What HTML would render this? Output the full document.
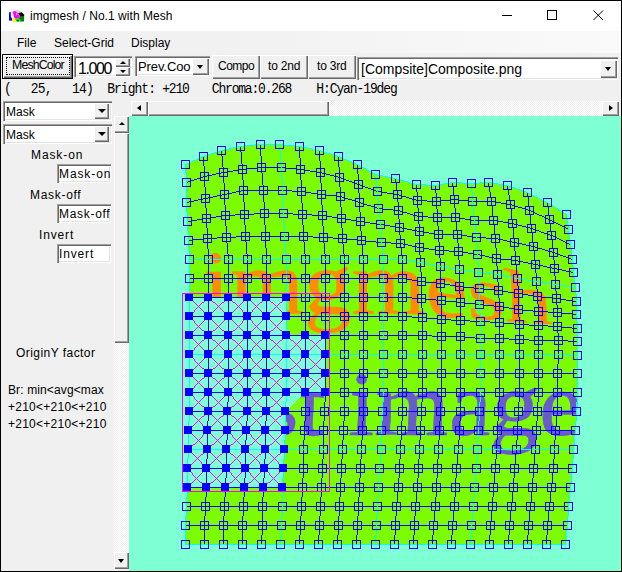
<!DOCTYPE html>
<html lang="en">
<head>
<meta charset="utf-8">
<title>imgmesh / No.1 with Mesh</title>
<style>
html,body{margin:0;padding:0;}
body{width:622px;height:572px;overflow:hidden;position:relative;background:#F0F0F0;
 font-family:"Liberation Sans",sans-serif;font-size:12px;color:#000;}
.a{position:absolute;white-space:pre;line-height:1;}
#win{left:0;top:0;width:620px;height:570px;border:1px solid #000;}
#title{left:1px;top:1px;width:620px;height:30px;background:#fff;}
#menu{left:1px;top:31px;width:620px;height:22px;background:linear-gradient(to right,#F0F0F0 0%,#F1F1F1 35%,#FAFAFA 100%);}
.btn{position:absolute;background:#F0F0F0;box-shadow:inset 1px 1px 0 #fff,inset -1px -1px 0 #696969,inset -2px -2px 0 #A0A0A0;}
.sunk{position:absolute;background:#fff;box-shadow:inset 1px 1px 0 #A0A0A0,inset 2px 2px 0 #696969,inset -1px -1px 0 #fff,inset -2px -2px 0 #E3E3E3;}
.t{position:absolute;white-space:pre;line-height:1;transform-origin:0 0;}
.st{top:82px;font-family:'Liberation Mono',monospace;font-size:13px;transform:scale(1,1.13);}
.arrow{position:absolute;width:0;height:0;border-style:solid;}
.track{position:absolute;background:repeating-conic-gradient(#FFFFFF 0% 25%,#F0F0F0 0% 50%) 0 0/2px 2px;}
.cv{position:absolute;left:129px;top:116px;}
#canvas{left:129px;top:116px;width:492px;height:455px;background:#7FFFD4;}
</style>
</head>
<body>
<div class="a" id="title"></div>
<div class="a" id="menu"></div>

<!-- app icon -->
<svg class="a" style="left:8px;top:9px" width="18" height="15" viewBox="8 9 18 15">
<polygon points="9,12.4 10.8,12 10.8,17 12.6,18.5 12.4,20.8 9,20.6" fill="#0000FF"/>
<polygon points="11,12.2 13.4,11.6 14.5,17 11.2,17.2" fill="#FFFFFF"/>
<polygon points="15,10.6 18.5,10 21.8,12.6 19,13.8 16,12.6" fill="#D0D0D0"/>
<polygon points="18.2,13.2 21.6,12.2 24.3,14.8 24,16.8 20,16.8" fill="#000000"/>
<polygon points="12.4,11.8 15.2,11 17.5,13 19.8,16.6 18.8,18.8 14.6,18.8 13.6,15" fill="#FF00FF"/>
<polygon points="15.8,13.2 17,13 17.4,15 16.2,15.4" fill="#FF80FF"/>
<polygon points="19.5,17 24.1,16.4 24.1,21.4 19.8,21.6 18.6,19" fill="#008000"/>
<polygon points="14.4,19 18.8,18.6 20.4,19.6 20.6,21.2 15.4,21.4" fill="#00FF00"/>
<polygon points="11.8,18 14,17.8 16.6,21.2 15.6,22.2 12.6,21.4" fill="#FFFF00"/>
<polygon points="16.6,20 18.6,19.8 18.8,21.4 17,21.6" fill="#003000"/>
</svg>
<div class="t" style="left:30px;top:10px;font-size:12px;letter-spacing:0.05px;" id="ttl">imgmesh / No.1 with Mesh</div>

<!-- window controls -->
<svg class="a" style="left:495px;top:1px" width="126" height="30" viewBox="495 1 126 30" shape-rendering="crispEdges" fill="none" stroke="#000" stroke-width="1">
<path d="M502 15.5h10"/>
<rect x="547.5" y="10.5" width="9" height="9"/>
<path d="M593.5 10.5l9.5 9.5M603 10.5l-9.5 9.5" shape-rendering="auto"/>
</svg>

<!-- menu -->
<div class="t" style="left:17px;top:37px;" id="m1">File</div>
<div class="t" style="left:54px;top:37px;" id="m2">Select-Grid</div>
<div class="t" style="left:131px;top:37px;" id="m3">Display</div>

<!-- toolbar -->
<div class="a" style="left:2px;top:54px;width:71px;height:25px;background:#000;"></div>
<div class="btn" style="left:3px;top:55px;width:69px;height:23px;"></div>
<div class="a" style="left:6px;top:57px;width:62px;height:16px;border:1px dotted #000;"></div>
<div class="t" style="left:12px;top:59px;font-size:12.3px;letter-spacing:-0.85px;" id="b0">MeshColor</div>

<div class="sunk" style="left:74px;top:56px;width:58px;height:21px;"></div>
<div class="t" style="left:78px;top:61px;font-size:16px;letter-spacing:-1.4px;" id="spin">1.000</div>
<div class="btn" style="left:115px;top:58px;width:15px;height:9px;"></div>
<div class="btn" style="left:115px;top:67px;width:15px;height:9px;"></div>
<div class="arrow" style="left:120px;top:61px;border-width:0 3px 3px 3px;border-color:transparent transparent #000 transparent;"></div>
<div class="arrow" style="left:120px;top:70px;border-width:3px 3px 0 3px;border-color:#000 transparent transparent transparent;"></div>

<div class="sunk" style="left:135px;top:56px;width:75px;height:20px;"></div>
<div class="t" style="left:138px;top:60px;font-size:13px;letter-spacing:-0.1px;" id="cb1">Prev.Coo</div>
<div class="btn" style="left:192px;top:58px;width:17px;height:17px;"></div>
<div class="arrow" style="left:197px;top:65px;border-width:4px 3.5px 0 3.5px;border-color:#000 transparent transparent transparent;"></div>

<div class="btn" style="left:212px;top:55px;width:48px;height:24px;"></div>
<div class="t" style="left:218px;top:60px;letter-spacing:-0.5px;" id="b1">Compo</div>
<div class="btn" style="left:260px;top:55px;width:48px;height:24px;"></div>
<div class="t" style="left:268px;top:60px;letter-spacing:-0.2px;" id="b2">to 2nd</div>
<div class="btn" style="left:308px;top:55px;width:48px;height:24px;"></div>
<div class="t" style="left:317px;top:60px;letter-spacing:-0.2px;" id="b3">to 3rd</div>

<div class="sunk" style="left:357px;top:57px;width:261px;height:23px;"></div>
<div class="t" style="left:361px;top:62px;font-size:14px;" id="cb2">[Compsite]Composite.png</div>
<div class="btn" style="left:600px;top:60px;width:17px;height:18px;"></div>
<div class="arrow" style="left:605px;top:67px;border-width:4px 3.5px 0 3.5px;border-color:#000 transparent transparent transparent;"></div>

<!-- status line -->
<div class="t st" style="left:4.0px;letter-spacing:0px;" id="st0">(</div><div class="t st" style="left:30.8px;letter-spacing:-0.8px;" id="st1">25,</div><div class="t st" style="left:72.0px;letter-spacing:-0.8px;" id="st2">14)</div><div class="t st" style="left:107.2px;letter-spacing:-0.97px;" id="st3">Bright:</div><div class="t st" style="left:162.2px;letter-spacing:-1.2px;" id="st4">+210</div><div class="t st" style="left:211.8px;letter-spacing:-1.19px;" id="st5">Chroma:0.268</div><div class="t st" style="left:316.3px;letter-spacing:-1.1px;" id="st6">H:Cyan-19deg</div>

<!-- left panel -->
<div class="sunk" style="left:3px;top:101px;width:109px;height:20px;"></div>
<div class="t" style="left:6px;top:106px;" id="k1">Mask</div>
<div class="btn" style="left:94px;top:103px;width:15px;height:16px;"></div>
<div class="arrow" style="left:98px;top:109px;border-width:4px 4px 0 4px;border-color:#000 transparent transparent transparent;"></div>
<div class="sunk" style="left:3px;top:124px;width:109px;height:20px;"></div>
<div class="t" style="left:6px;top:129px;" id="k2">Mask</div>
<div class="btn" style="left:94px;top:126px;width:15px;height:16px;"></div>
<div class="arrow" style="left:98px;top:132px;border-width:4px 4px 0 4px;border-color:#000 transparent transparent transparent;"></div>

<div class="t" style="left:31px;top:149px;letter-spacing:0.9px;" id="l1">Mask-on</div>
<div class="sunk" style="left:57px;top:164px;width:54px;height:19px;"></div>
<div class="t" style="left:59px;top:168px;letter-spacing:0.9px;" id="e1">Mask-on</div>
<div class="t" style="left:30px;top:189px;letter-spacing:0.7px;" id="l2">Mask-off</div>
<div class="sunk" style="left:57px;top:204px;width:54px;height:19px;"></div>
<div class="t" style="left:59px;top:208px;letter-spacing:0.7px;" id="e2">Mask-off</div>
<div class="t" style="left:39px;top:229px;letter-spacing:0.85px;" id="l3">Invert</div>
<div class="sunk" style="left:57px;top:244px;width:54px;height:19px;"></div>
<div class="t" style="left:59px;top:248px;letter-spacing:0.85px;" id="e3">Invert</div>

<div class="t" style="left:16px;top:347px;letter-spacing:0.45px;" id="l4">OriginY factor</div>
<div class="t" style="left:8px;top:384px;letter-spacing:0.12px;" id="l5">Br: min&lt;avg&lt;max</div>
<div class="t" style="left:8px;top:401px;letter-spacing:0.25px;" id="l6">+210&lt;+210&lt;+210</div>
<div class="t" style="left:8px;top:418px;letter-spacing:0.25px;" id="l7">+210&lt;+210&lt;+210</div>

<!-- vertical scrollbar -->
<div class="track" style="left:114px;top:116px;width:15px;height:453px;"></div>
<div class="btn" style="left:114px;top:116px;width:15px;height:17px;"></div>
<div class="arrow" style="left:118.5px;top:122px;border-width:0 3px 3px 3px;border-color:transparent transparent #000 transparent;"></div>
<div class="btn" style="left:114px;top:133px;width:15px;height:210px;"></div>
<div class="btn" style="left:114px;top:552px;width:15px;height:17px;"></div>
<div class="arrow" style="left:118px;top:559px;border-width:4px 3px 0 3px;border-color:#000 transparent transparent transparent;"></div>

<!-- horizontal scrollbar -->
<div class="track" style="left:131px;top:101px;width:488px;height:15px;"></div>
<div class="btn" style="left:131px;top:101px;width:17px;height:15px;"></div>
<div class="arrow" style="left:137px;top:105px;border-width:3.5px 4px 3.5px 0;border-color:transparent #000 transparent transparent;"></div>
<div class="btn" style="left:148px;top:101px;width:181px;height:15px;"></div>
<div class="btn" style="left:602px;top:101px;width:17px;height:15px;"></div>
<div class="arrow" style="left:609px;top:105px;border-width:3.5px 0 3.5px 4px;border-color:transparent transparent transparent #000;"></div>

<!-- canvas -->
<div class="a" id="canvas"></div>
<svg class="cv" width="492" height="455" viewBox="129 116 492 455">
<defs>
<g id="tx" font-family="'Liberation Serif', serif" stroke-linejoin="round"><text transform="translate(203.4 313.5) scale(1.06 1)" font-size="90" fill="#FF8C00" stroke="#FF8C00" stroke-width="0.5" xml:space="preserve">imgmesh</text><text transform="translate(193.1 434.5) scale(1.06 1)" font-size="90" fill="#6A5ACD" stroke="#6A5ACD" stroke-width="0.5" xml:space="preserve">test image</text></g>
<clipPath id="c0"><path d="M187.97 240.05 208.09 238.13 189.23 260.14"/></clipPath>
<clipPath id="c1"><path d="M207.76 237.85 208.98 260.01 188.89 259.85"/></clipPath>
<clipPath id="c2"><path d="M207.01 238.01 227.09 237.13 208.24 260.15"/></clipPath>
<clipPath id="c3"><path d="M226.74 236.84 228.99 259.99 207.89 259.85"/></clipPath>
<clipPath id="c4"><path d="M226.01 237.01 246.08 236.11 228.28 260.16"/></clipPath>
<clipPath id="c5"><path d="M245.72 235.83 247.97 260.02 227.91 259.88"/></clipPath>
<clipPath id="c6"><path d="M245.02 235.99 266.1 236.14 247.27 260.16"/></clipPath>
<clipPath id="c7"><path d="M265.74 235.84 266.96 260.03 246.91 259.87"/></clipPath>
<clipPath id="c8"><path d="M265.04 235.97 285.09 236.13 266.26 260.16"/></clipPath>
<clipPath id="c9"><path d="M284.73 235.84 286.98 260.01 265.9 259.86"/></clipPath>
<clipPath id="c10"><path d="M284.03 235.98 304.09 236.12 286.28 260.17"/></clipPath>
<clipPath id="c11"><path d="M303.72 235.83 305.97 260.02 285.91 259.88"/></clipPath>
<clipPath id="c12"><path d="M303.03 235.98 324.11 237.16 305.27 260.16"/></clipPath>
<clipPath id="c13"><path d="M323.74 236.84 325.99 259.99 304.89 259.85"/></clipPath>
<clipPath id="c14"><path d="M323.03 236.98 343.11 238.16 325.27 260.16"/></clipPath>
<clipPath id="c15"><path d="M342.74 237.84 344.99 259.99 324.9 259.85"/></clipPath>
<clipPath id="c16"><path d="M342.03 237.98 362.13 240.2 344.25 260.16"/></clipPath>
<clipPath id="c17"><path d="M361.76 239.85 364.02 259.97 343.88 259.83"/></clipPath>
<clipPath id="c18"><path d="M360.99 240.02 382.15 242.24 363.22 260.14"/></clipPath>
<clipPath id="c19"><path d="M381.8 241.87 384.05 259.93 362.86 259.79"/></clipPath>
<clipPath id="c20"><path d="M380.97 242.04 401.15 243.23 383.21 260.14"/></clipPath>
<clipPath id="c21"><path d="M400.8 242.87 403.06 259.92 382.86 259.78"/></clipPath>
<clipPath id="c22"><path d="M399.99 243.02 420.18 247.35 402.17 260.12"/></clipPath>
<clipPath id="c23"><path d="M419.86 246.9 421.01 262.98 401.82 259.67"/></clipPath>
<clipPath id="c24"><path d="M418.97 247.04 440.18 250.34 420.11 263.08"/></clipPath>
<clipPath id="c25"><path d="M439.88 249.91 441.01 266.98 419.81 262.64"/></clipPath>
<clipPath id="c26"><path d="M438.97 250.05 459.15 251.25 440.16 267.11"/></clipPath>
<clipPath id="c27"><path d="M458.82 250.88 459.98 270.01 439.83 266.72"/></clipPath>
<clipPath id="c28"><path d="M458.02 250.99 478.17 254.28 459.18 270.12"/></clipPath>
<clipPath id="c29"><path d="M477.82 253.88 478.98 273.01 458.83 269.72"/></clipPath>
<clipPath id="c30"><path d="M477.03 253.98 497.18 258.32 478.17 273.12"/></clipPath>
<clipPath id="c31"><path d="M496.85 257.89 498.02 274.97 477.83 272.72"/></clipPath>
<clipPath id="c32"><path d="M495.98 258.03 516.17 260.28 497.15 275.11"/></clipPath>
<clipPath id="c33"><path d="M515.81 259.87 517.99 278.99 496.82 274.68"/></clipPath>
<clipPath id="c34"><path d="M515.01 260.01 536.18 264.32 517.19 279.13"/></clipPath>
<clipPath id="c35"><path d="M535.84 263.89 536.99 281.99 516.83 278.7"/></clipPath>
<clipPath id="c36"><path d="M535.02 263.99 555.18 268.33 536.15 282.11"/></clipPath>
<clipPath id="c37"><path d="M554.85 267.9 556.01 284.98 535.82 281.68"/></clipPath>
<clipPath id="c38"><path d="M554.01 268.01 574.18 272.35 555.14 285.1"/></clipPath>
<clipPath id="c39"><path d="M573.86 271.9 576.04 287.94 554.82 284.66"/></clipPath>
<clipPath id="c40"><path d="M189.01 259.01 209.13 259.19 189.19 279.13"/></clipPath>
<clipPath id="c41"><path d="M208.81 258.87 208.99 278.99 188.87 278.81"/></clipPath>
<clipPath id="c42"><path d="M207.99 259.02 229.13 259.2 208.17 279.12"/></clipPath>
<clipPath id="c43"><path d="M228.83 258.88 229.01 278.98 207.87 278.8"/></clipPath>
<clipPath id="c44"><path d="M228.01 259.01 248.13 259.19 228.19 279.13"/></clipPath>
<clipPath id="c45"><path d="M247.81 258.87 247.99 278.99 227.87 278.81"/></clipPath>
<clipPath id="c46"><path d="M247.01 259.01 267.13 259.19 247.19 279.13"/></clipPath>
<clipPath id="c47"><path d="M266.81 258.87 266.99 278.99 246.87 278.81"/></clipPath>
<clipPath id="c48"><path d="M265.99 259.02 287.13 259.2 266.17 279.12"/></clipPath>
<clipPath id="c49"><path d="M286.83 258.88 287.01 278.98 265.87 278.8"/></clipPath>
<clipPath id="c50"><path d="M286.01 259.01 306.13 259.19 286.19 279.13"/></clipPath>
<clipPath id="c51"><path d="M305.81 258.87 305.99 278.99 285.87 278.81"/></clipPath>
<clipPath id="c52"><path d="M304.99 259.02 326.13 259.2 305.17 279.12"/></clipPath>
<clipPath id="c53"><path d="M325.83 258.88 326.01 278.98 304.87 278.8"/></clipPath>
<clipPath id="c54"><path d="M325.01 259.01 345.13 259.19 325.19 279.13"/></clipPath>
<clipPath id="c55"><path d="M344.81 258.87 344.99 278.99 324.87 278.81"/></clipPath>
<clipPath id="c56"><path d="M344.01 259.01 364.13 259.19 344.19 279.13"/></clipPath>
<clipPath id="c57"><path d="M363.81 258.87 363.99 278.99 343.87 278.81"/></clipPath>
<clipPath id="c58"><path d="M362.99 259.02 384.13 259.2 363.17 279.12"/></clipPath>
<clipPath id="c59"><path d="M383.83 258.88 384.01 278.98 362.87 278.8"/></clipPath>
<clipPath id="c60"><path d="M383.01 259.01 403.13 259.19 383.19 279.13"/></clipPath>
<clipPath id="c61"><path d="M402.81 258.87 402.99 278.99 382.87 278.81"/></clipPath>
<clipPath id="c62"><path d="M402.06 258.96 421.16 262.26 402.18 279.12"/></clipPath>
<clipPath id="c63"><path d="M420.81 261.87 421.97 282.02 401.84 278.73"/></clipPath>
<clipPath id="c64"><path d="M420.03 261.98 441.17 266.31 421.17 282.12"/></clipPath>
<clipPath id="c65"><path d="M440.86 265.9 440.99 283.99 420.84 281.73"/></clipPath>
<clipPath id="c66"><path d="M440.02 265.99 460.17 269.31 440.13 284.1"/></clipPath>
<clipPath id="c67"><path d="M459.87 268.9 459.98 287.01 439.83 283.69"/></clipPath>
<clipPath id="c68"><path d="M459.02 268.99 479.17 272.31 459.13 287.1"/></clipPath>
<clipPath id="c69"><path d="M478.86 271.9 480.03 288.96 458.83 286.71"/></clipPath>
<clipPath id="c70"><path d="M477.98 272.03 498.17 274.28 479.15 289.11"/></clipPath>
<clipPath id="c71"><path d="M497.85 273.89 499.02 290.97 478.83 288.72"/></clipPath>
<clipPath id="c72"><path d="M496.99 274.02 518.19 278.36 498.12 291.09"/></clipPath>
<clipPath id="c73"><path d="M517.89 277.92 519.03 293.96 497.82 290.66"/></clipPath>
<clipPath id="c74"><path d="M516.98 278.03 537.18 281.33 518.13 294.09"/></clipPath>
<clipPath id="c75"><path d="M536.87 280.91 538.02 296.97 517.82 293.67"/></clipPath>
<clipPath id="c76"><path d="M535.98 281.03 556.18 284.33 537.13 297.09"/></clipPath>
<clipPath id="c77"><path d="M555.88 283.91 557.05 298.94 536.82 296.68"/></clipPath>
<clipPath id="c78"><path d="M554.96 284.06 576.19 287.36 556.09 299.07"/></clipPath>
<clipPath id="c79"><path d="M575.91 286.93 577.04 301.94 555.81 298.64"/></clipPath>
<clipPath id="c80"><path d="M189.01 278.01 209.13 278.19 189.19 298.13"/></clipPath>
<clipPath id="c81"><path d="M208.81 277.87 208.99 297.99 188.87 297.81"/></clipPath>
<clipPath id="c82"><path d="M207.99 278.02 229.13 278.2 208.17 298.12"/></clipPath>
<clipPath id="c83"><path d="M228.83 277.88 229.01 297.98 207.87 297.8"/></clipPath>
<clipPath id="c84"><path d="M228.01 278.01 248.13 278.19 228.19 298.13"/></clipPath>
<clipPath id="c85"><path d="M247.81 277.87 247.99 297.99 227.87 297.81"/></clipPath>
<clipPath id="c86"><path d="M247.01 278.01 267.13 278.19 247.19 298.13"/></clipPath>
<clipPath id="c87"><path d="M266.81 277.87 266.99 297.99 246.87 297.81"/></clipPath>
<clipPath id="c88"><path d="M265.99 278.02 287.13 278.2 266.17 298.12"/></clipPath>
<clipPath id="c89"><path d="M286.83 277.88 287.01 297.98 265.87 297.8"/></clipPath>
<clipPath id="c90"><path d="M286.01 278.01 306.13 278.19 286.19 298.13"/></clipPath>
<clipPath id="c91"><path d="M305.81 277.87 305.99 297.99 285.87 297.81"/></clipPath>
<clipPath id="c92"><path d="M304.99 278.02 326.13 278.2 305.17 298.12"/></clipPath>
<clipPath id="c93"><path d="M325.83 277.88 326.01 297.98 304.87 297.8"/></clipPath>
<clipPath id="c94"><path d="M325.01 278.01 345.13 278.19 325.19 298.13"/></clipPath>
<clipPath id="c95"><path d="M344.81 277.87 344.99 297.99 324.87 297.81"/></clipPath>
<clipPath id="c96"><path d="M344.01 278.01 364.13 278.19 344.19 298.13"/></clipPath>
<clipPath id="c97"><path d="M363.81 277.87 363.99 297.99 343.87 297.81"/></clipPath>
<clipPath id="c98"><path d="M362.99 278.02 384.13 278.2 363.17 298.12"/></clipPath>
<clipPath id="c99"><path d="M383.83 277.88 384.01 297.98 362.87 297.8"/></clipPath>
<clipPath id="c100"><path d="M383.01 278.01 403.13 278.19 383.19 298.13"/></clipPath>
<clipPath id="c101"><path d="M402.81 277.87 402.99 297.99 382.87 297.81"/></clipPath>
<clipPath id="c102"><path d="M402.04 277.97 422.16 281.27 402.17 298.12"/></clipPath>
<clipPath id="c103"><path d="M421.85 280.89 422.01 298.98 401.85 297.76"/></clipPath>
<clipPath id="c104"><path d="M421.01 281.01 441.16 283.27 421.14 299.1"/></clipPath>
<clipPath id="c105"><path d="M440.84 282.89 442.02 300.97 420.84 298.72"/></clipPath>
<clipPath id="c106"><path d="M440.01 283.01 460.17 286.3 441.16 301.11"/></clipPath>
<clipPath id="c107"><path d="M459.85 285.89 461.02 302.97 440.83 300.72"/></clipPath>
<clipPath id="c108"><path d="M458.97 286.04 480.17 288.29 460.14 303.1"/></clipPath>
<clipPath id="c109"><path d="M479.87 287.91 480.01 304.98 459.83 302.71"/></clipPath>
<clipPath id="c110"><path d="M478.99 288.02 499.17 290.29 479.13 305.09"/></clipPath>
<clipPath id="c111"><path d="M498.86 289.9 500.03 306.96 478.83 304.71"/></clipPath>
<clipPath id="c112"><path d="M497.98 290.03 519.18 293.33 499.13 307.09"/></clipPath>
<clipPath id="c113"><path d="M518.88 292.91 518.99 309.99 498.82 306.68"/></clipPath>
<clipPath id="c114"><path d="M518.01 293.01 538.18 296.32 518.12 310.09"/></clipPath>
<clipPath id="c115"><path d="M537.88 295.91 539.04 311.94 517.83 309.69"/></clipPath>
<clipPath id="c116"><path d="M536.97 296.05 557.17 298.3 538.14 312.1"/></clipPath>
<clipPath id="c117"><path d="M556.87 297.91 558.06 312.92 537.83 311.72"/></clipPath>
<clipPath id="c118"><path d="M555.96 298.06 577.19 301.36 557.09 313.07"/></clipPath>
<clipPath id="c119"><path d="M576.93 300.95 577.05 314.93 556.82 312.66"/></clipPath>
<clipPath id="c120"><path d="M286.01 297.01 306.13 297.19 286.19 317.13"/></clipPath>
<clipPath id="c121"><path d="M305.81 296.87 305.99 316.99 285.87 316.81"/></clipPath>
<clipPath id="c122"><path d="M304.99 297.02 326.13 297.2 305.17 317.12"/></clipPath>
<clipPath id="c123"><path d="M325.83 296.88 326.01 316.98 304.87 316.8"/></clipPath>
<clipPath id="c124"><path d="M325.01 297.01 345.13 297.19 325.19 317.13"/></clipPath>
<clipPath id="c125"><path d="M344.81 296.87 344.99 316.99 324.87 316.81"/></clipPath>
<clipPath id="c126"><path d="M344.01 297.01 364.13 297.19 344.19 317.13"/></clipPath>
<clipPath id="c127"><path d="M363.81 296.87 363.99 316.99 343.87 316.81"/></clipPath>
<clipPath id="c128"><path d="M362.99 297.02 384.13 297.2 363.17 317.12"/></clipPath>
<clipPath id="c129"><path d="M383.83 296.88 384.01 316.98 362.87 316.8"/></clipPath>
<clipPath id="c130"><path d="M383.01 297.01 403.13 297.19 383.19 317.13"/></clipPath>
<clipPath id="c131"><path d="M402.81 296.87 402.99 316.99 382.87 316.81"/></clipPath>
<clipPath id="c132"><path d="M402.02 296.99 422.14 298.21 402.18 317.12"/></clipPath>
<clipPath id="c133"><path d="M421.81 297.87 423.01 317.98 401.86 316.78"/></clipPath>
<clipPath id="c134"><path d="M421.01 298.01 442.15 300.25 422.19 318.13"/></clipPath>
<clipPath id="c135"><path d="M441.83 299.88 441.97 320.02 421.85 317.76"/></clipPath>
<clipPath id="c136"><path d="M441.03 299.98 461.15 302.24 441.17 320.12"/></clipPath>
<clipPath id="c137"><path d="M460.83 301.88 460.99 320.99 440.85 319.77"/></clipPath>
<clipPath id="c138"><path d="M460.02 301.99 480.16 304.26 460.16 321.11"/></clipPath>
<clipPath id="c139"><path d="M479.84 303.89 481.03 321.96 459.85 320.75"/></clipPath>
<clipPath id="c140"><path d="M478.98 304.03 500.16 306.28 480.16 322.11"/></clipPath>
<clipPath id="c141"><path d="M499.87 305.9 500.02 322.97 479.84 321.74"/></clipPath>
<clipPath id="c142"><path d="M499.01 306.01 519.18 309.32 499.12 323.09"/></clipPath>
<clipPath id="c143"><path d="M518.88 308.91 520.04 324.94 498.83 322.69"/></clipPath>
<clipPath id="c144"><path d="M517.96 309.06 539.17 311.31 519.12 325.09"/></clipPath>
<clipPath id="c145"><path d="M538.9 310.93 539.05 325.93 518.83 324.71"/></clipPath>
<clipPath id="c146"><path d="M537.95 311.07 558.17 312.29 538.1 326.07"/></clipPath>
<clipPath id="c147"><path d="M557.9 311.93 558.05 326.93 537.83 325.71"/></clipPath>
<clipPath id="c148"><path d="M556.96 312.05 577.18 314.32 557.09 327.07"/></clipPath>
<clipPath id="c149"><path d="M576.9 313.92 578.06 328.92 556.82 326.67"/></clipPath>
<clipPath id="c150"><path d="M286.01 316.01 306.13 316.19 286.19 336.13"/></clipPath>
<clipPath id="c151"><path d="M305.81 315.87 305.99 335.99 285.87 335.81"/></clipPath>
<clipPath id="c152"><path d="M304.99 316.02 326.13 316.2 305.17 336.12"/></clipPath>
<clipPath id="c153"><path d="M325.83 315.88 326.01 335.98 304.87 335.8"/></clipPath>
<clipPath id="c154"><path d="M325.01 316.01 345.13 316.19 325.19 336.13"/></clipPath>
<clipPath id="c155"><path d="M344.81 315.87 344.99 335.99 324.87 335.81"/></clipPath>
<clipPath id="c156"><path d="M344.01 316.01 364.13 316.19 344.19 336.13"/></clipPath>
<clipPath id="c157"><path d="M363.81 315.87 363.99 335.99 343.87 335.81"/></clipPath>
<clipPath id="c158"><path d="M362.99 316.02 384.13 316.2 363.17 336.12"/></clipPath>
<clipPath id="c159"><path d="M383.83 315.88 384.01 335.98 362.87 335.8"/></clipPath>
<clipPath id="c160"><path d="M383.01 316.01 403.13 316.19 383.19 336.13"/></clipPath>
<clipPath id="c161"><path d="M402.81 315.87 402.99 335.99 382.87 335.81"/></clipPath>
<clipPath id="c162"><path d="M402.01 316.01 423.14 317.23 402.17 336.12"/></clipPath>
<clipPath id="c163"><path d="M422.84 316.89 423.02 335.97 401.86 335.79"/></clipPath>
<clipPath id="c164"><path d="M422.02 316.99 442.16 319.26 422.16 336.11"/></clipPath>
<clipPath id="c165"><path d="M441.85 318.89 442.01 336.98 421.85 335.76"/></clipPath>
<clipPath id="c166"><path d="M440.99 319.02 461.15 320.24 441.15 337.11"/></clipPath>
<clipPath id="c167"><path d="M460.86 319.9 461.04 336.95 440.85 336.77"/></clipPath>
<clipPath id="c168"><path d="M459.97 320.05 481.16 321.27 460.12 337.09"/></clipPath>
<clipPath id="c169"><path d="M480.87 320.91 481.01 338.98 459.83 336.72"/></clipPath>
<clipPath id="c170"><path d="M479.99 321.02 500.15 322.24 480.15 339.11"/></clipPath>
<clipPath id="c171"><path d="M499.86 321.9 500.04 338.95 479.85 338.77"/></clipPath>
<clipPath id="c172"><path d="M498.98 322.03 520.17 324.3 499.11 339.08"/></clipPath>
<clipPath id="c173"><path d="M519.9 323.92 520.05 339.94 498.83 338.72"/></clipPath>
<clipPath id="c174"><path d="M518.96 324.05 539.16 325.27 519.12 340.09"/></clipPath>
<clipPath id="c175"><path d="M538.88 324.91 539.04 340.95 518.84 339.73"/></clipPath>
<clipPath id="c176"><path d="M537.96 325.05 558.16 326.27 538.12 341.09"/></clipPath>
<clipPath id="c177"><path d="M557.88 325.91 559.08 340.89 537.84 340.74"/></clipPath>
<clipPath id="c178"><path d="M556.94 326.08 578.18 328.33 558.1 341.08"/></clipPath>
<clipPath id="c179"><path d="M577.92 327.94 578.06 341.92 557.83 340.69"/></clipPath>
<clipPath id="c180"><path d="M325.01 335.01 345.13 335.19 325.19 355.13"/></clipPath>
<clipPath id="c181"><path d="M344.81 334.87 344.99 354.99 324.87 354.81"/></clipPath>
<clipPath id="c182"><path d="M344.01 335.01 364.13 335.19 344.19 355.13"/></clipPath>
<clipPath id="c183"><path d="M363.81 334.87 363.99 354.99 343.87 354.81"/></clipPath>
<clipPath id="c184"><path d="M362.99 335.02 384.13 335.2 363.17 355.12"/></clipPath>
<clipPath id="c185"><path d="M383.83 334.88 384.01 354.98 362.87 354.8"/></clipPath>
<clipPath id="c186"><path d="M383.01 335.01 403.13 335.19 383.19 355.13"/></clipPath>
<clipPath id="c187"><path d="M402.81 334.87 402.99 354.99 382.87 354.81"/></clipPath>
<clipPath id="c188"><path d="M401.99 335.02 423.13 335.2 402.17 355.12"/></clipPath>
<clipPath id="c189"><path d="M422.83 334.88 423.01 354.98 401.87 354.8"/></clipPath>
<clipPath id="c190"><path d="M422.02 334.99 442.14 336.21 422.18 355.12"/></clipPath>
<clipPath id="c191"><path d="M441.83 335.88 442.01 354.98 421.87 354.8"/></clipPath>
<clipPath id="c192"><path d="M440.99 336.02 461.13 336.2 441.17 355.12"/></clipPath>
<clipPath id="c193"><path d="M460.83 335.88 461.01 354.98 440.87 354.8"/></clipPath>
<clipPath id="c194"><path d="M460.01 336.01 481.16 338.27 460.15 355.1"/></clipPath>
<clipPath id="c195"><path d="M480.87 337.91 481.05 354.94 459.85 354.76"/></clipPath>
<clipPath id="c196"><path d="M479.96 338.05 500.15 338.23 480.14 355.1"/></clipPath>
<clipPath id="c197"><path d="M499.86 337.9 500.04 354.95 479.85 354.77"/></clipPath>
<clipPath id="c198"><path d="M498.97 338.05 520.16 339.27 499.12 355.09"/></clipPath>
<clipPath id="c199"><path d="M519.89 338.92 520.06 354.92 498.84 354.75"/></clipPath>
<clipPath id="c200"><path d="M518.96 339.05 539.16 340.27 519.12 355.09"/></clipPath>
<clipPath id="c201"><path d="M538.89 339.92 539.06 354.92 518.84 354.74"/></clipPath>
<clipPath id="c202"><path d="M537.93 340.1 559.16 340.27 538.09 355.07"/></clipPath>
<clipPath id="c203"><path d="M558.91 339.93 559.07 354.9 537.84 354.73"/></clipPath>
<clipPath id="c204"><path d="M557.95 340.07 578.17 341.29 558.1 355.07"/></clipPath>
<clipPath id="c205"><path d="M577.9 340.93 578.05 355.93 557.83 354.71"/></clipPath>
<clipPath id="c206"><path d="M325.01 354.01 345.13 354.19 325.19 374.13"/></clipPath>
<clipPath id="c207"><path d="M344.81 353.87 344.99 373.99 324.87 373.81"/></clipPath>
<clipPath id="c208"><path d="M344.01 354.01 364.13 354.19 344.19 374.13"/></clipPath>
<clipPath id="c209"><path d="M363.81 353.87 363.99 373.99 343.87 373.81"/></clipPath>
<clipPath id="c210"><path d="M362.99 354.02 384.13 354.2 363.17 374.12"/></clipPath>
<clipPath id="c211"><path d="M383.83 353.88 384.01 373.98 362.87 373.8"/></clipPath>
<clipPath id="c212"><path d="M383.01 354.01 403.13 354.19 383.19 374.13"/></clipPath>
<clipPath id="c213"><path d="M402.81 353.87 402.99 373.99 382.87 373.81"/></clipPath>
<clipPath id="c214"><path d="M401.99 354.02 423.13 354.2 402.17 374.12"/></clipPath>
<clipPath id="c215"><path d="M422.83 353.88 423.01 373.98 401.87 373.8"/></clipPath>
<clipPath id="c216"><path d="M422.01 354.01 442.13 354.19 422.19 374.13"/></clipPath>
<clipPath id="c217"><path d="M441.81 353.87 441.99 373.99 421.87 373.81"/></clipPath>
<clipPath id="c218"><path d="M441.01 354.01 461.13 354.19 441.19 374.13"/></clipPath>
<clipPath id="c219"><path d="M460.81 353.87 460.99 373.99 440.87 373.81"/></clipPath>
<clipPath id="c220"><path d="M459.99 354.02 481.13 354.2 460.17 374.12"/></clipPath>
<clipPath id="c221"><path d="M480.83 353.88 481.01 373.98 459.87 373.8"/></clipPath>
<clipPath id="c222"><path d="M480.01 354.01 500.13 354.19 480.19 374.13"/></clipPath>
<clipPath id="c223"><path d="M499.81 353.87 499.99 373.99 479.87 373.81"/></clipPath>
<clipPath id="c224"><path d="M498.99 354.02 520.13 354.2 499.17 374.12"/></clipPath>
<clipPath id="c225"><path d="M519.83 353.88 520.01 373.98 498.87 373.8"/></clipPath>
<clipPath id="c226"><path d="M519.01 354.01 539.13 354.19 519.19 374.13"/></clipPath>
<clipPath id="c227"><path d="M538.81 353.87 538.99 373.99 518.87 373.81"/></clipPath>
<clipPath id="c228"><path d="M537.99 354.02 559.13 354.2 538.17 374.12"/></clipPath>
<clipPath id="c229"><path d="M558.84 353.89 557.98 374.01 537.87 373.81"/></clipPath>
<clipPath id="c230"><path d="M558.03 353.98 578.14 355.22 557.15 374.11"/></clipPath>
<clipPath id="c231"><path d="M577.84 354.89 578.02 373.97 556.86 373.79"/></clipPath>
<clipPath id="c232"><path d="M325.01 373.01 345.13 373.19 325.19 393.13"/></clipPath>
<clipPath id="c233"><path d="M344.81 372.87 344.99 392.99 324.87 392.81"/></clipPath>
<clipPath id="c234"><path d="M344.01 373.01 364.13 373.19 344.19 393.13"/></clipPath>
<clipPath id="c235"><path d="M363.81 372.87 363.99 392.99 343.87 392.81"/></clipPath>
<clipPath id="c236"><path d="M362.99 373.02 384.13 373.2 363.17 393.12"/></clipPath>
<clipPath id="c237"><path d="M383.83 372.88 384.01 392.98 362.87 392.8"/></clipPath>
<clipPath id="c238"><path d="M383.01 373.01 403.13 373.19 383.19 393.13"/></clipPath>
<clipPath id="c239"><path d="M402.81 372.87 402.99 392.99 382.87 392.81"/></clipPath>
<clipPath id="c240"><path d="M401.99 373.02 423.13 373.2 402.17 393.12"/></clipPath>
<clipPath id="c241"><path d="M422.83 372.88 423.01 392.98 401.87 392.8"/></clipPath>
<clipPath id="c242"><path d="M422.01 373.01 442.13 373.19 422.19 393.13"/></clipPath>
<clipPath id="c243"><path d="M441.81 372.87 441.99 392.99 421.87 392.81"/></clipPath>
<clipPath id="c244"><path d="M441.01 373.01 461.13 373.19 441.19 393.13"/></clipPath>
<clipPath id="c245"><path d="M460.81 372.87 460.99 392.99 440.87 392.81"/></clipPath>
<clipPath id="c246"><path d="M459.99 373.02 481.13 373.2 460.17 393.12"/></clipPath>
<clipPath id="c247"><path d="M480.83 372.88 481.01 392.98 459.87 392.8"/></clipPath>
<clipPath id="c248"><path d="M480.01 373.01 500.13 373.19 480.19 393.13"/></clipPath>
<clipPath id="c249"><path d="M499.81 372.87 499.99 392.99 479.87 392.81"/></clipPath>
<clipPath id="c250"><path d="M498.99 373.02 520.13 373.2 499.17 393.12"/></clipPath>
<clipPath id="c251"><path d="M519.83 372.88 520.01 392.98 498.87 392.8"/></clipPath>
<clipPath id="c252"><path d="M519.01 373.01 539.13 373.19 519.19 393.13"/></clipPath>
<clipPath id="c253"><path d="M538.81 372.87 538.99 392.99 518.87 392.81"/></clipPath>
<clipPath id="c254"><path d="M538.01 373.01 558.13 373.19 538.19 393.13"/></clipPath>
<clipPath id="c255"><path d="M557.81 372.87 557.99 392.99 537.87 392.81"/></clipPath>
<clipPath id="c256"><path d="M556.99 373.02 578.13 373.2 557.17 393.12"/></clipPath>
<clipPath id="c257"><path d="M577.83 372.88 578.01 392.98 556.87 392.8"/></clipPath>
<clipPath id="c258"><path d="M305.83 391.88 306.01 411.98 284.87 411.8"/></clipPath>
<clipPath id="c259"><path d="M304.99 392.02 326.13 392.2 305.17 412.12"/></clipPath>
<clipPath id="c260"><path d="M325.84 391.89 324.98 412.01 304.87 411.81"/></clipPath>
<clipPath id="c261"><path d="M325.02 391.99 345.13 392.19 324.16 412.11"/></clipPath>
<clipPath id="c262"><path d="M344.83 391.88 345.01 411.98 323.87 411.8"/></clipPath>
<clipPath id="c263"><path d="M344.01 392.01 364.13 392.19 344.19 412.13"/></clipPath>
<clipPath id="c264"><path d="M363.81 391.87 363.99 411.99 343.87 411.81"/></clipPath>
<clipPath id="c265"><path d="M362.99 392.02 384.13 392.2 363.17 412.12"/></clipPath>
<clipPath id="c266"><path d="M383.84 391.89 382.98 412.01 362.87 411.81"/></clipPath>
<clipPath id="c267"><path d="M383.02 391.99 403.13 392.19 382.16 412.11"/></clipPath>
<clipPath id="c268"><path d="M402.83 391.88 403.01 411.98 381.87 411.8"/></clipPath>
<clipPath id="c269"><path d="M401.99 392.02 423.13 392.2 402.17 412.12"/></clipPath>
<clipPath id="c270"><path d="M422.84 391.89 421.98 412.01 401.87 411.81"/></clipPath>
<clipPath id="c271"><path d="M422.02 391.99 442.13 392.19 421.16 412.11"/></clipPath>
<clipPath id="c272"><path d="M441.84 391.89 440.98 412.01 420.87 411.81"/></clipPath>
<clipPath id="c273"><path d="M441.02 391.99 461.13 392.19 440.16 412.11"/></clipPath>
<clipPath id="c274"><path d="M460.83 391.88 461.01 411.98 439.87 411.8"/></clipPath>
<clipPath id="c275"><path d="M459.99 392.02 481.13 392.2 460.17 412.12"/></clipPath>
<clipPath id="c276"><path d="M480.84 391.89 479.98 412.01 459.87 411.81"/></clipPath>
<clipPath id="c277"><path d="M480.02 391.99 500.13 392.19 479.16 412.11"/></clipPath>
<clipPath id="c278"><path d="M499.84 391.89 498.98 412.01 478.87 411.81"/></clipPath>
<clipPath id="c279"><path d="M499.01 392.01 520.14 392.21 498.15 412.11"/></clipPath>
<clipPath id="c280"><path d="M519.85 391.89 518.99 411.99 497.86 411.79"/></clipPath>
<clipPath id="c281"><path d="M519.02 391.99 539.13 392.19 518.16 412.11"/></clipPath>
<clipPath id="c282"><path d="M538.84 391.89 537.98 412.01 517.87 411.81"/></clipPath>
<clipPath id="c283"><path d="M538.02 391.99 558.13 392.19 537.16 412.11"/></clipPath>
<clipPath id="c284"><path d="M557.83 391.88 558.01 411.98 536.87 411.8"/></clipPath>
<clipPath id="c285"><path d="M556.99 392.02 578.13 392.2 557.17 412.12"/></clipPath>
<clipPath id="c286"><path d="M577.84 391.89 576.98 412.01 556.87 411.81"/></clipPath>
<clipPath id="c287"><path d="M284.99 411.02 306.13 411.2 285.17 431.12"/></clipPath>
<clipPath id="c288"><path d="M305.84 410.89 304.98 431.01 284.87 430.81"/></clipPath>
<clipPath id="c289"><path d="M305.02 410.99 325.13 411.19 304.16 431.11"/></clipPath>
<clipPath id="c290"><path d="M324.84 410.89 323.98 431.01 303.87 430.81"/></clipPath>
<clipPath id="c291"><path d="M324.01 411.01 345.14 411.21 323.15 431.11"/></clipPath>
<clipPath id="c292"><path d="M344.85 410.89 343.99 430.99 322.86 430.79"/></clipPath>
<clipPath id="c293"><path d="M344.02 410.99 364.13 411.19 343.16 431.11"/></clipPath>
<clipPath id="c294"><path d="M363.84 410.89 362.98 431.01 342.87 430.81"/></clipPath>
<clipPath id="c295"><path d="M363.02 410.99 383.13 411.19 362.16 431.11"/></clipPath>
<clipPath id="c296"><path d="M382.84 410.89 381.98 431.01 361.87 430.81"/></clipPath>
<clipPath id="c297"><path d="M382.01 411.01 403.14 411.21 381.15 431.11"/></clipPath>
<clipPath id="c298"><path d="M402.85 410.89 401.99 430.99 380.86 430.79"/></clipPath>
<clipPath id="c299"><path d="M402.02 410.99 422.13 411.19 401.16 431.11"/></clipPath>
<clipPath id="c300"><path d="M421.84 410.89 420.98 431.01 400.87 430.81"/></clipPath>
<clipPath id="c301"><path d="M421.02 410.99 441.13 411.19 420.16 431.11"/></clipPath>
<clipPath id="c302"><path d="M440.84 410.89 439.98 431.01 419.87 430.81"/></clipPath>
<clipPath id="c303"><path d="M440.01 411.01 461.14 411.21 439.15 431.11"/></clipPath>
<clipPath id="c304"><path d="M460.85 410.89 459.99 430.99 438.86 430.79"/></clipPath>
<clipPath id="c305"><path d="M460.02 410.99 480.13 411.19 459.16 431.11"/></clipPath>
<clipPath id="c306"><path d="M479.84 410.89 478.98 431.01 458.87 430.81"/></clipPath>
<clipPath id="c307"><path d="M479.02 410.99 499.13 411.19 478.16 431.11"/></clipPath>
<clipPath id="c308"><path d="M498.84 410.89 497.98 431.01 477.87 430.81"/></clipPath>
<clipPath id="c309"><path d="M498.01 411.01 519.14 411.21 497.15 431.11"/></clipPath>
<clipPath id="c310"><path d="M518.85 410.89 517.99 430.99 496.86 430.79"/></clipPath>
<clipPath id="c311"><path d="M518.02 410.99 538.13 411.19 517.16 431.11"/></clipPath>
<clipPath id="c312"><path d="M537.84 410.89 536.98 431.01 516.87 430.81"/></clipPath>
<clipPath id="c313"><path d="M537.01 411.01 558.14 411.21 536.15 431.11"/></clipPath>
<clipPath id="c314"><path d="M557.86 410.9 555.97 431.02 535.87 430.8"/></clipPath>
<clipPath id="c315"><path d="M557.03 410.98 577.13 411.2 555.14 431.1"/></clipPath>
<clipPath id="c316"><path d="M576.85 410.89 575.99 430.99 554.86 430.79"/></clipPath>
<clipPath id="c317"><path d="M285.02 429.99 305.13 430.19 284.16 450.11"/></clipPath>
<clipPath id="c318"><path d="M304.84 429.89 303.98 450.01 283.87 449.81"/></clipPath>
<clipPath id="c319"><path d="M304.02 429.99 324.13 430.19 303.16 450.11"/></clipPath>
<clipPath id="c320"><path d="M323.83 429.88 324.01 449.98 302.87 449.8"/></clipPath>
<clipPath id="c321"><path d="M322.99 430.02 344.13 430.2 323.17 450.12"/></clipPath>
<clipPath id="c322"><path d="M343.84 429.89 342.98 450.01 322.87 449.81"/></clipPath>
<clipPath id="c323"><path d="M343.02 429.99 363.13 430.19 342.16 450.11"/></clipPath>
<clipPath id="c324"><path d="M362.84 429.89 361.98 450.01 341.87 449.81"/></clipPath>
<clipPath id="c325"><path d="M362.02 429.99 382.13 430.19 361.16 450.11"/></clipPath>
<clipPath id="c326"><path d="M381.83 429.88 382.01 449.98 360.87 449.8"/></clipPath>
<clipPath id="c327"><path d="M380.99 430.02 402.13 430.2 381.17 450.12"/></clipPath>
<clipPath id="c328"><path d="M401.84 429.89 400.98 450.01 380.87 449.81"/></clipPath>
<clipPath id="c329"><path d="M401.02 429.99 421.13 430.19 400.16 450.11"/></clipPath>
<clipPath id="c330"><path d="M420.84 429.89 419.98 450.01 399.87 449.81"/></clipPath>
<clipPath id="c331"><path d="M420.02 429.99 440.13 430.19 419.16 450.11"/></clipPath>
<clipPath id="c332"><path d="M439.84 429.89 438.98 450.01 418.87 449.81"/></clipPath>
<clipPath id="c333"><path d="M439.01 430.01 460.14 430.21 438.15 450.11"/></clipPath>
<clipPath id="c334"><path d="M459.85 429.89 458.99 449.99 437.86 449.79"/></clipPath>
<clipPath id="c335"><path d="M459.02 429.99 479.13 430.19 458.16 450.11"/></clipPath>
<clipPath id="c336"><path d="M478.84 429.89 477.98 450.01 457.87 449.81"/></clipPath>
<clipPath id="c337"><path d="M478.02 429.99 498.13 430.19 477.16 450.11"/></clipPath>
<clipPath id="c338"><path d="M497.84 429.89 496.98 450.01 476.87 449.81"/></clipPath>
<clipPath id="c339"><path d="M497.01 430.01 518.14 430.21 496.15 450.11"/></clipPath>
<clipPath id="c340"><path d="M517.85 429.89 516.99 449.99 495.86 449.79"/></clipPath>
<clipPath id="c341"><path d="M517.02 429.99 537.13 430.19 516.16 450.11"/></clipPath>
<clipPath id="c342"><path d="M536.84 429.89 535.98 450.01 515.87 449.81"/></clipPath>
<clipPath id="c343"><path d="M536.02 429.99 556.13 430.19 535.16 450.11"/></clipPath>
<clipPath id="c344"><path d="M555.84 429.89 554.98 450.01 534.87 449.81"/></clipPath>
<clipPath id="c345"><path d="M555.01 430.01 576.14 430.21 554.15 450.11"/></clipPath>
<clipPath id="c346"><path d="M575.86 429.9 573.97 450.02 553.87 449.8"/></clipPath>
<clipPath id="c347"><path d="M284.02 448.99 304.13 449.19 283.16 469.11"/></clipPath>
<clipPath id="c348"><path d="M303.83 448.88 304.01 468.98 282.87 468.8"/></clipPath>
<clipPath id="c349"><path d="M302.99 449.02 324.13 449.2 303.17 469.12"/></clipPath>
<clipPath id="c350"><path d="M323.84 448.89 322.98 469.01 302.87 468.81"/></clipPath>
<clipPath id="c351"><path d="M323.02 448.99 343.13 449.19 322.16 469.11"/></clipPath>
<clipPath id="c352"><path d="M342.84 448.89 341.98 469.01 321.87 468.81"/></clipPath>
<clipPath id="c353"><path d="M342.02 448.99 362.13 449.19 341.16 469.11"/></clipPath>
<clipPath id="c354"><path d="M361.84 448.89 360.98 469.01 340.87 468.81"/></clipPath>
<clipPath id="c355"><path d="M361.01 449.01 382.14 449.21 360.15 469.11"/></clipPath>
<clipPath id="c356"><path d="M381.86 448.9 379.97 469.02 359.87 468.8"/></clipPath>
<clipPath id="c357"><path d="M381.03 448.98 401.13 449.2 379.14 469.1"/></clipPath>
<clipPath id="c358"><path d="M400.85 448.89 399.99 468.99 378.86 468.79"/></clipPath>
<clipPath id="c359"><path d="M400.02 448.99 420.13 449.19 399.16 469.11"/></clipPath>
<clipPath id="c360"><path d="M419.84 448.89 418.98 469.01 398.87 468.81"/></clipPath>
<clipPath id="c361"><path d="M419.02 448.99 439.13 449.19 418.16 469.11"/></clipPath>
<clipPath id="c362"><path d="M438.84 448.89 437.98 469.01 417.87 468.81"/></clipPath>
<clipPath id="c363"><path d="M438.01 449.01 459.14 449.21 437.15 469.11"/></clipPath>
<clipPath id="c364"><path d="M458.86 448.9 456.97 469.02 436.87 468.8"/></clipPath>
<clipPath id="c365"><path d="M458.03 448.98 478.13 449.2 456.14 469.1"/></clipPath>
<clipPath id="c366"><path d="M477.85 448.89 476.99 468.99 455.86 468.79"/></clipPath>
<clipPath id="c367"><path d="M477.02 448.99 497.13 449.19 476.16 469.11"/></clipPath>
<clipPath id="c368"><path d="M496.84 448.89 495.98 469.01 475.87 468.81"/></clipPath>
<clipPath id="c369"><path d="M496.01 449.01 517.14 449.21 495.15 469.11"/></clipPath>
<clipPath id="c370"><path d="M516.86 448.9 514.97 469.02 494.87 468.8"/></clipPath>
<clipPath id="c371"><path d="M516.03 448.98 536.13 449.2 514.14 469.1"/></clipPath>
<clipPath id="c372"><path d="M535.86 448.9 533.97 469.02 513.87 468.8"/></clipPath>
<clipPath id="c373"><path d="M535.03 448.98 555.13 449.2 533.14 469.1"/></clipPath>
<clipPath id="c374"><path d="M554.85 448.89 553.99 468.99 532.86 468.79"/></clipPath>
<clipPath id="c375"><path d="M554.02 448.99 574.13 449.19 553.16 469.11"/></clipPath>
<clipPath id="c376"><path d="M573.84 448.89 572.98 469.01 552.87 468.81"/></clipPath>
</defs>
<path shape-rendering="crispEdges" fill="#7CFC00" d="M185.5 164.5 203.5 156.5 186.5 182.5zM203.5 156.5 204.5 176.5 186.5 182.5zM203.5 156.5 221.5 150.5 204.5 176.5zM221.5 150.5 223.5 172.5 204.5 176.5zM221.5 150.5 240.5 146.5 223.5 172.5zM240.5 146.5 242.5 169.5 223.5 172.5zM240.5 146.5 260.5 144.5 242.5 169.5zM260.5 144.5 261.5 167.5 242.5 169.5zM260.5 144.5 279.5 144.5 261.5 167.5zM279.5 144.5 281.5 167.5 261.5 167.5zM279.5 144.5 299.5 146.5 281.5 167.5zM299.5 146.5 300.5 169.5 281.5 167.5zM299.5 146.5 319.5 150.5 300.5 169.5zM319.5 150.5 320.5 172.5 300.5 169.5zM319.5 150.5 338.5 156.5 320.5 172.5zM338.5 156.5 339.5 177.5 320.5 172.5zM338.5 156.5 357.5 164.5 339.5 177.5zM357.5 164.5 358.5 184.5 339.5 177.5zM357.5 164.5 375.5 174.5 358.5 184.5zM375.5 174.5 377.5 191.5 358.5 184.5zM375.5 174.5 395.5 178.5 377.5 191.5zM395.5 178.5 397.5 194.5 377.5 191.5zM395.5 178.5 416.5 184.5 397.5 194.5zM416.5 184.5 417.5 200.5 397.5 194.5zM416.5 184.5 435.5 185.5 417.5 200.5zM435.5 185.5 436.5 201.5 417.5 200.5zM435.5 185.5 452.5 182.5 436.5 201.5zM452.5 182.5 454.5 199.5 436.5 201.5zM452.5 182.5 471.5 183.5 454.5 199.5zM471.5 183.5 472.5 201.5 454.5 199.5zM471.5 183.5 488.5 182.5 472.5 201.5zM488.5 182.5 491.5 201.5 472.5 201.5zM488.5 182.5 507.5 185.5 491.5 201.5zM507.5 185.5 510.5 204.5 491.5 201.5zM507.5 185.5 527.5 192.5 510.5 204.5zM527.5 192.5 529.5 210.5 510.5 204.5zM527.5 192.5 547.5 202.5 529.5 210.5zM547.5 202.5 549.5 219.5 529.5 210.5zM547.5 202.5 566.5 214.5 549.5 219.5zM566.5 214.5 568.5 229.5 549.5 219.5zM186.5 182.5 204.5 176.5 186.5 202.5zM204.5 176.5 205.5 198.5 186.5 202.5zM204.5 176.5 223.5 172.5 205.5 198.5zM223.5 172.5 224.5 194.5 205.5 198.5zM223.5 172.5 242.5 169.5 224.5 194.5zM242.5 169.5 243.5 190.5 224.5 194.5zM242.5 169.5 261.5 167.5 243.5 190.5zM261.5 167.5 263.5 190.5 243.5 190.5zM261.5 167.5 281.5 167.5 263.5 190.5zM281.5 167.5 282.5 190.5 263.5 190.5zM281.5 167.5 300.5 169.5 282.5 190.5zM300.5 169.5 301.5 191.5 282.5 190.5zM300.5 169.5 320.5 172.5 301.5 191.5zM320.5 172.5 321.5 194.5 301.5 191.5zM320.5 172.5 339.5 177.5 321.5 194.5zM339.5 177.5 340.5 196.5 321.5 194.5zM339.5 177.5 358.5 184.5 340.5 196.5zM358.5 184.5 359.5 202.5 340.5 196.5zM358.5 184.5 377.5 191.5 359.5 202.5zM377.5 191.5 378.5 208.5 359.5 202.5zM377.5 191.5 397.5 194.5 378.5 208.5zM397.5 194.5 398.5 210.5 378.5 208.5zM397.5 194.5 417.5 200.5 398.5 210.5zM417.5 200.5 418.5 216.5 398.5 210.5zM417.5 200.5 436.5 201.5 418.5 216.5zM436.5 201.5 437.5 217.5 418.5 216.5zM436.5 201.5 454.5 199.5 437.5 217.5zM454.5 199.5 455.5 217.5 437.5 217.5zM454.5 199.5 472.5 201.5 455.5 217.5zM472.5 201.5 474.5 220.5 455.5 217.5zM472.5 201.5 491.5 201.5 474.5 220.5zM491.5 201.5 493.5 220.5 474.5 220.5zM491.5 201.5 510.5 204.5 493.5 220.5zM510.5 204.5 512.5 223.5 493.5 220.5zM510.5 204.5 529.5 210.5 512.5 223.5zM529.5 210.5 531.5 228.5 512.5 223.5zM529.5 210.5 549.5 219.5 531.5 228.5zM549.5 219.5 551.5 235.5 531.5 228.5zM549.5 219.5 568.5 229.5 551.5 235.5zM568.5 229.5 570.5 244.5 551.5 235.5zM186.5 202.5 205.5 198.5 187.5 221.5zM205.5 198.5 206.5 218.5 187.5 221.5zM205.5 198.5 224.5 194.5 206.5 218.5zM224.5 194.5 225.5 215.5 206.5 218.5zM224.5 194.5 243.5 190.5 225.5 215.5zM243.5 190.5 244.5 214.5 225.5 215.5zM243.5 190.5 263.5 190.5 244.5 214.5zM263.5 190.5 264.5 213.5 244.5 214.5zM263.5 190.5 282.5 190.5 264.5 213.5zM282.5 190.5 283.5 213.5 264.5 213.5zM282.5 190.5 301.5 191.5 283.5 213.5zM301.5 191.5 302.5 214.5 283.5 213.5zM301.5 191.5 321.5 194.5 302.5 214.5zM321.5 194.5 322.5 215.5 302.5 214.5zM321.5 194.5 340.5 196.5 322.5 215.5zM340.5 196.5 341.5 218.5 322.5 215.5zM340.5 196.5 359.5 202.5 341.5 218.5zM359.5 202.5 360.5 221.5 341.5 218.5zM359.5 202.5 378.5 208.5 360.5 221.5zM378.5 208.5 380.5 224.5 360.5 221.5zM378.5 208.5 398.5 210.5 380.5 224.5zM398.5 210.5 399.5 227.5 380.5 224.5zM398.5 210.5 418.5 216.5 399.5 227.5zM418.5 216.5 419.5 231.5 399.5 227.5zM418.5 216.5 437.5 217.5 419.5 231.5zM437.5 217.5 438.5 234.5 419.5 231.5zM437.5 217.5 455.5 217.5 438.5 234.5zM455.5 217.5 457.5 234.5 438.5 234.5zM455.5 217.5 474.5 220.5 457.5 234.5zM474.5 220.5 476.5 237.5 457.5 234.5zM474.5 220.5 493.5 220.5 476.5 237.5zM493.5 220.5 495.5 238.5 476.5 237.5zM493.5 220.5 512.5 223.5 495.5 238.5zM512.5 223.5 514.5 242.5 495.5 238.5zM512.5 223.5 531.5 228.5 514.5 242.5zM531.5 228.5 533.5 246.5 514.5 242.5zM531.5 228.5 551.5 235.5 533.5 246.5zM551.5 235.5 553.5 252.5 533.5 246.5zM551.5 235.5 570.5 244.5 553.5 252.5zM570.5 244.5 572.5 259.5 553.5 252.5zM187.5 221.5 206.5 218.5 188.5 240.5zM206.5 218.5 207.5 238.5 188.5 240.5zM206.5 218.5 225.5 215.5 207.5 238.5zM225.5 215.5 226.5 237.5 207.5 238.5zM225.5 215.5 244.5 214.5 226.5 237.5zM244.5 214.5 245.5 236.5 226.5 237.5zM244.5 214.5 264.5 213.5 245.5 236.5zM264.5 213.5 265.5 236.5 245.5 236.5zM264.5 213.5 283.5 213.5 265.5 236.5zM283.5 213.5 284.5 236.5 265.5 236.5zM283.5 213.5 302.5 214.5 284.5 236.5zM302.5 214.5 303.5 236.5 284.5 236.5zM302.5 214.5 322.5 215.5 303.5 236.5zM322.5 215.5 323.5 237.5 303.5 236.5zM322.5 215.5 341.5 218.5 323.5 237.5zM341.5 218.5 342.5 238.5 323.5 237.5zM341.5 218.5 360.5 221.5 342.5 238.5zM360.5 221.5 361.5 240.5 342.5 238.5zM360.5 221.5 380.5 224.5 361.5 240.5zM380.5 224.5 381.5 242.5 361.5 240.5zM380.5 224.5 399.5 227.5 381.5 242.5zM399.5 227.5 400.5 243.5 381.5 242.5zM399.5 227.5 419.5 231.5 400.5 243.5zM419.5 231.5 419.5 247.5 400.5 243.5zM419.5 231.5 438.5 234.5 419.5 247.5zM438.5 234.5 439.5 250.5 419.5 247.5zM438.5 234.5 457.5 234.5 439.5 250.5zM457.5 234.5 458.5 251.5 439.5 250.5zM457.5 234.5 476.5 237.5 458.5 251.5zM476.5 237.5 477.5 254.5 458.5 251.5zM476.5 237.5 495.5 238.5 477.5 254.5zM495.5 238.5 496.5 258.5 477.5 254.5zM495.5 238.5 514.5 242.5 496.5 258.5zM514.5 242.5 515.5 260.5 496.5 258.5zM514.5 242.5 533.5 246.5 515.5 260.5zM533.5 246.5 535.5 264.5 515.5 260.5zM533.5 246.5 553.5 252.5 535.5 264.5zM553.5 252.5 554.5 268.5 535.5 264.5zM553.5 252.5 572.5 259.5 554.5 268.5zM572.5 259.5 573.5 272.5 554.5 268.5zM188.5 240.5 207.5 238.5 189.5 259.5zM207.5 238.5 208.5 259.5 189.5 259.5zM207.5 238.5 226.5 237.5 208.5 259.5zM226.5 237.5 228.5 259.5 208.5 259.5zM226.5 237.5 245.5 236.5 228.5 259.5zM245.5 236.5 247.5 259.5 228.5 259.5zM245.5 236.5 265.5 236.5 247.5 259.5zM265.5 236.5 266.5 259.5 247.5 259.5zM265.5 236.5 284.5 236.5 266.5 259.5zM284.5 236.5 286.5 259.5 266.5 259.5zM284.5 236.5 303.5 236.5 286.5 259.5zM303.5 236.5 305.5 259.5 286.5 259.5zM303.5 236.5 323.5 237.5 305.5 259.5zM323.5 237.5 325.5 259.5 305.5 259.5zM323.5 237.5 342.5 238.5 325.5 259.5zM342.5 238.5 344.5 259.5 325.5 259.5zM342.5 238.5 361.5 240.5 344.5 259.5zM361.5 240.5 363.5 259.5 344.5 259.5zM361.5 240.5 381.5 242.5 363.5 259.5zM381.5 242.5 383.5 259.5 363.5 259.5zM381.5 242.5 400.5 243.5 383.5 259.5zM400.5 243.5 402.5 259.5 383.5 259.5zM400.5 243.5 419.5 247.5 402.5 259.5zM419.5 247.5 420.5 262.5 402.5 259.5zM419.5 247.5 439.5 250.5 420.5 262.5zM439.5 250.5 440.5 266.5 420.5 262.5zM439.5 250.5 458.5 251.5 440.5 266.5zM458.5 251.5 459.5 269.5 440.5 266.5zM458.5 251.5 477.5 254.5 459.5 269.5zM477.5 254.5 478.5 272.5 459.5 269.5zM477.5 254.5 496.5 258.5 478.5 272.5zM496.5 258.5 497.5 274.5 478.5 272.5zM496.5 258.5 515.5 260.5 497.5 274.5zM515.5 260.5 517.5 278.5 497.5 274.5zM515.5 260.5 535.5 264.5 517.5 278.5zM535.5 264.5 536.5 281.5 517.5 278.5zM535.5 264.5 554.5 268.5 536.5 281.5zM554.5 268.5 555.5 284.5 536.5 281.5zM554.5 268.5 573.5 272.5 555.5 284.5zM573.5 272.5 575.5 287.5 555.5 284.5zM189.5 259.5 208.5 259.5 189.5 278.5zM208.5 259.5 208.5 278.5 189.5 278.5zM208.5 259.5 228.5 259.5 208.5 278.5zM228.5 259.5 228.5 278.5 208.5 278.5zM228.5 259.5 247.5 259.5 228.5 278.5zM247.5 259.5 247.5 278.5 228.5 278.5zM247.5 259.5 266.5 259.5 247.5 278.5zM266.5 259.5 266.5 278.5 247.5 278.5zM266.5 259.5 286.5 259.5 266.5 278.5zM286.5 259.5 286.5 278.5 266.5 278.5zM286.5 259.5 305.5 259.5 286.5 278.5zM305.5 259.5 305.5 278.5 286.5 278.5zM305.5 259.5 325.5 259.5 305.5 278.5zM325.5 259.5 325.5 278.5 305.5 278.5zM325.5 259.5 344.5 259.5 325.5 278.5zM344.5 259.5 344.5 278.5 325.5 278.5zM344.5 259.5 363.5 259.5 344.5 278.5zM363.5 259.5 363.5 278.5 344.5 278.5zM363.5 259.5 383.5 259.5 363.5 278.5zM383.5 259.5 383.5 278.5 363.5 278.5zM383.5 259.5 402.5 259.5 383.5 278.5zM402.5 259.5 402.5 278.5 383.5 278.5zM402.5 259.5 420.5 262.5 402.5 278.5zM420.5 262.5 421.5 281.5 402.5 278.5zM420.5 262.5 440.5 266.5 421.5 281.5zM440.5 266.5 440.5 283.5 421.5 281.5zM440.5 266.5 459.5 269.5 440.5 283.5zM459.5 269.5 459.5 286.5 440.5 283.5zM459.5 269.5 478.5 272.5 459.5 286.5zM478.5 272.5 479.5 288.5 459.5 286.5zM478.5 272.5 497.5 274.5 479.5 288.5zM497.5 274.5 498.5 290.5 479.5 288.5zM497.5 274.5 517.5 278.5 498.5 290.5zM517.5 278.5 518.5 293.5 498.5 290.5zM517.5 278.5 536.5 281.5 518.5 293.5zM536.5 281.5 537.5 296.5 518.5 293.5zM536.5 281.5 555.5 284.5 537.5 296.5zM555.5 284.5 556.5 298.5 537.5 296.5zM555.5 284.5 575.5 287.5 556.5 298.5zM575.5 287.5 576.5 301.5 556.5 298.5zM189.5 278.5 208.5 278.5 189.5 297.5zM208.5 278.5 208.5 297.5 189.5 297.5zM208.5 278.5 228.5 278.5 208.5 297.5zM228.5 278.5 228.5 297.5 208.5 297.5zM228.5 278.5 247.5 278.5 228.5 297.5zM247.5 278.5 247.5 297.5 228.5 297.5zM247.5 278.5 266.5 278.5 247.5 297.5zM266.5 278.5 266.5 297.5 247.5 297.5zM266.5 278.5 286.5 278.5 266.5 297.5zM286.5 278.5 286.5 297.5 266.5 297.5zM286.5 278.5 305.5 278.5 286.5 297.5zM305.5 278.5 305.5 297.5 286.5 297.5zM305.5 278.5 325.5 278.5 305.5 297.5zM325.5 278.5 325.5 297.5 305.5 297.5zM325.5 278.5 344.5 278.5 325.5 297.5zM344.5 278.5 344.5 297.5 325.5 297.5zM344.5 278.5 363.5 278.5 344.5 297.5zM363.5 278.5 363.5 297.5 344.5 297.5zM363.5 278.5 383.5 278.5 363.5 297.5zM383.5 278.5 383.5 297.5 363.5 297.5zM383.5 278.5 402.5 278.5 383.5 297.5zM402.5 278.5 402.5 297.5 383.5 297.5zM402.5 278.5 421.5 281.5 402.5 297.5zM421.5 281.5 421.5 298.5 402.5 297.5zM421.5 281.5 440.5 283.5 421.5 298.5zM440.5 283.5 441.5 300.5 421.5 298.5zM440.5 283.5 459.5 286.5 441.5 300.5zM459.5 286.5 460.5 302.5 441.5 300.5zM459.5 286.5 479.5 288.5 460.5 302.5zM479.5 288.5 479.5 304.5 460.5 302.5zM479.5 288.5 498.5 290.5 479.5 304.5zM498.5 290.5 499.5 306.5 479.5 304.5zM498.5 290.5 518.5 293.5 499.5 306.5zM518.5 293.5 518.5 309.5 499.5 306.5zM518.5 293.5 537.5 296.5 518.5 309.5zM537.5 296.5 538.5 311.5 518.5 309.5zM537.5 296.5 556.5 298.5 538.5 311.5zM556.5 298.5 557.5 312.5 538.5 311.5zM556.5 298.5 576.5 301.5 557.5 312.5zM576.5 301.5 576.5 314.5 557.5 312.5zM286.5 297.5 305.5 297.5 286.5 316.5zM305.5 297.5 305.5 316.5 286.5 316.5zM305.5 297.5 325.5 297.5 305.5 316.5zM325.5 297.5 325.5 316.5 305.5 316.5zM325.5 297.5 344.5 297.5 325.5 316.5zM344.5 297.5 344.5 316.5 325.5 316.5zM344.5 297.5 363.5 297.5 344.5 316.5zM363.5 297.5 363.5 316.5 344.5 316.5zM363.5 297.5 383.5 297.5 363.5 316.5zM383.5 297.5 383.5 316.5 363.5 316.5zM383.5 297.5 402.5 297.5 383.5 316.5zM402.5 297.5 402.5 316.5 383.5 316.5zM402.5 297.5 421.5 298.5 402.5 316.5zM421.5 298.5 422.5 317.5 402.5 316.5zM421.5 298.5 441.5 300.5 422.5 317.5zM441.5 300.5 441.5 319.5 422.5 317.5zM441.5 300.5 460.5 302.5 441.5 319.5zM460.5 302.5 460.5 320.5 441.5 319.5zM460.5 302.5 479.5 304.5 460.5 320.5zM479.5 304.5 480.5 321.5 460.5 320.5zM479.5 304.5 499.5 306.5 480.5 321.5zM499.5 306.5 499.5 322.5 480.5 321.5zM499.5 306.5 518.5 309.5 499.5 322.5zM518.5 309.5 519.5 324.5 499.5 322.5zM518.5 309.5 538.5 311.5 519.5 324.5zM538.5 311.5 538.5 325.5 519.5 324.5zM538.5 311.5 557.5 312.5 538.5 325.5zM557.5 312.5 557.5 326.5 538.5 325.5zM557.5 312.5 576.5 314.5 557.5 326.5zM576.5 314.5 577.5 328.5 557.5 326.5zM286.5 316.5 305.5 316.5 286.5 335.5zM305.5 316.5 305.5 335.5 286.5 335.5zM305.5 316.5 325.5 316.5 305.5 335.5zM325.5 316.5 325.5 335.5 305.5 335.5zM325.5 316.5 344.5 316.5 325.5 335.5zM344.5 316.5 344.5 335.5 325.5 335.5zM344.5 316.5 363.5 316.5 344.5 335.5zM363.5 316.5 363.5 335.5 344.5 335.5zM363.5 316.5 383.5 316.5 363.5 335.5zM383.5 316.5 383.5 335.5 363.5 335.5zM383.5 316.5 402.5 316.5 383.5 335.5zM402.5 316.5 402.5 335.5 383.5 335.5zM402.5 316.5 422.5 317.5 402.5 335.5zM422.5 317.5 422.5 335.5 402.5 335.5zM422.5 317.5 441.5 319.5 422.5 335.5zM441.5 319.5 441.5 336.5 422.5 335.5zM441.5 319.5 460.5 320.5 441.5 336.5zM460.5 320.5 460.5 336.5 441.5 336.5zM460.5 320.5 480.5 321.5 460.5 336.5zM480.5 321.5 480.5 338.5 460.5 336.5zM480.5 321.5 499.5 322.5 480.5 338.5zM499.5 322.5 499.5 338.5 480.5 338.5zM499.5 322.5 519.5 324.5 499.5 338.5zM519.5 324.5 519.5 339.5 499.5 338.5zM519.5 324.5 538.5 325.5 519.5 339.5zM538.5 325.5 538.5 340.5 519.5 339.5zM538.5 325.5 557.5 326.5 538.5 340.5zM557.5 326.5 558.5 340.5 538.5 340.5zM557.5 326.5 577.5 328.5 558.5 340.5zM577.5 328.5 577.5 341.5 558.5 340.5zM325.5 335.5 344.5 335.5 325.5 354.5zM344.5 335.5 344.5 354.5 325.5 354.5zM344.5 335.5 363.5 335.5 344.5 354.5zM363.5 335.5 363.5 354.5 344.5 354.5zM363.5 335.5 383.5 335.5 363.5 354.5zM383.5 335.5 383.5 354.5 363.5 354.5zM383.5 335.5 402.5 335.5 383.5 354.5zM402.5 335.5 402.5 354.5 383.5 354.5zM402.5 335.5 422.5 335.5 402.5 354.5zM422.5 335.5 422.5 354.5 402.5 354.5zM422.5 335.5 441.5 336.5 422.5 354.5zM441.5 336.5 441.5 354.5 422.5 354.5zM441.5 336.5 460.5 336.5 441.5 354.5zM460.5 336.5 460.5 354.5 441.5 354.5zM460.5 336.5 480.5 338.5 460.5 354.5zM480.5 338.5 480.5 354.5 460.5 354.5zM480.5 338.5 499.5 338.5 480.5 354.5zM499.5 338.5 499.5 354.5 480.5 354.5zM499.5 338.5 519.5 339.5 499.5 354.5zM519.5 339.5 519.5 354.5 499.5 354.5zM519.5 339.5 538.5 340.5 519.5 354.5zM538.5 340.5 538.5 354.5 519.5 354.5zM538.5 340.5 558.5 340.5 538.5 354.5zM558.5 340.5 558.5 354.5 538.5 354.5zM558.5 340.5 577.5 341.5 558.5 354.5zM577.5 341.5 577.5 355.5 558.5 354.5zM325.5 354.5 344.5 354.5 325.5 373.5zM344.5 354.5 344.5 373.5 325.5 373.5zM344.5 354.5 363.5 354.5 344.5 373.5zM363.5 354.5 363.5 373.5 344.5 373.5zM363.5 354.5 383.5 354.5 363.5 373.5zM383.5 354.5 383.5 373.5 363.5 373.5zM383.5 354.5 402.5 354.5 383.5 373.5zM402.5 354.5 402.5 373.5 383.5 373.5zM402.5 354.5 422.5 354.5 402.5 373.5zM422.5 354.5 422.5 373.5 402.5 373.5zM422.5 354.5 441.5 354.5 422.5 373.5zM441.5 354.5 441.5 373.5 422.5 373.5zM441.5 354.5 460.5 354.5 441.5 373.5zM460.5 354.5 460.5 373.5 441.5 373.5zM460.5 354.5 480.5 354.5 460.5 373.5zM480.5 354.5 480.5 373.5 460.5 373.5zM480.5 354.5 499.5 354.5 480.5 373.5zM499.5 354.5 499.5 373.5 480.5 373.5zM499.5 354.5 519.5 354.5 499.5 373.5zM519.5 354.5 519.5 373.5 499.5 373.5zM519.5 354.5 538.5 354.5 519.5 373.5zM538.5 354.5 538.5 373.5 519.5 373.5zM538.5 354.5 558.5 354.5 538.5 373.5zM558.5 354.5 557.5 373.5 538.5 373.5zM558.5 354.5 577.5 355.5 557.5 373.5zM577.5 355.5 577.5 373.5 557.5 373.5zM325.5 373.5 344.5 373.5 325.5 392.5zM344.5 373.5 344.5 392.5 325.5 392.5zM344.5 373.5 363.5 373.5 344.5 392.5zM363.5 373.5 363.5 392.5 344.5 392.5zM363.5 373.5 383.5 373.5 363.5 392.5zM383.5 373.5 383.5 392.5 363.5 392.5zM383.5 373.5 402.5 373.5 383.5 392.5zM402.5 373.5 402.5 392.5 383.5 392.5zM402.5 373.5 422.5 373.5 402.5 392.5zM422.5 373.5 422.5 392.5 402.5 392.5zM422.5 373.5 441.5 373.5 422.5 392.5zM441.5 373.5 441.5 392.5 422.5 392.5zM441.5 373.5 460.5 373.5 441.5 392.5zM460.5 373.5 460.5 392.5 441.5 392.5zM460.5 373.5 480.5 373.5 460.5 392.5zM480.5 373.5 480.5 392.5 460.5 392.5zM480.5 373.5 499.5 373.5 480.5 392.5zM499.5 373.5 499.5 392.5 480.5 392.5zM499.5 373.5 519.5 373.5 499.5 392.5zM519.5 373.5 519.5 392.5 499.5 392.5zM519.5 373.5 538.5 373.5 519.5 392.5zM538.5 373.5 538.5 392.5 519.5 392.5zM538.5 373.5 557.5 373.5 538.5 392.5zM557.5 373.5 557.5 392.5 538.5 392.5zM557.5 373.5 577.5 373.5 557.5 392.5zM577.5 373.5 577.5 392.5 557.5 392.5zM305.5 392.5 305.5 411.5 285.5 411.5zM305.5 392.5 325.5 392.5 305.5 411.5zM325.5 392.5 324.5 411.5 305.5 411.5zM325.5 392.5 344.5 392.5 324.5 411.5zM344.5 392.5 344.5 411.5 324.5 411.5zM344.5 392.5 363.5 392.5 344.5 411.5zM363.5 392.5 363.5 411.5 344.5 411.5zM363.5 392.5 383.5 392.5 363.5 411.5zM383.5 392.5 382.5 411.5 363.5 411.5zM383.5 392.5 402.5 392.5 382.5 411.5zM402.5 392.5 402.5 411.5 382.5 411.5zM402.5 392.5 422.5 392.5 402.5 411.5zM422.5 392.5 421.5 411.5 402.5 411.5zM422.5 392.5 441.5 392.5 421.5 411.5zM441.5 392.5 440.5 411.5 421.5 411.5zM441.5 392.5 460.5 392.5 440.5 411.5zM460.5 392.5 460.5 411.5 440.5 411.5zM460.5 392.5 480.5 392.5 460.5 411.5zM480.5 392.5 479.5 411.5 460.5 411.5zM480.5 392.5 499.5 392.5 479.5 411.5zM499.5 392.5 498.5 411.5 479.5 411.5zM499.5 392.5 519.5 392.5 498.5 411.5zM519.5 392.5 518.5 411.5 498.5 411.5zM519.5 392.5 538.5 392.5 518.5 411.5zM538.5 392.5 537.5 411.5 518.5 411.5zM538.5 392.5 557.5 392.5 537.5 411.5zM557.5 392.5 557.5 411.5 537.5 411.5zM557.5 392.5 577.5 392.5 557.5 411.5zM577.5 392.5 576.5 411.5 557.5 411.5zM285.5 411.5 305.5 411.5 285.5 430.5zM305.5 411.5 304.5 430.5 285.5 430.5zM305.5 411.5 324.5 411.5 304.5 430.5zM324.5 411.5 323.5 430.5 304.5 430.5zM324.5 411.5 344.5 411.5 323.5 430.5zM344.5 411.5 343.5 430.5 323.5 430.5zM344.5 411.5 363.5 411.5 343.5 430.5zM363.5 411.5 362.5 430.5 343.5 430.5zM363.5 411.5 382.5 411.5 362.5 430.5zM382.5 411.5 381.5 430.5 362.5 430.5zM382.5 411.5 402.5 411.5 381.5 430.5zM402.5 411.5 401.5 430.5 381.5 430.5zM402.5 411.5 421.5 411.5 401.5 430.5zM421.5 411.5 420.5 430.5 401.5 430.5zM421.5 411.5 440.5 411.5 420.5 430.5zM440.5 411.5 439.5 430.5 420.5 430.5zM440.5 411.5 460.5 411.5 439.5 430.5zM460.5 411.5 459.5 430.5 439.5 430.5zM460.5 411.5 479.5 411.5 459.5 430.5zM479.5 411.5 478.5 430.5 459.5 430.5zM479.5 411.5 498.5 411.5 478.5 430.5zM498.5 411.5 497.5 430.5 478.5 430.5zM498.5 411.5 518.5 411.5 497.5 430.5zM518.5 411.5 517.5 430.5 497.5 430.5zM518.5 411.5 537.5 411.5 517.5 430.5zM537.5 411.5 536.5 430.5 517.5 430.5zM537.5 411.5 557.5 411.5 536.5 430.5zM557.5 411.5 555.5 430.5 536.5 430.5zM557.5 411.5 576.5 411.5 555.5 430.5zM576.5 411.5 575.5 430.5 555.5 430.5zM285.5 430.5 304.5 430.5 284.5 449.5zM304.5 430.5 303.5 449.5 284.5 449.5zM304.5 430.5 323.5 430.5 303.5 449.5zM323.5 430.5 323.5 449.5 303.5 449.5zM323.5 430.5 343.5 430.5 323.5 449.5zM343.5 430.5 342.5 449.5 323.5 449.5zM343.5 430.5 362.5 430.5 342.5 449.5zM362.5 430.5 361.5 449.5 342.5 449.5zM362.5 430.5 381.5 430.5 361.5 449.5zM381.5 430.5 381.5 449.5 361.5 449.5zM381.5 430.5 401.5 430.5 381.5 449.5zM401.5 430.5 400.5 449.5 381.5 449.5zM401.5 430.5 420.5 430.5 400.5 449.5zM420.5 430.5 419.5 449.5 400.5 449.5zM420.5 430.5 439.5 430.5 419.5 449.5zM439.5 430.5 438.5 449.5 419.5 449.5zM439.5 430.5 459.5 430.5 438.5 449.5zM459.5 430.5 458.5 449.5 438.5 449.5zM459.5 430.5 478.5 430.5 458.5 449.5zM478.5 430.5 477.5 449.5 458.5 449.5zM478.5 430.5 497.5 430.5 477.5 449.5zM497.5 430.5 496.5 449.5 477.5 449.5zM497.5 430.5 517.5 430.5 496.5 449.5zM517.5 430.5 516.5 449.5 496.5 449.5zM517.5 430.5 536.5 430.5 516.5 449.5zM536.5 430.5 535.5 449.5 516.5 449.5zM536.5 430.5 555.5 430.5 535.5 449.5zM555.5 430.5 554.5 449.5 535.5 449.5zM555.5 430.5 575.5 430.5 554.5 449.5zM575.5 430.5 573.5 449.5 554.5 449.5zM284.5 449.5 303.5 449.5 283.5 468.5zM303.5 449.5 303.5 468.5 283.5 468.5zM303.5 449.5 323.5 449.5 303.5 468.5zM323.5 449.5 322.5 468.5 303.5 468.5zM323.5 449.5 342.5 449.5 322.5 468.5zM342.5 449.5 341.5 468.5 322.5 468.5zM342.5 449.5 361.5 449.5 341.5 468.5zM361.5 449.5 360.5 468.5 341.5 468.5zM361.5 449.5 381.5 449.5 360.5 468.5zM381.5 449.5 379.5 468.5 360.5 468.5zM381.5 449.5 400.5 449.5 379.5 468.5zM400.5 449.5 399.5 468.5 379.5 468.5zM400.5 449.5 419.5 449.5 399.5 468.5zM419.5 449.5 418.5 468.5 399.5 468.5zM419.5 449.5 438.5 449.5 418.5 468.5zM438.5 449.5 437.5 468.5 418.5 468.5zM438.5 449.5 458.5 449.5 437.5 468.5zM458.5 449.5 456.5 468.5 437.5 468.5zM458.5 449.5 477.5 449.5 456.5 468.5zM477.5 449.5 476.5 468.5 456.5 468.5zM477.5 449.5 496.5 449.5 476.5 468.5zM496.5 449.5 495.5 468.5 476.5 468.5zM496.5 449.5 516.5 449.5 495.5 468.5zM516.5 449.5 514.5 468.5 495.5 468.5zM516.5 449.5 535.5 449.5 514.5 468.5zM535.5 449.5 533.5 468.5 514.5 468.5zM535.5 449.5 554.5 449.5 533.5 468.5zM554.5 449.5 553.5 468.5 533.5 468.5zM554.5 449.5 573.5 449.5 553.5 468.5zM573.5 449.5 572.5 468.5 553.5 468.5zM283.5 468.5 303.5 468.5 282.5 487.5zM303.5 468.5 302.5 487.5 282.5 487.5zM303.5 468.5 322.5 468.5 302.5 487.5zM322.5 468.5 321.5 487.5 302.5 487.5zM322.5 468.5 341.5 468.5 321.5 487.5zM341.5 468.5 340.5 487.5 321.5 487.5zM341.5 468.5 360.5 468.5 340.5 487.5zM360.5 468.5 359.5 487.5 340.5 487.5zM360.5 468.5 379.5 468.5 359.5 487.5zM379.5 468.5 378.5 487.5 359.5 487.5zM379.5 468.5 399.5 468.5 378.5 487.5zM399.5 468.5 398.5 487.5 378.5 487.5zM399.5 468.5 418.5 468.5 398.5 487.5zM418.5 468.5 417.5 487.5 398.5 487.5zM418.5 468.5 437.5 468.5 417.5 487.5zM437.5 468.5 436.5 487.5 417.5 487.5zM437.5 468.5 456.5 468.5 436.5 487.5zM456.5 468.5 455.5 487.5 436.5 487.5zM456.5 468.5 476.5 468.5 455.5 487.5zM476.5 468.5 474.5 487.5 455.5 487.5zM476.5 468.5 495.5 468.5 474.5 487.5zM495.5 468.5 493.5 487.5 474.5 487.5zM495.5 468.5 514.5 468.5 493.5 487.5zM514.5 468.5 513.5 487.5 493.5 487.5zM514.5 468.5 533.5 468.5 513.5 487.5zM533.5 468.5 532.5 487.5 513.5 487.5zM533.5 468.5 553.5 468.5 532.5 487.5zM553.5 468.5 551.5 487.5 532.5 487.5zM553.5 468.5 572.5 468.5 551.5 487.5zM572.5 468.5 570.5 487.5 551.5 487.5zM187.5 487.5 206.5 487.5 186.5 506.5zM206.5 487.5 205.5 506.5 186.5 506.5zM206.5 487.5 225.5 487.5 205.5 506.5zM225.5 487.5 224.5 506.5 205.5 506.5zM225.5 487.5 244.5 487.5 224.5 506.5zM244.5 487.5 243.5 506.5 224.5 506.5zM244.5 487.5 263.5 487.5 243.5 506.5zM263.5 487.5 262.5 506.5 243.5 506.5zM263.5 487.5 282.5 487.5 262.5 506.5zM282.5 487.5 282.5 506.5 262.5 506.5zM282.5 487.5 302.5 487.5 282.5 506.5zM302.5 487.5 301.5 506.5 282.5 506.5zM302.5 487.5 321.5 487.5 301.5 506.5zM321.5 487.5 320.5 506.5 301.5 506.5zM321.5 487.5 340.5 487.5 320.5 506.5zM340.5 487.5 339.5 506.5 320.5 506.5zM340.5 487.5 359.5 487.5 339.5 506.5zM359.5 487.5 358.5 506.5 339.5 506.5zM359.5 487.5 378.5 487.5 358.5 506.5zM378.5 487.5 377.5 506.5 358.5 506.5zM378.5 487.5 398.5 487.5 377.5 506.5zM398.5 487.5 396.5 506.5 377.5 506.5zM398.5 487.5 417.5 487.5 396.5 506.5zM417.5 487.5 415.5 506.5 396.5 506.5zM417.5 487.5 436.5 487.5 415.5 506.5zM436.5 487.5 435.5 506.5 415.5 506.5zM436.5 487.5 455.5 487.5 435.5 506.5zM455.5 487.5 454.5 506.5 435.5 506.5zM455.5 487.5 474.5 487.5 454.5 506.5zM474.5 487.5 473.5 506.5 454.5 506.5zM474.5 487.5 493.5 487.5 473.5 506.5zM493.5 487.5 492.5 506.5 473.5 506.5zM493.5 487.5 513.5 487.5 492.5 506.5zM513.5 487.5 511.5 506.5 492.5 506.5zM513.5 487.5 532.5 487.5 511.5 506.5zM532.5 487.5 530.5 506.5 511.5 506.5zM532.5 487.5 551.5 487.5 530.5 506.5zM551.5 487.5 549.5 506.5 530.5 506.5zM551.5 487.5 570.5 487.5 549.5 506.5zM570.5 487.5 568.5 506.5 549.5 506.5zM186.5 506.5 205.5 506.5 185.5 525.5zM205.5 506.5 204.5 525.5 185.5 525.5zM205.5 506.5 224.5 506.5 204.5 525.5zM224.5 506.5 223.5 525.5 204.5 525.5zM224.5 506.5 243.5 506.5 223.5 525.5zM243.5 506.5 242.5 525.5 223.5 525.5zM243.5 506.5 262.5 506.5 242.5 525.5zM262.5 506.5 262.5 525.5 242.5 525.5zM262.5 506.5 282.5 506.5 262.5 525.5zM282.5 506.5 281.5 525.5 262.5 525.5zM282.5 506.5 301.5 506.5 281.5 525.5zM301.5 506.5 300.5 525.5 281.5 525.5zM301.5 506.5 320.5 506.5 300.5 525.5zM320.5 506.5 319.5 525.5 300.5 525.5zM320.5 506.5 339.5 506.5 319.5 525.5zM339.5 506.5 338.5 525.5 319.5 525.5zM339.5 506.5 358.5 506.5 338.5 525.5zM358.5 506.5 357.5 525.5 338.5 525.5zM358.5 506.5 377.5 506.5 357.5 525.5zM377.5 506.5 376.5 525.5 357.5 525.5zM377.5 506.5 396.5 506.5 376.5 525.5zM396.5 506.5 395.5 525.5 376.5 525.5zM396.5 506.5 415.5 506.5 395.5 525.5zM415.5 506.5 414.5 525.5 395.5 525.5zM415.5 506.5 435.5 506.5 414.5 525.5zM435.5 506.5 433.5 525.5 414.5 525.5zM435.5 506.5 454.5 506.5 433.5 525.5zM454.5 506.5 452.5 525.5 433.5 525.5zM454.5 506.5 473.5 506.5 452.5 525.5zM473.5 506.5 471.5 525.5 452.5 525.5zM473.5 506.5 492.5 506.5 471.5 525.5zM492.5 506.5 490.5 525.5 471.5 525.5zM492.5 506.5 511.5 506.5 490.5 525.5zM511.5 506.5 509.5 525.5 490.5 525.5zM511.5 506.5 530.5 506.5 509.5 525.5zM530.5 506.5 528.5 525.5 509.5 525.5zM530.5 506.5 549.5 506.5 528.5 525.5zM549.5 506.5 547.5 525.5 528.5 525.5zM549.5 506.5 568.5 506.5 547.5 525.5zM568.5 506.5 567.5 525.5 547.5 525.5zM185.5 525.5 204.5 525.5 185.5 544.5zM204.5 525.5 204.5 544.5 185.5 544.5zM204.5 525.5 223.5 525.5 204.5 544.5zM223.5 525.5 223.5 544.5 204.5 544.5zM223.5 525.5 242.5 525.5 223.5 544.5zM242.5 525.5 242.5 544.5 223.5 544.5zM242.5 525.5 262.5 525.5 242.5 544.5zM262.5 525.5 261.5 544.5 242.5 544.5zM262.5 525.5 281.5 525.5 261.5 544.5zM281.5 525.5 280.5 544.5 261.5 544.5zM281.5 525.5 300.5 525.5 280.5 544.5zM300.5 525.5 299.5 544.5 280.5 544.5zM300.5 525.5 319.5 525.5 299.5 544.5zM319.5 525.5 318.5 544.5 299.5 544.5zM319.5 525.5 338.5 525.5 318.5 544.5zM338.5 525.5 337.5 544.5 318.5 544.5zM338.5 525.5 357.5 525.5 337.5 544.5zM357.5 525.5 356.5 544.5 337.5 544.5zM357.5 525.5 376.5 525.5 356.5 544.5zM376.5 525.5 375.5 544.5 356.5 544.5zM376.5 525.5 395.5 525.5 375.5 544.5zM395.5 525.5 394.5 544.5 375.5 544.5zM395.5 525.5 414.5 525.5 394.5 544.5zM414.5 525.5 413.5 544.5 394.5 544.5zM414.5 525.5 433.5 525.5 413.5 544.5zM433.5 525.5 432.5 544.5 413.5 544.5zM433.5 525.5 452.5 525.5 432.5 544.5zM452.5 525.5 451.5 544.5 432.5 544.5zM452.5 525.5 471.5 525.5 451.5 544.5zM471.5 525.5 470.5 544.5 451.5 544.5zM471.5 525.5 490.5 525.5 470.5 544.5zM490.5 525.5 489.5 544.5 470.5 544.5zM490.5 525.5 509.5 525.5 489.5 544.5zM509.5 525.5 508.5 544.5 489.5 544.5zM509.5 525.5 528.5 525.5 508.5 544.5zM528.5 525.5 527.5 544.5 508.5 544.5zM528.5 525.5 547.5 525.5 527.5 544.5zM547.5 525.5 546.5 544.5 527.5 544.5zM547.5 525.5 567.5 525.5 546.5 544.5zM567.5 525.5 565.5 544.5 546.5 544.5z"/>
<g clip-path="url(#c0)"><use href="#tx" transform="matrix(0.9794 -0.1031 0.0526 1.0000 -9.55 19.52)"/></g>
<g clip-path="url(#c1)"><use href="#tx" transform="matrix(0.9794 0.0000 0.0526 1.1053 -9.55 -27.32)"/></g>
<g clip-path="url(#c2)"><use href="#tx" transform="matrix(0.9794 -0.0515 0.0526 1.1053 -9.55 -16.56)"/></g>
<g clip-path="url(#c3)"><use href="#tx" transform="matrix(1.0309 0.0000 0.1053 1.1579 -33.97 -40.97)"/></g>
<g clip-path="url(#c4)"><use href="#tx" transform="matrix(0.9794 -0.0515 0.1053 1.1579 -22.21 -29.22)"/></g>
<g clip-path="url(#c5)"><use href="#tx" transform="matrix(0.9794 0.0000 0.1053 1.2105 -22.21 -54.63)"/></g>
<g clip-path="url(#c6)"><use href="#tx" transform="matrix(1.0309 0.0000 0.1053 1.2105 -34.97 -54.63)"/></g>
<g clip-path="url(#c7)"><use href="#tx" transform="matrix(0.9794 0.0000 0.0526 1.2105 -8.55 -54.63)"/></g>
<g clip-path="url(#c8)"><use href="#tx" transform="matrix(0.9794 0.0000 0.0526 1.2105 -8.55 -54.63)"/></g>
<g clip-path="url(#c9)"><use href="#tx" transform="matrix(1.0309 0.0000 0.1053 1.2105 -35.97 -54.63)"/></g>
<g clip-path="url(#c10)"><use href="#tx" transform="matrix(0.9794 0.0000 0.1053 1.2105 -21.21 -54.63)"/></g>
<g clip-path="url(#c11)"><use href="#tx" transform="matrix(0.9794 0.0000 0.1053 1.2105 -21.21 -54.63)"/></g>
<g clip-path="url(#c12)"><use href="#tx" transform="matrix(1.0309 0.0515 0.1053 1.2105 -36.97 -70.39)"/></g>
<g clip-path="url(#c13)"><use href="#tx" transform="matrix(1.0309 0.0000 0.1053 1.1579 -36.97 -40.97)"/></g>
<g clip-path="url(#c14)"><use href="#tx" transform="matrix(0.9794 0.0515 0.1053 1.1579 -20.21 -57.73)"/></g>
<g clip-path="url(#c15)"><use href="#tx" transform="matrix(0.9794 0.0000 0.1053 1.1053 -20.21 -27.32)"/></g>
<g clip-path="url(#c16)"><use href="#tx" transform="matrix(0.9794 0.1031 0.1053 1.1053 -20.21 -62.83)"/></g>
<g clip-path="url(#c17)"><use href="#tx" transform="matrix(0.9794 0.0000 0.1053 1.0000 -20.21 0)"/></g>
<g clip-path="url(#c18)"><use href="#tx" transform="matrix(1.0309 0.1031 0.1053 1.0000 -38.97 -37.52)"/></g>
<g clip-path="url(#c19)"><use href="#tx" transform="matrix(1.0309 0.0000 0.1053 0.8947 -38.97 27.32)"/></g>
<g clip-path="url(#c20)"><use href="#tx" transform="matrix(0.9794 0.0515 0.1053 0.8947 -19.21 7.56)"/></g>
<g clip-path="url(#c21)"><use href="#tx" transform="matrix(0.9794 0.0000 0.1053 0.8421 -19.21 40.97)"/></g>
<g clip-path="url(#c22)"><use href="#tx" transform="matrix(0.9794 0.2062 0.1053 0.8421 -19.21 -42.06)"/></g>
<g clip-path="url(#c23)"><use href="#tx" transform="matrix(0.9278 0.1546 0.0526 0.7895 15.2 -7.64)"/></g>
<g clip-path="url(#c24)"><use href="#tx" transform="matrix(1.0309 0.1546 0.0526 0.7895 -28.31 -7.64)"/></g>
<g clip-path="url(#c25)"><use href="#tx" transform="matrix(1.0309 0.2062 0.0526 0.8421 -28.31 -43.06)"/></g>
<g clip-path="url(#c26)"><use href="#tx" transform="matrix(0.9794 0.0515 0.0526 0.8421 -5.55 25.22)"/></g>
<g clip-path="url(#c27)"><use href="#tx" transform="matrix(0.9794 0.1546 0.0526 0.9474 -5.55 -47.62)"/></g>
<g clip-path="url(#c28)"><use href="#tx" transform="matrix(0.9794 0.1546 0.0526 0.9474 -5.55 -47.62)"/></g>
<g clip-path="url(#c29)"><use href="#tx" transform="matrix(0.9794 0.1546 0.0526 0.9474 -5.55 -47.62)"/></g>
<g clip-path="url(#c30)"><use href="#tx" transform="matrix(0.9794 0.2062 0.0526 0.9474 -5.55 -72.37)"/></g>
<g clip-path="url(#c31)"><use href="#tx" transform="matrix(0.9794 0.1031 0.0526 0.8421 -5.55 4.46)"/></g>
<g clip-path="url(#c32)"><use href="#tx" transform="matrix(0.9794 0.1031 0.0526 0.8421 -5.55 4.46)"/></g>
<g clip-path="url(#c33)"><use href="#tx" transform="matrix(1.0309 0.2062 0.1053 0.9474 -44.97 -74.37)"/></g>
<g clip-path="url(#c34)"><use href="#tx" transform="matrix(1.0309 0.2062 0.1053 0.9474 -44.97 -74.37)"/></g>
<g clip-path="url(#c35)"><use href="#tx" transform="matrix(0.9794 0.1546 0.0526 0.8947 -4.55 -33.96)"/></g>
<g clip-path="url(#c36)"><use href="#tx" transform="matrix(0.9794 0.2062 0.0526 0.8947 -4.55 -61.72)"/></g>
<g clip-path="url(#c37)"><use href="#tx" transform="matrix(0.9794 0.1546 0.0526 0.8421 -4.55 -20.3)"/></g>
<g clip-path="url(#c38)"><use href="#tx" transform="matrix(0.9794 0.2062 0.0526 0.8421 -4.55 -49.06)"/></g>
<g clip-path="url(#c39)"><use href="#tx" transform="matrix(1.0309 0.1546 0.1053 0.7895 -46.97 -6.64)"/></g>
<g clip-path="url(#c40)"><use href="#tx" transform="matrix(0.9794 0.0000 0.0000 1.0000 4.1 0)"/></g>
<g clip-path="url(#c41)"><use href="#tx" transform="matrix(0.9794 0.0000 0.0000 1.0000 4.1 0)"/></g>
<g clip-path="url(#c42)"><use href="#tx" transform="matrix(1.0309 0.0000 0.0000 1.0000 -6.65 0)"/></g>
<g clip-path="url(#c43)"><use href="#tx" transform="matrix(1.0309 0.0000 0.0000 1.0000 -6.65 0)"/></g>
<g clip-path="url(#c44)"><use href="#tx" transform="matrix(0.9794 0.0000 0.0000 1.0000 5.1 0)"/></g>
<g clip-path="url(#c45)"><use href="#tx" transform="matrix(0.9794 0.0000 0.0000 1.0000 5.1 0)"/></g>
<g clip-path="url(#c46)"><use href="#tx" transform="matrix(0.9794 0.0000 0.0000 1.0000 5.1 0)"/></g>
<g clip-path="url(#c47)"><use href="#tx" transform="matrix(0.9794 0.0000 0.0000 1.0000 5.1 0)"/></g>
<g clip-path="url(#c48)"><use href="#tx" transform="matrix(1.0309 0.0000 0.0000 1.0000 -8.65 0)"/></g>
<g clip-path="url(#c49)"><use href="#tx" transform="matrix(1.0309 0.0000 0.0000 1.0000 -8.65 0)"/></g>
<g clip-path="url(#c50)"><use href="#tx" transform="matrix(0.9794 0.0000 0.0000 1.0000 6.1 0)"/></g>
<g clip-path="url(#c51)"><use href="#tx" transform="matrix(0.9794 0.0000 0.0000 1.0000 6.1 0)"/></g>
<g clip-path="url(#c52)"><use href="#tx" transform="matrix(1.0309 0.0000 0.0000 1.0000 -9.65 0)"/></g>
<g clip-path="url(#c53)"><use href="#tx" transform="matrix(1.0309 0.0000 0.0000 1.0000 -9.65 0)"/></g>
<g clip-path="url(#c54)"><use href="#tx" transform="matrix(0.9794 0.0000 0.0000 1.0000 7.1 0)"/></g>
<g clip-path="url(#c55)"><use href="#tx" transform="matrix(0.9794 0.0000 0.0000 1.0000 7.1 0)"/></g>
<g clip-path="url(#c56)"><use href="#tx" transform="matrix(0.9794 0.0000 0.0000 1.0000 7.1 0)"/></g>
<g clip-path="url(#c57)"><use href="#tx" transform="matrix(0.9794 0.0000 0.0000 1.0000 7.1 0)"/></g>
<g clip-path="url(#c58)"><use href="#tx" transform="matrix(1.0309 0.0000 0.0000 1.0000 -11.65 0)"/></g>
<g clip-path="url(#c59)"><use href="#tx" transform="matrix(1.0309 0.0000 0.0000 1.0000 -11.65 0)"/></g>
<g clip-path="url(#c60)"><use href="#tx" transform="matrix(0.9794 0.0000 0.0000 1.0000 8.1 0)"/></g>
<g clip-path="url(#c61)"><use href="#tx" transform="matrix(0.9794 0.0000 0.0000 1.0000 8.1 0)"/></g>
<g clip-path="url(#c62)"><use href="#tx" transform="matrix(0.9278 0.1546 0.0000 1.0000 28.86 -62.27)"/></g>
<g clip-path="url(#c63)"><use href="#tx" transform="matrix(0.9794 0.1546 0.0526 1.0000 -6.55 -62.27)"/></g>
<g clip-path="url(#c64)"><use href="#tx" transform="matrix(1.0309 0.2062 0.0526 1.0000 -28.31 -84.03)"/></g>
<g clip-path="url(#c65)"><use href="#tx" transform="matrix(0.9794 0.1031 0.0000 0.8947 8.1 -11.2)"/></g>
<g clip-path="url(#c66)"><use href="#tx" transform="matrix(0.9794 0.1546 0.0000 0.8947 8.1 -33.96)"/></g>
<g clip-path="url(#c67)"><use href="#tx" transform="matrix(0.9794 0.1546 0.0000 0.8947 8.1 -33.96)"/></g>
<g clip-path="url(#c68)"><use href="#tx" transform="matrix(0.9794 0.1546 0.0000 0.8947 8.1 -33.96)"/></g>
<g clip-path="url(#c69)"><use href="#tx" transform="matrix(1.0309 0.1031 0.0526 0.8421 -30.31 4.46)"/></g>
<g clip-path="url(#c70)"><use href="#tx" transform="matrix(0.9794 0.1031 0.0526 0.8421 -5.55 4.46)"/></g>
<g clip-path="url(#c71)"><use href="#tx" transform="matrix(0.9794 0.1031 0.0526 0.8421 -5.55 4.46)"/></g>
<g clip-path="url(#c72)"><use href="#tx" transform="matrix(1.0309 0.2062 0.0526 0.8421 -31.31 -47.06)"/></g>
<g clip-path="url(#c73)"><use href="#tx" transform="matrix(1.0309 0.1546 0.0526 0.7895 -31.31 -6.64)"/></g>
<g clip-path="url(#c74)"><use href="#tx" transform="matrix(0.9794 0.1546 0.0526 0.7895 -4.55 -6.64)"/></g>
<g clip-path="url(#c75)"><use href="#tx" transform="matrix(0.9794 0.1546 0.0526 0.7895 -4.55 -6.64)"/></g>
<g clip-path="url(#c76)"><use href="#tx" transform="matrix(0.9794 0.1546 0.0526 0.7895 -4.55 -6.64)"/></g>
<g clip-path="url(#c77)"><use href="#tx" transform="matrix(0.9794 0.1031 0.0526 0.7368 -4.55 35.77)"/></g>
<g clip-path="url(#c78)"><use href="#tx" transform="matrix(1.0309 0.1546 0.0526 0.7368 -33.31 7.02)"/></g>
<g clip-path="url(#c79)"><use href="#tx" transform="matrix(1.0309 0.1546 0.0526 0.7368 -33.31 7.02)"/></g>
<g clip-path="url(#c80)"><use href="#tx" transform="matrix(0.9794 0.0000 0.0000 1.0000 4.1 0)"/></g>
<g clip-path="url(#c81)"><use href="#tx" transform="matrix(0.9794 0.0000 0.0000 1.0000 4.1 0)"/></g>
<g clip-path="url(#c82)"><use href="#tx" transform="matrix(1.0309 0.0000 0.0000 1.0000 -6.65 0)"/></g>
<g clip-path="url(#c83)"><use href="#tx" transform="matrix(1.0309 0.0000 0.0000 1.0000 -6.65 0)"/></g>
<g clip-path="url(#c84)"><use href="#tx" transform="matrix(0.9794 0.0000 0.0000 1.0000 5.1 0)"/></g>
<g clip-path="url(#c85)"><use href="#tx" transform="matrix(0.9794 0.0000 0.0000 1.0000 5.1 0)"/></g>
<g clip-path="url(#c86)"><use href="#tx" transform="matrix(0.9794 0.0000 0.0000 1.0000 5.1 0)"/></g>
<g clip-path="url(#c87)"><use href="#tx" transform="matrix(0.9794 0.0000 0.0000 1.0000 5.1 0)"/></g>
<g clip-path="url(#c88)"><use href="#tx" transform="matrix(1.0309 0.0000 0.0000 1.0000 -8.65 0)"/></g>
<g clip-path="url(#c89)"><use href="#tx" transform="matrix(1.0309 0.0000 0.0000 1.0000 -8.65 0)"/></g>
<g clip-path="url(#c90)"><use href="#tx" transform="matrix(0.9794 0.0000 0.0000 1.0000 6.1 0)"/></g>
<g clip-path="url(#c91)"><use href="#tx" transform="matrix(0.9794 0.0000 0.0000 1.0000 6.1 0)"/></g>
<g clip-path="url(#c92)"><use href="#tx" transform="matrix(1.0309 0.0000 0.0000 1.0000 -9.65 0)"/></g>
<g clip-path="url(#c93)"><use href="#tx" transform="matrix(1.0309 0.0000 0.0000 1.0000 -9.65 0)"/></g>
<g clip-path="url(#c94)"><use href="#tx" transform="matrix(0.9794 0.0000 0.0000 1.0000 7.1 0)"/></g>
<g clip-path="url(#c95)"><use href="#tx" transform="matrix(0.9794 0.0000 0.0000 1.0000 7.1 0)"/></g>
<g clip-path="url(#c96)"><use href="#tx" transform="matrix(0.9794 0.0000 0.0000 1.0000 7.1 0)"/></g>
<g clip-path="url(#c97)"><use href="#tx" transform="matrix(0.9794 0.0000 0.0000 1.0000 7.1 0)"/></g>
<g clip-path="url(#c98)"><use href="#tx" transform="matrix(1.0309 0.0000 0.0000 1.0000 -11.65 0)"/></g>
<g clip-path="url(#c99)"><use href="#tx" transform="matrix(1.0309 0.0000 0.0000 1.0000 -11.65 0)"/></g>
<g clip-path="url(#c100)"><use href="#tx" transform="matrix(0.9794 0.0000 0.0000 1.0000 8.1 0)"/></g>
<g clip-path="url(#c101)"><use href="#tx" transform="matrix(0.9794 0.0000 0.0000 1.0000 8.1 0)"/></g>
<g clip-path="url(#c102)"><use href="#tx" transform="matrix(0.9794 0.1546 0.0000 1.0000 8.1 -62.27)"/></g>
<g clip-path="url(#c103)"><use href="#tx" transform="matrix(0.9794 0.0515 0.0000 0.8947 8.1 10.56)"/></g>
<g clip-path="url(#c104)"><use href="#tx" transform="matrix(0.9794 0.1031 0.0000 0.8947 8.1 -11.2)"/></g>
<g clip-path="url(#c105)"><use href="#tx" transform="matrix(1.0309 0.1031 0.0526 0.8947 -29.31 -11.2)"/></g>
<g clip-path="url(#c106)"><use href="#tx" transform="matrix(0.9794 0.1546 0.0526 0.8947 -6.55 -33.96)"/></g>
<g clip-path="url(#c107)"><use href="#tx" transform="matrix(0.9794 0.1031 0.0526 0.8421 -6.55 4.46)"/></g>
<g clip-path="url(#c108)"><use href="#tx" transform="matrix(1.0309 0.1031 0.0526 0.8421 -30.31 4.46)"/></g>
<g clip-path="url(#c109)"><use href="#tx" transform="matrix(0.9794 0.1031 0.0000 0.8421 9.1 4.46)"/></g>
<g clip-path="url(#c110)"><use href="#tx" transform="matrix(0.9794 0.1031 0.0000 0.8421 9.1 4.46)"/></g>
<g clip-path="url(#c111)"><use href="#tx" transform="matrix(1.0309 0.1031 0.0526 0.8421 -31.31 4.46)"/></g>
<g clip-path="url(#c112)"><use href="#tx" transform="matrix(1.0309 0.1546 0.0526 0.8421 -31.31 -21.3)"/></g>
<g clip-path="url(#c113)"><use href="#tx" transform="matrix(0.9794 0.1546 0.0000 0.8421 10.1 -21.3)"/></g>
<g clip-path="url(#c114)"><use href="#tx" transform="matrix(0.9794 0.1546 0.0000 0.8421 10.1 -21.3)"/></g>
<g clip-path="url(#c115)"><use href="#tx" transform="matrix(1.0309 0.1031 0.0526 0.7895 -32.31 21.12)"/></g>
<g clip-path="url(#c116)"><use href="#tx" transform="matrix(0.9794 0.1031 0.0526 0.7895 -4.55 21.12)"/></g>
<g clip-path="url(#c117)"><use href="#tx" transform="matrix(0.9794 0.0515 0.0526 0.7368 -4.55 64.53)"/></g>
<g clip-path="url(#c118)"><use href="#tx" transform="matrix(1.0309 0.1546 0.0526 0.7368 -33.31 7.02)"/></g>
<g clip-path="url(#c119)"><use href="#tx" transform="matrix(0.9794 0.1031 0.0000 0.6842 11.1 51.43)"/></g>
<g clip-path="url(#c120)"><use href="#tx" transform="matrix(0.9794 0.0000 0.0000 1.0000 6.1 0)"/></g>
<g clip-path="url(#c121)"><use href="#tx" transform="matrix(0.9794 0.0000 0.0000 1.0000 6.1 0)"/></g>
<g clip-path="url(#c122)"><use href="#tx" transform="matrix(1.0309 0.0000 0.0000 1.0000 -9.65 0)"/></g>
<g clip-path="url(#c123)"><use href="#tx" transform="matrix(1.0309 0.0000 0.0000 1.0000 -9.65 0)"/></g>
<g clip-path="url(#c124)"><use href="#tx" transform="matrix(0.9794 0.0000 0.0000 1.0000 7.1 0)"/></g>
<g clip-path="url(#c125)"><use href="#tx" transform="matrix(0.9794 0.0000 0.0000 1.0000 7.1 0)"/></g>
<g clip-path="url(#c126)"><use href="#tx" transform="matrix(0.9794 0.0000 0.0000 1.0000 7.1 0)"/></g>
<g clip-path="url(#c127)"><use href="#tx" transform="matrix(0.9794 0.0000 0.0000 1.0000 7.1 0)"/></g>
<g clip-path="url(#c128)"><use href="#tx" transform="matrix(1.0309 0.0000 0.0000 1.0000 -11.65 0)"/></g>
<g clip-path="url(#c129)"><use href="#tx" transform="matrix(1.0309 0.0000 0.0000 1.0000 -11.65 0)"/></g>
<g clip-path="url(#c130)"><use href="#tx" transform="matrix(0.9794 0.0000 0.0000 1.0000 8.1 0)"/></g>
<g clip-path="url(#c131)"><use href="#tx" transform="matrix(0.9794 0.0000 0.0000 1.0000 8.1 0)"/></g>
<g clip-path="url(#c132)"><use href="#tx" transform="matrix(0.9794 0.0515 0.0000 1.0000 8.1 -20.76)"/></g>
<g clip-path="url(#c133)"><use href="#tx" transform="matrix(1.0309 0.0515 0.0526 1.0000 -29.31 -20.76)"/></g>
<g clip-path="url(#c134)"><use href="#tx" transform="matrix(1.0309 0.1031 0.0526 1.0000 -29.31 -42.52)"/></g>
<g clip-path="url(#c135)"><use href="#tx" transform="matrix(0.9794 0.1031 0.0000 1.0000 9.1 -42.52)"/></g>
<g clip-path="url(#c136)"><use href="#tx" transform="matrix(0.9794 0.1031 0.0000 1.0000 9.1 -42.52)"/></g>
<g clip-path="url(#c137)"><use href="#tx" transform="matrix(0.9794 0.0515 0.0000 0.9474 9.1 -3.1)"/></g>
<g clip-path="url(#c138)"><use href="#tx" transform="matrix(0.9794 0.1031 0.0000 0.9474 9.1 -26.86)"/></g>
<g clip-path="url(#c139)"><use href="#tx" transform="matrix(1.0309 0.0515 0.0526 0.8947 -31.31 13.56)"/></g>
<g clip-path="url(#c140)"><use href="#tx" transform="matrix(1.0309 0.1031 0.0526 0.8947 -31.31 -11.2)"/></g>
<g clip-path="url(#c141)"><use href="#tx" transform="matrix(0.9794 0.0515 0.0000 0.8421 10.1 30.22)"/></g>
<g clip-path="url(#c142)"><use href="#tx" transform="matrix(0.9794 0.1546 0.0000 0.8421 10.1 -21.3)"/></g>
<g clip-path="url(#c143)"><use href="#tx" transform="matrix(1.0309 0.1031 0.0526 0.7895 -32.31 21.12)"/></g>
<g clip-path="url(#c144)"><use href="#tx" transform="matrix(1.0309 0.1031 0.0526 0.7895 -32.31 21.12)"/></g>
<g clip-path="url(#c145)"><use href="#tx" transform="matrix(0.9794 0.0515 0.0000 0.7368 11.1 64.53)"/></g>
<g clip-path="url(#c146)"><use href="#tx" transform="matrix(0.9794 0.0515 0.0000 0.7368 11.1 64.53)"/></g>
<g clip-path="url(#c147)"><use href="#tx" transform="matrix(0.9794 0.0515 0.0000 0.7368 11.1 64.53)"/></g>
<g clip-path="url(#c148)"><use href="#tx" transform="matrix(0.9794 0.1031 0.0000 0.7368 11.1 35.77)"/></g>
<g clip-path="url(#c149)"><use href="#tx" transform="matrix(1.0309 0.1031 0.0526 0.7368 -34.31 35.77)"/></g>
<g clip-path="url(#c150)"><use href="#tx" transform="matrix(0.9794 0.0000 0.0000 1.0000 6.1 0)"/></g>
<g clip-path="url(#c151)"><use href="#tx" transform="matrix(0.9794 0.0000 0.0000 1.0000 6.1 0)"/></g>
<g clip-path="url(#c152)"><use href="#tx" transform="matrix(1.0309 0.0000 0.0000 1.0000 -9.65 0)"/></g>
<g clip-path="url(#c153)"><use href="#tx" transform="matrix(1.0309 0.0000 0.0000 1.0000 -9.65 0)"/></g>
<g clip-path="url(#c154)"><use href="#tx" transform="matrix(0.9794 0.0000 0.0000 1.0000 7.1 0)"/></g>
<g clip-path="url(#c155)"><use href="#tx" transform="matrix(0.9794 0.0000 0.0000 1.0000 7.1 0)"/></g>
<g clip-path="url(#c156)"><use href="#tx" transform="matrix(0.9794 0.0000 0.0000 1.0000 7.1 0)"/></g>
<g clip-path="url(#c157)"><use href="#tx" transform="matrix(0.9794 0.0000 0.0000 1.0000 7.1 0)"/></g>
<g clip-path="url(#c158)"><use href="#tx" transform="matrix(1.0309 0.0000 0.0000 1.0000 -11.65 0)"/></g>
<g clip-path="url(#c159)"><use href="#tx" transform="matrix(1.0309 0.0000 0.0000 1.0000 -11.65 0)"/></g>
<g clip-path="url(#c160)"><use href="#tx" transform="matrix(0.9794 0.0000 0.0000 1.0000 8.1 0)"/></g>
<g clip-path="url(#c161)"><use href="#tx" transform="matrix(0.9794 0.0000 0.0000 1.0000 8.1 0)"/></g>
<g clip-path="url(#c162)"><use href="#tx" transform="matrix(1.0309 0.0515 0.0000 1.0000 -12.65 -20.76)"/></g>
<g clip-path="url(#c163)"><use href="#tx" transform="matrix(1.0309 0.0000 0.0000 0.9474 -12.65 17.66)"/></g>
<g clip-path="url(#c164)"><use href="#tx" transform="matrix(0.9794 0.1031 0.0000 0.9474 9.1 -25.86)"/></g>
<g clip-path="url(#c165)"><use href="#tx" transform="matrix(0.9794 0.0515 0.0000 0.8947 9.1 13.56)"/></g>
<g clip-path="url(#c166)"><use href="#tx" transform="matrix(0.9794 0.0515 0.0000 0.8947 9.1 13.56)"/></g>
<g clip-path="url(#c167)"><use href="#tx" transform="matrix(0.9794 0.0000 0.0000 0.8421 9.1 53.97)"/></g>
<g clip-path="url(#c168)"><use href="#tx" transform="matrix(1.0309 0.0515 0.0000 0.8421 -14.65 30.22)"/></g>
<g clip-path="url(#c169)"><use href="#tx" transform="matrix(1.0309 0.1031 0.0000 0.8947 -14.65 -11.2)"/></g>
<g clip-path="url(#c170)"><use href="#tx" transform="matrix(0.9794 0.0515 0.0000 0.8947 10.1 13.56)"/></g>
<g clip-path="url(#c171)"><use href="#tx" transform="matrix(0.9794 0.0000 0.0000 0.8421 10.1 55.97)"/></g>
<g clip-path="url(#c172)"><use href="#tx" transform="matrix(1.0309 0.1031 0.0000 0.8421 -15.65 4.46)"/></g>
<g clip-path="url(#c173)"><use href="#tx" transform="matrix(1.0309 0.0515 0.0000 0.7895 -15.65 47.87)"/></g>
<g clip-path="url(#c174)"><use href="#tx" transform="matrix(0.9794 0.0515 0.0000 0.7895 11.1 47.87)"/></g>
<g clip-path="url(#c175)"><use href="#tx" transform="matrix(0.9794 0.0515 0.0000 0.7895 11.1 47.87)"/></g>
<g clip-path="url(#c176)"><use href="#tx" transform="matrix(0.9794 0.0515 0.0000 0.7895 11.1 47.87)"/></g>
<g clip-path="url(#c177)"><use href="#tx" transform="matrix(1.0309 0.0000 0.0526 0.7368 -34.31 93.29)"/></g>
<g clip-path="url(#c178)"><use href="#tx" transform="matrix(1.0309 0.1031 0.0526 0.7368 -34.31 35.77)"/></g>
<g clip-path="url(#c179)"><use href="#tx" transform="matrix(0.9794 0.0515 0.0000 0.6842 12.1 82.19)"/></g>
<g clip-path="url(#c180)"><use href="#tx" transform="matrix(0.9794 0.0000 0.0000 1.0000 7.1 0)"/></g>
<g clip-path="url(#c181)"><use href="#tx" transform="matrix(0.9794 0.0000 0.0000 1.0000 7.1 0)"/></g>
<g clip-path="url(#c182)"><use href="#tx" transform="matrix(0.9794 0.0000 0.0000 1.0000 7.1 0)"/></g>
<g clip-path="url(#c183)"><use href="#tx" transform="matrix(0.9794 0.0000 0.0000 1.0000 7.1 0)"/></g>
<g clip-path="url(#c184)"><use href="#tx" transform="matrix(1.0309 0.0000 0.0000 1.0000 -11.65 0)"/></g>
<g clip-path="url(#c185)"><use href="#tx" transform="matrix(1.0309 0.0000 0.0000 1.0000 -11.65 0)"/></g>
<g clip-path="url(#c186)"><use href="#tx" transform="matrix(0.9794 0.0000 0.0000 1.0000 8.1 0)"/></g>
<g clip-path="url(#c187)"><use href="#tx" transform="matrix(0.9794 0.0000 0.0000 1.0000 8.1 0)"/></g>
<g clip-path="url(#c188)"><use href="#tx" transform="matrix(1.0309 0.0000 0.0000 1.0000 -12.65 0)"/></g>
<g clip-path="url(#c189)"><use href="#tx" transform="matrix(1.0309 0.0000 0.0000 1.0000 -12.65 0)"/></g>
<g clip-path="url(#c190)"><use href="#tx" transform="matrix(0.9794 0.0515 0.0000 1.0000 9.1 -21.76)"/></g>
<g clip-path="url(#c191)"><use href="#tx" transform="matrix(0.9794 0.0000 0.0000 0.9474 9.1 18.66)"/></g>
<g clip-path="url(#c192)"><use href="#tx" transform="matrix(0.9794 0.0000 0.0000 0.9474 9.1 18.66)"/></g>
<g clip-path="url(#c193)"><use href="#tx" transform="matrix(0.9794 0.0000 0.0000 0.9474 9.1 18.66)"/></g>
<g clip-path="url(#c194)"><use href="#tx" transform="matrix(1.0309 0.1031 0.0000 0.9474 -14.65 -28.86)"/></g>
<g clip-path="url(#c195)"><use href="#tx" transform="matrix(1.0309 0.0000 0.0000 0.8421 -14.65 55.97)"/></g>
<g clip-path="url(#c196)"><use href="#tx" transform="matrix(0.9794 0.0000 0.0000 0.8421 10.1 55.97)"/></g>
<g clip-path="url(#c197)"><use href="#tx" transform="matrix(0.9794 0.0000 0.0000 0.8421 10.1 55.97)"/></g>
<g clip-path="url(#c198)"><use href="#tx" transform="matrix(1.0309 0.0515 0.0000 0.8421 -15.65 30.22)"/></g>
<g clip-path="url(#c199)"><use href="#tx" transform="matrix(1.0309 0.0000 0.0000 0.7895 -15.65 74.63)"/></g>
<g clip-path="url(#c200)"><use href="#tx" transform="matrix(0.9794 0.0515 0.0000 0.7895 11.1 47.87)"/></g>
<g clip-path="url(#c201)"><use href="#tx" transform="matrix(0.9794 0.0000 0.0000 0.7368 11.1 93.29)"/></g>
<g clip-path="url(#c202)"><use href="#tx" transform="matrix(1.0309 0.0000 0.0000 0.7368 -16.65 93.29)"/></g>
<g clip-path="url(#c203)"><use href="#tx" transform="matrix(1.0309 0.0000 0.0000 0.7368 -16.65 93.29)"/></g>
<g clip-path="url(#c204)"><use href="#tx" transform="matrix(0.9794 0.0515 0.0000 0.7368 12.1 64.53)"/></g>
<g clip-path="url(#c205)"><use href="#tx" transform="matrix(0.9794 0.0515 0.0000 0.7368 12.1 64.53)"/></g>
<g clip-path="url(#c206)"><use href="#tx" transform="matrix(0.9794 0.0000 0.0000 1.0000 7.1 0)"/></g>
<g clip-path="url(#c207)"><use href="#tx" transform="matrix(0.9794 0.0000 0.0000 1.0000 7.1 0)"/></g>
<g clip-path="url(#c208)"><use href="#tx" transform="matrix(0.9794 0.0000 0.0000 1.0000 7.1 0)"/></g>
<g clip-path="url(#c209)"><use href="#tx" transform="matrix(0.9794 0.0000 0.0000 1.0000 7.1 0)"/></g>
<g clip-path="url(#c210)"><use href="#tx" transform="matrix(1.0309 0.0000 0.0000 1.0000 -11.65 0)"/></g>
<g clip-path="url(#c211)"><use href="#tx" transform="matrix(1.0309 0.0000 0.0000 1.0000 -11.65 0)"/></g>
<g clip-path="url(#c212)"><use href="#tx" transform="matrix(0.9794 0.0000 0.0000 1.0000 8.1 0)"/></g>
<g clip-path="url(#c213)"><use href="#tx" transform="matrix(0.9794 0.0000 0.0000 1.0000 8.1 0)"/></g>
<g clip-path="url(#c214)"><use href="#tx" transform="matrix(1.0309 0.0000 0.0000 1.0000 -12.65 0)"/></g>
<g clip-path="url(#c215)"><use href="#tx" transform="matrix(1.0309 0.0000 0.0000 1.0000 -12.65 0)"/></g>
<g clip-path="url(#c216)"><use href="#tx" transform="matrix(0.9794 0.0000 0.0000 1.0000 9.1 0)"/></g>
<g clip-path="url(#c217)"><use href="#tx" transform="matrix(0.9794 0.0000 0.0000 1.0000 9.1 0)"/></g>
<g clip-path="url(#c218)"><use href="#tx" transform="matrix(0.9794 0.0000 0.0000 1.0000 9.1 0)"/></g>
<g clip-path="url(#c219)"><use href="#tx" transform="matrix(0.9794 0.0000 0.0000 1.0000 9.1 0)"/></g>
<g clip-path="url(#c220)"><use href="#tx" transform="matrix(1.0309 0.0000 0.0000 1.0000 -14.65 0)"/></g>
<g clip-path="url(#c221)"><use href="#tx" transform="matrix(1.0309 0.0000 0.0000 1.0000 -14.65 0)"/></g>
<g clip-path="url(#c222)"><use href="#tx" transform="matrix(0.9794 0.0000 0.0000 1.0000 10.1 0)"/></g>
<g clip-path="url(#c223)"><use href="#tx" transform="matrix(0.9794 0.0000 0.0000 1.0000 10.1 0)"/></g>
<g clip-path="url(#c224)"><use href="#tx" transform="matrix(1.0309 0.0000 0.0000 1.0000 -15.65 0)"/></g>
<g clip-path="url(#c225)"><use href="#tx" transform="matrix(1.0309 0.0000 0.0000 1.0000 -15.65 0)"/></g>
<g clip-path="url(#c226)"><use href="#tx" transform="matrix(0.9794 0.0000 0.0000 1.0000 11.1 0)"/></g>
<g clip-path="url(#c227)"><use href="#tx" transform="matrix(0.9794 0.0000 0.0000 1.0000 11.1 0)"/></g>
<g clip-path="url(#c228)"><use href="#tx" transform="matrix(1.0309 0.0000 0.0000 1.0000 -16.65 0)"/></g>
<g clip-path="url(#c229)"><use href="#tx" transform="matrix(0.9794 0.0000 -0.0526 1.0000 30.76 0)"/></g>
<g clip-path="url(#c230)"><use href="#tx" transform="matrix(0.9794 0.0515 -0.0526 1.0000 30.76 -28.76)"/></g>
<g clip-path="url(#c231)"><use href="#tx" transform="matrix(1.0309 0.0000 0.0000 0.9474 -17.65 19.66)"/></g>
<g clip-path="url(#c232)"><use href="#tx" transform="matrix(0.9794 0.0000 0.0000 1.0000 7.1 0)"/></g>
<g clip-path="url(#c233)"><use href="#tx" transform="matrix(0.9794 0.0000 0.0000 1.0000 7.1 0)"/></g>
<g clip-path="url(#c234)"><use href="#tx" transform="matrix(0.9794 0.0000 0.0000 1.0000 7.1 0)"/></g>
<g clip-path="url(#c235)"><use href="#tx" transform="matrix(0.9794 0.0000 0.0000 1.0000 7.1 0)"/></g>
<g clip-path="url(#c236)"><use href="#tx" transform="matrix(1.0309 0.0000 0.0000 1.0000 -11.65 0)"/></g>
<g clip-path="url(#c237)"><use href="#tx" transform="matrix(1.0309 0.0000 0.0000 1.0000 -11.65 0)"/></g>
<g clip-path="url(#c238)"><use href="#tx" transform="matrix(0.9794 0.0000 0.0000 1.0000 8.1 0)"/></g>
<g clip-path="url(#c239)"><use href="#tx" transform="matrix(0.9794 0.0000 0.0000 1.0000 8.1 0)"/></g>
<g clip-path="url(#c240)"><use href="#tx" transform="matrix(1.0309 0.0000 0.0000 1.0000 -12.65 0)"/></g>
<g clip-path="url(#c241)"><use href="#tx" transform="matrix(1.0309 0.0000 0.0000 1.0000 -12.65 0)"/></g>
<g clip-path="url(#c242)"><use href="#tx" transform="matrix(0.9794 0.0000 0.0000 1.0000 9.1 0)"/></g>
<g clip-path="url(#c243)"><use href="#tx" transform="matrix(0.9794 0.0000 0.0000 1.0000 9.1 0)"/></g>
<g clip-path="url(#c244)"><use href="#tx" transform="matrix(0.9794 0.0000 0.0000 1.0000 9.1 0)"/></g>
<g clip-path="url(#c245)"><use href="#tx" transform="matrix(0.9794 0.0000 0.0000 1.0000 9.1 0)"/></g>
<g clip-path="url(#c246)"><use href="#tx" transform="matrix(1.0309 0.0000 0.0000 1.0000 -14.65 0)"/></g>
<g clip-path="url(#c247)"><use href="#tx" transform="matrix(1.0309 0.0000 0.0000 1.0000 -14.65 0)"/></g>
<g clip-path="url(#c248)"><use href="#tx" transform="matrix(0.9794 0.0000 0.0000 1.0000 10.1 0)"/></g>
<g clip-path="url(#c249)"><use href="#tx" transform="matrix(0.9794 0.0000 0.0000 1.0000 10.1 0)"/></g>
<g clip-path="url(#c250)"><use href="#tx" transform="matrix(1.0309 0.0000 0.0000 1.0000 -15.65 0)"/></g>
<g clip-path="url(#c251)"><use href="#tx" transform="matrix(1.0309 0.0000 0.0000 1.0000 -15.65 0)"/></g>
<g clip-path="url(#c252)"><use href="#tx" transform="matrix(0.9794 0.0000 0.0000 1.0000 11.1 0)"/></g>
<g clip-path="url(#c253)"><use href="#tx" transform="matrix(0.9794 0.0000 0.0000 1.0000 11.1 0)"/></g>
<g clip-path="url(#c254)"><use href="#tx" transform="matrix(0.9794 0.0000 0.0000 1.0000 11.1 0)"/></g>
<g clip-path="url(#c255)"><use href="#tx" transform="matrix(0.9794 0.0000 0.0000 1.0000 11.1 0)"/></g>
<g clip-path="url(#c256)"><use href="#tx" transform="matrix(1.0309 0.0000 0.0000 1.0000 -17.65 0)"/></g>
<g clip-path="url(#c257)"><use href="#tx" transform="matrix(1.0309 0.0000 0.0000 1.0000 -17.65 0)"/></g>
<g clip-path="url(#c258)"><use href="#tx" transform="matrix(1.0309 0.0000 0.0000 1.0000 -9.65 0)"/></g>
<g clip-path="url(#c259)"><use href="#tx" transform="matrix(1.0309 0.0000 0.0000 1.0000 -9.65 0)"/></g>
<g clip-path="url(#c260)"><use href="#tx" transform="matrix(0.9794 0.0000 -0.0526 1.0000 27.76 0)"/></g>
<g clip-path="url(#c261)"><use href="#tx" transform="matrix(0.9794 0.0000 -0.0526 1.0000 27.76 0)"/></g>
<g clip-path="url(#c262)"><use href="#tx" transform="matrix(1.0309 0.0000 0.0000 1.0000 -10.65 0)"/></g>
<g clip-path="url(#c263)"><use href="#tx" transform="matrix(0.9794 0.0000 0.0000 1.0000 7.1 0)"/></g>
<g clip-path="url(#c264)"><use href="#tx" transform="matrix(0.9794 0.0000 0.0000 1.0000 7.1 0)"/></g>
<g clip-path="url(#c265)"><use href="#tx" transform="matrix(1.0309 0.0000 0.0000 1.0000 -11.65 0)"/></g>
<g clip-path="url(#c266)"><use href="#tx" transform="matrix(0.9794 0.0000 -0.0526 1.0000 28.76 0)"/></g>
<g clip-path="url(#c267)"><use href="#tx" transform="matrix(0.9794 0.0000 -0.0526 1.0000 28.76 0)"/></g>
<g clip-path="url(#c268)"><use href="#tx" transform="matrix(1.0309 0.0000 0.0000 1.0000 -12.65 0)"/></g>
<g clip-path="url(#c269)"><use href="#tx" transform="matrix(1.0309 0.0000 0.0000 1.0000 -12.65 0)"/></g>
<g clip-path="url(#c270)"><use href="#tx" transform="matrix(0.9794 0.0000 -0.0526 1.0000 29.76 0)"/></g>
<g clip-path="url(#c271)"><use href="#tx" transform="matrix(0.9794 0.0000 -0.0526 1.0000 29.76 0)"/></g>
<g clip-path="url(#c272)"><use href="#tx" transform="matrix(0.9794 0.0000 -0.0526 1.0000 29.76 0)"/></g>
<g clip-path="url(#c273)"><use href="#tx" transform="matrix(0.9794 0.0000 -0.0526 1.0000 29.76 0)"/></g>
<g clip-path="url(#c274)"><use href="#tx" transform="matrix(1.0309 0.0000 0.0000 1.0000 -14.65 0)"/></g>
<g clip-path="url(#c275)"><use href="#tx" transform="matrix(1.0309 0.0000 0.0000 1.0000 -14.65 0)"/></g>
<g clip-path="url(#c276)"><use href="#tx" transform="matrix(0.9794 0.0000 -0.0526 1.0000 30.76 0)"/></g>
<g clip-path="url(#c277)"><use href="#tx" transform="matrix(0.9794 0.0000 -0.0526 1.0000 30.76 0)"/></g>
<g clip-path="url(#c278)"><use href="#tx" transform="matrix(0.9794 0.0000 -0.0526 1.0000 30.76 0)"/></g>
<g clip-path="url(#c279)"><use href="#tx" transform="matrix(1.0309 0.0000 -0.0526 1.0000 5 0)"/></g>
<g clip-path="url(#c280)"><use href="#tx" transform="matrix(1.0309 0.0000 -0.0526 1.0000 5 0)"/></g>
<g clip-path="url(#c281)"><use href="#tx" transform="matrix(0.9794 0.0000 -0.0526 1.0000 31.76 0)"/></g>
<g clip-path="url(#c282)"><use href="#tx" transform="matrix(0.9794 0.0000 -0.0526 1.0000 31.76 0)"/></g>
<g clip-path="url(#c283)"><use href="#tx" transform="matrix(0.9794 0.0000 -0.0526 1.0000 31.76 0)"/></g>
<g clip-path="url(#c284)"><use href="#tx" transform="matrix(1.0309 0.0000 0.0000 1.0000 -17.65 0)"/></g>
<g clip-path="url(#c285)"><use href="#tx" transform="matrix(1.0309 0.0000 0.0000 1.0000 -17.65 0)"/></g>
<g clip-path="url(#c286)"><use href="#tx" transform="matrix(0.9794 0.0000 -0.0526 1.0000 32.76 0)"/></g>
<g clip-path="url(#c287)"><use href="#tx" transform="matrix(1.0309 0.0000 0.0000 1.0000 -9.65 0)"/></g>
<g clip-path="url(#c288)"><use href="#tx" transform="matrix(0.9794 0.0000 -0.0526 1.0000 27.76 0)"/></g>
<g clip-path="url(#c289)"><use href="#tx" transform="matrix(0.9794 0.0000 -0.0526 1.0000 27.76 0)"/></g>
<g clip-path="url(#c290)"><use href="#tx" transform="matrix(0.9794 0.0000 -0.0526 1.0000 27.76 0)"/></g>
<g clip-path="url(#c291)"><use href="#tx" transform="matrix(1.0309 0.0000 -0.0526 1.0000 11 0)"/></g>
<g clip-path="url(#c292)"><use href="#tx" transform="matrix(1.0309 0.0000 -0.0526 1.0000 11 0)"/></g>
<g clip-path="url(#c293)"><use href="#tx" transform="matrix(0.9794 0.0000 -0.0526 1.0000 28.76 0)"/></g>
<g clip-path="url(#c294)"><use href="#tx" transform="matrix(0.9794 0.0000 -0.0526 1.0000 28.76 0)"/></g>
<g clip-path="url(#c295)"><use href="#tx" transform="matrix(0.9794 0.0000 -0.0526 1.0000 28.76 0)"/></g>
<g clip-path="url(#c296)"><use href="#tx" transform="matrix(0.9794 0.0000 -0.0526 1.0000 28.76 0)"/></g>
<g clip-path="url(#c297)"><use href="#tx" transform="matrix(1.0309 0.0000 -0.0526 1.0000 9 0)"/></g>
<g clip-path="url(#c298)"><use href="#tx" transform="matrix(1.0309 0.0000 -0.0526 1.0000 9 0)"/></g>
<g clip-path="url(#c299)"><use href="#tx" transform="matrix(0.9794 0.0000 -0.0526 1.0000 29.76 0)"/></g>
<g clip-path="url(#c300)"><use href="#tx" transform="matrix(0.9794 0.0000 -0.0526 1.0000 29.76 0)"/></g>
<g clip-path="url(#c301)"><use href="#tx" transform="matrix(0.9794 0.0000 -0.0526 1.0000 29.76 0)"/></g>
<g clip-path="url(#c302)"><use href="#tx" transform="matrix(0.9794 0.0000 -0.0526 1.0000 29.76 0)"/></g>
<g clip-path="url(#c303)"><use href="#tx" transform="matrix(1.0309 0.0000 -0.0526 1.0000 7 0)"/></g>
<g clip-path="url(#c304)"><use href="#tx" transform="matrix(1.0309 0.0000 -0.0526 1.0000 7 0)"/></g>
<g clip-path="url(#c305)"><use href="#tx" transform="matrix(0.9794 0.0000 -0.0526 1.0000 30.76 0)"/></g>
<g clip-path="url(#c306)"><use href="#tx" transform="matrix(0.9794 0.0000 -0.0526 1.0000 30.76 0)"/></g>
<g clip-path="url(#c307)"><use href="#tx" transform="matrix(0.9794 0.0000 -0.0526 1.0000 30.76 0)"/></g>
<g clip-path="url(#c308)"><use href="#tx" transform="matrix(0.9794 0.0000 -0.0526 1.0000 30.76 0)"/></g>
<g clip-path="url(#c309)"><use href="#tx" transform="matrix(1.0309 0.0000 -0.0526 1.0000 5 0)"/></g>
<g clip-path="url(#c310)"><use href="#tx" transform="matrix(1.0309 0.0000 -0.0526 1.0000 5 0)"/></g>
<g clip-path="url(#c311)"><use href="#tx" transform="matrix(0.9794 0.0000 -0.0526 1.0000 31.76 0)"/></g>
<g clip-path="url(#c312)"><use href="#tx" transform="matrix(0.9794 0.0000 -0.0526 1.0000 31.76 0)"/></g>
<g clip-path="url(#c313)"><use href="#tx" transform="matrix(1.0309 0.0000 -0.0526 1.0000 4 0)"/></g>
<g clip-path="url(#c314)"><use href="#tx" transform="matrix(0.9794 0.0000 -0.1053 1.0000 54.42 0)"/></g>
<g clip-path="url(#c315)"><use href="#tx" transform="matrix(0.9794 0.0000 -0.1053 1.0000 54.42 0)"/></g>
<g clip-path="url(#c316)"><use href="#tx" transform="matrix(1.0309 0.0000 -0.0526 1.0000 3 0)"/></g>
<g clip-path="url(#c317)"><use href="#tx" transform="matrix(0.9794 0.0000 -0.0526 1.0000 27.76 0)"/></g>
<g clip-path="url(#c318)"><use href="#tx" transform="matrix(0.9794 0.0000 -0.0526 1.0000 27.76 0)"/></g>
<g clip-path="url(#c319)"><use href="#tx" transform="matrix(0.9794 0.0000 -0.0526 1.0000 27.76 0)"/></g>
<g clip-path="url(#c320)"><use href="#tx" transform="matrix(1.0309 0.0000 0.0000 1.0000 -11.65 0)"/></g>
<g clip-path="url(#c321)"><use href="#tx" transform="matrix(1.0309 0.0000 0.0000 1.0000 -11.65 0)"/></g>
<g clip-path="url(#c322)"><use href="#tx" transform="matrix(0.9794 0.0000 -0.0526 1.0000 28.76 0)"/></g>
<g clip-path="url(#c323)"><use href="#tx" transform="matrix(0.9794 0.0000 -0.0526 1.0000 28.76 0)"/></g>
<g clip-path="url(#c324)"><use href="#tx" transform="matrix(0.9794 0.0000 -0.0526 1.0000 28.76 0)"/></g>
<g clip-path="url(#c325)"><use href="#tx" transform="matrix(0.9794 0.0000 -0.0526 1.0000 28.76 0)"/></g>
<g clip-path="url(#c326)"><use href="#tx" transform="matrix(1.0309 0.0000 0.0000 1.0000 -13.65 0)"/></g>
<g clip-path="url(#c327)"><use href="#tx" transform="matrix(1.0309 0.0000 0.0000 1.0000 -13.65 0)"/></g>
<g clip-path="url(#c328)"><use href="#tx" transform="matrix(0.9794 0.0000 -0.0526 1.0000 29.76 0)"/></g>
<g clip-path="url(#c329)"><use href="#tx" transform="matrix(0.9794 0.0000 -0.0526 1.0000 29.76 0)"/></g>
<g clip-path="url(#c330)"><use href="#tx" transform="matrix(0.9794 0.0000 -0.0526 1.0000 29.76 0)"/></g>
<g clip-path="url(#c331)"><use href="#tx" transform="matrix(0.9794 0.0000 -0.0526 1.0000 29.76 0)"/></g>
<g clip-path="url(#c332)"><use href="#tx" transform="matrix(0.9794 0.0000 -0.0526 1.0000 29.76 0)"/></g>
<g clip-path="url(#c333)"><use href="#tx" transform="matrix(1.0309 0.0000 -0.0526 1.0000 7 0)"/></g>
<g clip-path="url(#c334)"><use href="#tx" transform="matrix(1.0309 0.0000 -0.0526 1.0000 7 0)"/></g>
<g clip-path="url(#c335)"><use href="#tx" transform="matrix(0.9794 0.0000 -0.0526 1.0000 30.76 0)"/></g>
<g clip-path="url(#c336)"><use href="#tx" transform="matrix(0.9794 0.0000 -0.0526 1.0000 30.76 0)"/></g>
<g clip-path="url(#c337)"><use href="#tx" transform="matrix(0.9794 0.0000 -0.0526 1.0000 30.76 0)"/></g>
<g clip-path="url(#c338)"><use href="#tx" transform="matrix(0.9794 0.0000 -0.0526 1.0000 30.76 0)"/></g>
<g clip-path="url(#c339)"><use href="#tx" transform="matrix(1.0309 0.0000 -0.0526 1.0000 5 0)"/></g>
<g clip-path="url(#c340)"><use href="#tx" transform="matrix(1.0309 0.0000 -0.0526 1.0000 5 0)"/></g>
<g clip-path="url(#c341)"><use href="#tx" transform="matrix(0.9794 0.0000 -0.0526 1.0000 31.76 0)"/></g>
<g clip-path="url(#c342)"><use href="#tx" transform="matrix(0.9794 0.0000 -0.0526 1.0000 31.76 0)"/></g>
<g clip-path="url(#c343)"><use href="#tx" transform="matrix(0.9794 0.0000 -0.0526 1.0000 31.76 0)"/></g>
<g clip-path="url(#c344)"><use href="#tx" transform="matrix(0.9794 0.0000 -0.0526 1.0000 31.76 0)"/></g>
<g clip-path="url(#c345)"><use href="#tx" transform="matrix(1.0309 0.0000 -0.0526 1.0000 3 0)"/></g>
<g clip-path="url(#c346)"><use href="#tx" transform="matrix(0.9794 0.0000 -0.1053 1.0000 55.42 0)"/></g>
<g clip-path="url(#c347)"><use href="#tx" transform="matrix(0.9794 0.0000 -0.0526 1.0000 27.76 0)"/></g>
<g clip-path="url(#c348)"><use href="#tx" transform="matrix(1.0309 0.0000 0.0000 1.0000 -11.65 0)"/></g>
<g clip-path="url(#c349)"><use href="#tx" transform="matrix(1.0309 0.0000 0.0000 1.0000 -11.65 0)"/></g>
<g clip-path="url(#c350)"><use href="#tx" transform="matrix(0.9794 0.0000 -0.0526 1.0000 28.76 0)"/></g>
<g clip-path="url(#c351)"><use href="#tx" transform="matrix(0.9794 0.0000 -0.0526 1.0000 28.76 0)"/></g>
<g clip-path="url(#c352)"><use href="#tx" transform="matrix(0.9794 0.0000 -0.0526 1.0000 28.76 0)"/></g>
<g clip-path="url(#c353)"><use href="#tx" transform="matrix(0.9794 0.0000 -0.0526 1.0000 28.76 0)"/></g>
<g clip-path="url(#c354)"><use href="#tx" transform="matrix(0.9794 0.0000 -0.0526 1.0000 28.76 0)"/></g>
<g clip-path="url(#c355)"><use href="#tx" transform="matrix(1.0309 0.0000 -0.0526 1.0000 10 0)"/></g>
<g clip-path="url(#c356)"><use href="#tx" transform="matrix(0.9794 0.0000 -0.1053 1.0000 53.42 0)"/></g>
<g clip-path="url(#c357)"><use href="#tx" transform="matrix(0.9794 0.0000 -0.1053 1.0000 53.42 0)"/></g>
<g clip-path="url(#c358)"><use href="#tx" transform="matrix(1.0309 0.0000 -0.0526 1.0000 9 0)"/></g>
<g clip-path="url(#c359)"><use href="#tx" transform="matrix(0.9794 0.0000 -0.0526 1.0000 29.76 0)"/></g>
<g clip-path="url(#c360)"><use href="#tx" transform="matrix(0.9794 0.0000 -0.0526 1.0000 29.76 0)"/></g>
<g clip-path="url(#c361)"><use href="#tx" transform="matrix(0.9794 0.0000 -0.0526 1.0000 29.76 0)"/></g>
<g clip-path="url(#c362)"><use href="#tx" transform="matrix(0.9794 0.0000 -0.0526 1.0000 29.76 0)"/></g>
<g clip-path="url(#c363)"><use href="#tx" transform="matrix(1.0309 0.0000 -0.0526 1.0000 7 0)"/></g>
<g clip-path="url(#c364)"><use href="#tx" transform="matrix(0.9794 0.0000 -0.1053 1.0000 54.42 0)"/></g>
<g clip-path="url(#c365)"><use href="#tx" transform="matrix(0.9794 0.0000 -0.1053 1.0000 54.42 0)"/></g>
<g clip-path="url(#c366)"><use href="#tx" transform="matrix(1.0309 0.0000 -0.0526 1.0000 6 0)"/></g>
<g clip-path="url(#c367)"><use href="#tx" transform="matrix(0.9794 0.0000 -0.0526 1.0000 30.76 0)"/></g>
<g clip-path="url(#c368)"><use href="#tx" transform="matrix(0.9794 0.0000 -0.0526 1.0000 30.76 0)"/></g>
<g clip-path="url(#c369)"><use href="#tx" transform="matrix(1.0309 0.0000 -0.0526 1.0000 5 0)"/></g>
<g clip-path="url(#c370)"><use href="#tx" transform="matrix(0.9794 0.0000 -0.1053 1.0000 55.42 0)"/></g>
<g clip-path="url(#c371)"><use href="#tx" transform="matrix(0.9794 0.0000 -0.1053 1.0000 55.42 0)"/></g>
<g clip-path="url(#c372)"><use href="#tx" transform="matrix(0.9794 0.0000 -0.1053 1.0000 55.42 0)"/></g>
<g clip-path="url(#c373)"><use href="#tx" transform="matrix(0.9794 0.0000 -0.1053 1.0000 55.42 0)"/></g>
<g clip-path="url(#c374)"><use href="#tx" transform="matrix(1.0309 0.0000 -0.0526 1.0000 3 0)"/></g>
<g clip-path="url(#c375)"><use href="#tx" transform="matrix(0.9794 0.0000 -0.0526 1.0000 31.76 0)"/></g>
<g clip-path="url(#c376)"><use href="#tx" transform="matrix(0.9794 0.0000 -0.0526 1.0000 31.76 0)"/></g>
<g shape-rendering="crispEdges" fill="none" stroke-width="1">
<path stroke="none" fill="#0000FF" d="M257 167h24v1h-24zM282 167h4v1h-4zM247 168h10v1h-10zM286 168h10v1h-10zM239 169h8v1h-8zM296 169h8v1h-8zM233 170h6v1h-6zM304 170h6v1h-6zM227 171h6v1h-6zM310 171h7v1h-7zM221 172h6v1h-6zM317 172h5v1h-5zM216 173h5v1h-5zM322 173h4v1h-4zM212 174h4v1h-4zM326 174h4v1h-4zM207 175h5v1h-5zM330 175h4v1h-4zM203 176h4v1h-4zM334 176h4v1h-4zM200 177h3v1h-3zM338 177h3v1h-3zM197 178h3v1h-3zM341 178h3v1h-3zM194 179h3v1h-3zM344 179h2v1h-2zM191 180h3v1h-3zM346 180h3v1h-3zM188 181h3v1h-3zM349 181h3v1h-3zM352 182h2v1h-2zM354 183h3v1h-3zM357 184h3v1h-3zM360 185h3v1h-3zM363 186h2v1h-2zM365 187h3v1h-3zM368 188h3v1h-3zM371 189h2v1h-2zM241 190h41v1h-41zM283 190h9v1h-9zM373 190h3v1h-3zM236 191h5v1h-5zM292 191h13v1h-13zM378 191h3v1h-3zM232 192h4v1h-4zM305 192h6v1h-6zM381 192h6v1h-6zM227 193h5v1h-5zM311 193h7v1h-7zM387 193h7v1h-7zM222 194h5v1h-5zM318 194h8v1h-8zM394 194h5v1h-5zM217 195h5v1h-5zM326 195h10v1h-10zM399 195h3v1h-3zM213 196h4v1h-4zM336 196h6v1h-6zM402 196h4v1h-4zM208 197h5v1h-5zM342 197h3v1h-3zM406 197h3v1h-3zM203 198h5v1h-5zM345 198h3v1h-3zM409 198h3v1h-3zM198 199h5v1h-5zM348 199h4v1h-4zM412 199h4v1h-4zM450 199h9v1h-9zM194 200h4v1h-4zM352 200h3v1h-3zM416 200h11v1h-11zM441 200h9v1h-9zM459 200h9v1h-9zM189 201h5v1h-5zM355 201h3v1h-3zM427 201h14v1h-14zM468 201h4v1h-4zM473 201h22v1h-22zM187 202h2v1h-2zM358 202h3v1h-3zM495 202h6v1h-6zM361 203h3v1h-3zM501 203h6v1h-6zM364 204h3v1h-3zM507 204h5v1h-5zM367 205h4v1h-4zM512 205h3v1h-3zM371 206h3v1h-3zM515 206h3v1h-3zM374 207h3v1h-3zM518 207h4v1h-4zM379 208h4v1h-4zM522 208h3v1h-3zM383 209h10v1h-10zM525 209h3v1h-3zM393 210h7v1h-7zM528 210h3v1h-3zM400 211h3v1h-3zM531 211h2v1h-2zM403 212h4v1h-4zM533 212h2v1h-2zM254 213h29v1h-29zM284 213h9v1h-9zM407 213h3v1h-3zM535 213h2v1h-2zM235 214h19v1h-19zM293 214h19v1h-19zM410 214h3v1h-3zM537 214h2v1h-2zM222 215h13v1h-13zM312 215h14v1h-14zM413 215h4v1h-4zM539 215h3v1h-3zM216 216h6v1h-6zM326 216h6v1h-6zM417 216h11v1h-11zM542 216h2v1h-2zM210 217h6v1h-6zM332 217h6v1h-6zM428 217h31v1h-31zM544 217h2v1h-2zM203 218h7v1h-7zM338 218h7v1h-7zM459 218h6v1h-6zM546 218h2v1h-2zM197 219h6v1h-6zM345 219h6v1h-6zM465 219h6v1h-6zM548 219h2v1h-2zM191 220h6v1h-6zM351 220h6v1h-6zM471 220h3v1h-3zM475 220h22v1h-22zM549 220h3v1h-3zM188 221h3v1h-3zM357 221h7v1h-7zM497 221h6v1h-6zM552 221h2v1h-2zM364 222h6v1h-6zM503 222h6v1h-6zM554 222h2v1h-2zM370 223h7v1h-7zM509 223h5v1h-5zM556 223h2v1h-2zM377 224h3v1h-3zM381 224h3v1h-3zM514 224h4v1h-4zM558 224h2v1h-2zM384 225h6v1h-6zM518 225h4v1h-4zM560 225h2v1h-2zM390 226h6v1h-6zM522 226h4v1h-4zM562 226h2v1h-2zM396 227h6v1h-6zM526 227h4v1h-4zM564 227h2v1h-2zM402 228h5v1h-5zM530 228h3v1h-3zM566 228h2v1h-2zM407 229h5v1h-5zM533 229h3v1h-3zM412 230h5v1h-5zM536 230h3v1h-3zM417 231h6v1h-6zM539 231h2v1h-2zM423 232h6v1h-6zM541 232h3v1h-3zM429 233h6v1h-6zM544 233h3v1h-3zM435 234h26v1h-26zM547 234h3v1h-3zM461 235h6v1h-6zM550 235h3v1h-3zM236 236h48v1h-48zM285 236h28v1h-28zM467 236h6v1h-6zM553 236h2v1h-2zM217 237h19v1h-19zM313 237h20v1h-20zM473 237h3v1h-3zM477 237h9v1h-9zM555 237h2v1h-2zM203 238h14v1h-14zM333 238h14v1h-14zM486 238h12v1h-12zM557 238h2v1h-2zM193 239h10v1h-10zM347 239h10v1h-10zM498 239h5v1h-5zM559 239h2v1h-2zM189 240h4v1h-4zM357 240h9v1h-9zM503 240h4v1h-4zM561 240h2v1h-2zM366 241h10v1h-10zM507 241h5v1h-5zM563 241h2v1h-2zM376 242h5v1h-5zM382 242h9v1h-9zM512 242h5v1h-5zM565 242h2v1h-2zM391 243h12v1h-12zM517 243h5v1h-5zM567 243h2v1h-2zM403 244h5v1h-5zM522 244h4v1h-4zM408 245h4v1h-4zM526 245h5v1h-5zM412 246h5v1h-5zM531 246h4v1h-4zM417 247h6v1h-6zM535 247h3v1h-3zM423 248h6v1h-6zM538 248h4v1h-4zM429 249h7v1h-7zM542 249h3v1h-3zM436 250h13v1h-13zM545 250h3v1h-3zM449 251h13v1h-13zM548 251h4v1h-4zM462 252h6v1h-6zM552 252h3v1h-3zM468 253h6v1h-6zM555 253h3v1h-3zM474 254h3v1h-3zM478 254h2v1h-2zM558 254h2v1h-2zM480 255h5v1h-5zM560 255h3v1h-3zM485 256h4v1h-4zM563 256h3v1h-3zM489 257h5v1h-5zM566 257h2v1h-2zM494 258h7v1h-7zM568 258h3v1h-3zM501 259h10v1h-10zM511 260h7v1h-7zM518 261h5v1h-5zM523 262h5v1h-5zM528 263h5v1h-5zM533 264h5v1h-5zM538 265h5v1h-5zM543 266h4v1h-4zM547 267h5v1h-5zM552 268h5v1h-5zM557 269h5v1h-5zM562 270h4v1h-4zM566 271h5v1h-5zM571 272h2v1h-2zM190 278h96v1h-96zM287 278h96v1h-96zM384 278h22v1h-22zM406 279h6v1h-6zM412 280h6v1h-6zM418 281h8v1h-8zM426 282h10v1h-10zM436 283h8v1h-8zM444 284h6v1h-6zM450 285h6v1h-6zM456 286h8v1h-8zM464 287h10v1h-10zM474 288h5v1h-5zM480 288h4v1h-4zM484 289h10v1h-10zM494 290h8v1h-8zM502 291h6v1h-6zM508 292h7v1h-7zM515 293h7v1h-7zM522 294h6v1h-6zM528 295h6v1h-6zM534 296h8v1h-8zM190 297h18v1h-18zM209 297h19v1h-19zM229 297h18v1h-18zM248 297h18v1h-18zM267 297h19v1h-19zM287 297h96v1h-96zM384 297h28v1h-28zM542 297h10v1h-10zM412 298h14v1h-14zM552 298h8v1h-8zM426 299h10v1h-10zM560 299h6v1h-6zM436 300h10v1h-10zM566 300h7v1h-7zM446 301h10v1h-10zM573 301h3v1h-3zM456 302h9v1h-9zM465 303h10v1h-10zM475 304h4v1h-4zM480 304h4v1h-4zM484 305h10v1h-10zM494 306h9v1h-9zM503 307h6v1h-6zM509 308h6v1h-6zM515 309h8v1h-8zM523 310h10v1h-10zM533 311h15v1h-15zM548 312h14v1h-14zM562 313h10v1h-10zM572 314h4v1h-4zM190 316h18v1h-18zM209 316h19v1h-19zM229 316h18v1h-18zM248 316h18v1h-18zM267 316h19v1h-19zM287 316h96v1h-96zM384 316h28v1h-28zM412 317h15v1h-15zM427 318h10v1h-10zM437 319h14v1h-14zM451 320h19v1h-19zM470 321h10v1h-10zM481 321h9v1h-9zM490 322h14v1h-14zM504 323h10v1h-10zM514 324h15v1h-15zM529 325h19v1h-19zM548 326h14v1h-14zM562 327h10v1h-10zM572 328h5v1h-5zM190 335h18v1h-18zM209 335h19v1h-19zM229 335h18v1h-18zM248 335h18v1h-18zM267 335h19v1h-19zM287 335h18v1h-18zM306 335h19v1h-19zM326 335h57v1h-57zM384 335h48v1h-48zM432 336h33v1h-33zM465 337h10v1h-10zM475 338h5v1h-5zM481 338h28v1h-28zM509 339h20v1h-20zM529 340h39v1h-39zM568 341h9v1h-9zM190 373h18v1h-18zM209 373h19v1h-19zM229 373h18v1h-18zM248 373h18v1h-18zM267 373h19v1h-19zM287 373h18v1h-18zM306 373h19v1h-19zM326 373h57v1h-57zM384 373h96v1h-96zM481 373h96v1h-96zM190 392h18v1h-18zM209 392h19v1h-19zM229 392h18v1h-18zM248 392h18v1h-18zM267 392h19v1h-19zM287 392h18v1h-18zM306 392h19v1h-19zM326 392h57v1h-57zM384 392h96v1h-96zM481 392h96v1h-96zM190 411h18v1h-18zM209 411h18v1h-18zM228 411h19v1h-19zM248 411h18v1h-18zM267 411h18v1h-18zM286 411h96v1h-96zM383 411h96v1h-96zM480 411h96v1h-96zM189 430h18v1h-18zM208 430h19v1h-19zM228 430h18v1h-18zM247 430h18v1h-18zM266 430h19v1h-19zM286 430h95v1h-95zM382 430h96v1h-96zM479 430h96v1h-96zM188 468h18v1h-18zM207 468h19v1h-19zM227 468h18v1h-18zM246 468h18v1h-18zM265 468h18v1h-18zM284 468h95v1h-95zM380 468h96v1h-96zM477 468h95v1h-95zM188 487h18v1h-18zM207 487h18v1h-18zM226 487h18v1h-18zM245 487h18v1h-18zM264 487h18v1h-18zM283 487h95v1h-95zM379 487h95v1h-95zM475 487h95v1h-95zM187 506h95v1h-95zM283 506h94v1h-94zM378 506h95v1h-95zM474 506h94v1h-94zM186 525h95v1h-95zM282 525h94v1h-94zM377 525h94v1h-94zM472 525h95v1h-95zM187 182h1v1h-1zM203 157h1v9h-1zM204 166h1v10h-1zM204 177h1v10h-1zM204 516h1v9h-1zM204 526h1v18h-1zM205 187h1v11h-1zM205 199h1v9h-1zM205 497h1v9h-1zM205 507h1v9h-1zM206 208h1v10h-1zM206 219h1v9h-1zM206 459h1v9h-1zM206 469h1v18h-1zM206 488h1v9h-1zM207 228h1v10h-1zM207 239h1v10h-1zM207 421h1v9h-1zM207 431h1v18h-1zM207 450h1v9h-1zM208 249h1v10h-1zM208 260h1v18h-1zM208 279h1v18h-1zM208 298h1v18h-1zM208 317h1v18h-1zM208 336h1v18h-1zM208 355h1v18h-1zM208 374h1v18h-1zM208 393h1v18h-1zM208 412h1v9h-1zM221 151h1v5h-1zM222 156h1v11h-1zM223 167h1v5h-1zM223 173h1v10h-1zM223 516h1v9h-1zM223 526h1v18h-1zM224 183h1v11h-1zM224 195h1v10h-1zM224 497h1v9h-1zM224 507h1v9h-1zM225 205h1v10h-1zM225 216h1v10h-1zM225 478h1v9h-1zM225 488h1v9h-1zM226 226h1v11h-1zM226 238h1v5h-1zM226 440h1v9h-1zM226 450h1v18h-1zM226 469h1v9h-1zM227 243h1v11h-1zM227 402h1v9h-1zM227 412h1v18h-1zM227 431h1v9h-1zM228 254h1v5h-1zM228 260h1v18h-1zM228 279h1v18h-1zM228 298h1v18h-1zM228 317h1v18h-1zM228 336h1v18h-1zM228 355h1v18h-1zM228 374h1v18h-1zM228 393h1v9h-1zM240 147h1v5h-1zM241 152h1v12h-1zM242 164h1v5h-1zM242 170h1v10h-1zM242 516h1v9h-1zM242 526h1v18h-1zM243 180h1v10h-1zM243 191h1v11h-1zM243 497h1v9h-1zM243 507h1v9h-1zM244 202h1v12h-1zM244 215h1v10h-1zM244 478h1v9h-1zM244 488h1v9h-1zM245 225h1v11h-1zM245 237h1v5h-1zM245 440h1v9h-1zM245 450h1v18h-1zM245 469h1v9h-1zM246 242h1v12h-1zM246 421h1v9h-1zM246 431h1v9h-1zM247 254h1v5h-1zM247 260h1v18h-1zM247 279h1v18h-1zM247 298h1v18h-1zM247 317h1v18h-1zM247 336h1v18h-1zM247 355h1v18h-1zM247 374h1v18h-1zM247 393h1v18h-1zM247 412h1v9h-1zM260 145h1v11h-1zM261 156h1v11h-1zM261 168h1v5h-1zM261 535h1v9h-1zM262 173h1v12h-1zM262 497h1v9h-1zM262 507h1v18h-1zM262 526h1v9h-1zM263 185h1v5h-1zM263 191h1v11h-1zM263 478h1v9h-1zM263 488h1v9h-1zM264 202h1v11h-1zM264 214h1v11h-1zM264 459h1v9h-1zM264 469h1v9h-1zM265 225h1v11h-1zM265 237h1v11h-1zM265 421h1v9h-1zM265 431h1v18h-1zM265 450h1v9h-1zM266 248h1v11h-1zM266 260h1v18h-1zM266 279h1v18h-1zM266 298h1v18h-1zM266 317h1v18h-1zM266 336h1v18h-1zM266 355h1v18h-1zM266 374h1v18h-1zM266 393h1v18h-1zM266 412h1v9h-1zM299 147h1v11h-1zM299 535h1v9h-1zM300 158h1v11h-1zM300 170h1v10h-1zM300 516h1v9h-1zM300 526h1v9h-1zM301 180h1v11h-1zM301 192h1v11h-1zM301 497h1v9h-1zM301 507h1v9h-1zM302 203h1v11h-1zM302 215h1v10h-1zM302 478h1v9h-1zM302 488h1v9h-1zM303 225h1v11h-1zM303 237h1v5h-1zM303 440h1v9h-1zM303 450h1v18h-1zM303 469h1v9h-1zM304 242h1v12h-1zM304 421h1v9h-1zM304 431h1v9h-1zM305 254h1v5h-1zM305 260h1v18h-1zM305 279h1v18h-1zM305 298h1v18h-1zM305 317h1v18h-1zM305 336h1v18h-1zM305 355h1v18h-1zM305 374h1v18h-1zM305 393h1v18h-1zM305 412h1v9h-1zM318 535h1v9h-1zM319 151h1v10h-1zM319 516h1v9h-1zM319 526h1v9h-1zM320 161h1v11h-1zM320 173h1v10h-1zM320 497h1v9h-1zM320 507h1v9h-1zM321 183h1v11h-1zM321 195h1v10h-1zM321 478h1v9h-1zM321 488h1v9h-1zM322 205h1v10h-1zM322 216h1v10h-1zM322 459h1v9h-1zM322 469h1v9h-1zM323 226h1v11h-1zM323 238h1v5h-1zM323 421h1v9h-1zM323 431h1v18h-1zM323 450h1v9h-1zM324 243h1v11h-1zM324 402h1v9h-1zM324 412h1v9h-1zM325 254h1v5h-1zM325 260h1v18h-1zM325 279h1v18h-1zM325 298h1v18h-1zM325 317h1v18h-1zM325 336h1v18h-1zM325 355h1v18h-1zM325 374h1v18h-1zM325 393h1v9h-1zM337 535h1v9h-1zM338 157h1v10h-1zM338 516h1v9h-1zM338 526h1v9h-1zM339 167h1v10h-1zM339 178h1v9h-1zM339 497h1v9h-1zM339 507h1v9h-1zM340 187h1v9h-1zM340 197h1v10h-1zM340 478h1v9h-1zM340 488h1v9h-1zM341 207h1v11h-1zM341 219h1v9h-1zM341 459h1v9h-1zM341 469h1v9h-1zM342 228h1v10h-1zM342 239h1v5h-1zM342 440h1v9h-1zM342 450h1v9h-1zM343 244h1v10h-1zM343 421h1v9h-1zM343 431h1v9h-1zM344 254h1v5h-1zM344 260h1v18h-1zM344 279h1v18h-1zM344 298h1v18h-1zM344 317h1v18h-1zM344 336h1v18h-1zM344 355h1v18h-1zM344 374h1v18h-1zM344 393h1v18h-1zM344 412h1v9h-1zM356 535h1v9h-1zM357 165h1v9h-1zM357 516h1v9h-1zM357 526h1v9h-1zM358 174h1v10h-1zM358 185h1v8h-1zM358 497h1v9h-1zM358 507h1v9h-1zM359 193h1v9h-1zM359 203h1v9h-1zM359 478h1v9h-1zM359 488h1v9h-1zM360 212h1v9h-1zM360 222h1v9h-1zM360 459h1v9h-1zM360 469h1v9h-1zM361 231h1v9h-1zM361 241h1v4h-1zM361 440h1v9h-1zM361 450h1v9h-1zM362 245h1v10h-1zM362 421h1v9h-1zM362 431h1v9h-1zM363 255h1v4h-1zM363 260h1v18h-1zM363 279h1v18h-1zM363 298h1v18h-1zM363 317h1v18h-1zM363 336h1v18h-1zM363 355h1v18h-1zM363 374h1v18h-1zM363 393h1v18h-1zM363 412h1v9h-1zM376 191h1v1h-1zM377 208h1v1h-1zM394 535h1v9h-1zM395 179h1v3h-1zM395 516h1v9h-1zM395 526h1v9h-1zM396 182h1v8h-1zM396 502h1v4h-1zM396 507h1v9h-1zM397 190h1v4h-1zM397 195h1v7h-1zM397 492h1v10h-1zM398 202h1v8h-1zM398 211h1v8h-1zM398 478h1v9h-1zM398 488h1v4h-1zM399 219h1v8h-1zM399 228h1v7h-1zM399 459h1v9h-1zM399 469h1v9h-1zM400 235h1v8h-1zM400 244h1v3h-1zM400 440h1v9h-1zM400 450h1v9h-1zM401 247h1v8h-1zM401 421h1v9h-1zM401 431h1v9h-1zM402 255h1v4h-1zM402 260h1v18h-1zM402 279h1v18h-1zM402 298h1v18h-1zM402 317h1v18h-1zM402 336h1v18h-1zM402 355h1v18h-1zM402 374h1v18h-1zM402 393h1v18h-1zM402 412h1v9h-1zM413 535h1v9h-1zM414 516h1v9h-1zM414 526h1v9h-1zM415 502h1v4h-1zM415 507h1v9h-1zM416 185h1v7h-1zM416 492h1v10h-1zM417 192h1v8h-1zM417 201h1v7h-1zM417 478h1v9h-1zM417 488h1v4h-1zM418 208h1v8h-1zM418 217h1v7h-1zM418 459h1v9h-1zM418 469h1v9h-1zM419 224h1v7h-1zM419 232h1v15h-1zM419 248h1v7h-1zM419 440h1v9h-1zM419 450h1v9h-1zM420 255h1v7h-1zM420 263h1v9h-1zM420 421h1v9h-1zM420 431h1v9h-1zM421 272h1v9h-1zM421 282h1v16h-1zM421 299h1v9h-1zM421 402h1v9h-1zM421 412h1v9h-1zM422 308h1v9h-1zM422 318h1v17h-1zM422 336h1v18h-1zM422 355h1v18h-1zM422 374h1v18h-1zM422 393h1v9h-1zM432 535h1v9h-1zM433 521h1v4h-1zM433 526h1v9h-1zM434 511h1v10h-1zM435 186h1v7h-1zM435 497h1v9h-1zM435 507h1v4h-1zM436 193h1v8h-1zM436 202h1v7h-1zM436 478h1v9h-1zM436 488h1v9h-1zM437 209h1v8h-1zM437 218h1v8h-1zM437 459h1v9h-1zM437 469h1v9h-1zM438 226h1v8h-1zM438 235h1v7h-1zM438 440h1v9h-1zM438 450h1v9h-1zM439 242h1v8h-1zM439 251h1v7h-1zM439 421h1v9h-1zM439 431h1v9h-1zM440 258h1v8h-1zM440 267h1v16h-1zM440 284h1v8h-1zM440 402h1v9h-1zM440 412h1v9h-1zM441 292h1v8h-1zM441 301h1v18h-1zM441 320h1v16h-1zM441 337h1v17h-1zM441 355h1v18h-1zM441 374h1v18h-1zM441 393h1v9h-1zM451 535h1v9h-1zM452 183h1v4h-1zM452 521h1v4h-1zM452 526h1v9h-1zM453 187h1v8h-1zM453 511h1v10h-1zM454 195h1v4h-1zM454 200h1v8h-1zM454 497h1v9h-1zM454 507h1v4h-1zM455 208h1v9h-1zM455 218h1v4h-1zM455 478h1v9h-1zM455 488h1v9h-1zM456 222h1v8h-1zM456 464h1v4h-1zM456 469h1v9h-1zM457 230h1v4h-1zM457 235h1v8h-1zM457 454h1v10h-1zM458 243h1v8h-1zM458 252h1v8h-1zM458 440h1v9h-1zM458 450h1v4h-1zM459 260h1v9h-1zM459 270h1v16h-1zM459 287h1v7h-1zM459 421h1v9h-1zM459 431h1v9h-1zM460 294h1v8h-1zM460 303h1v17h-1zM460 321h1v15h-1zM460 337h1v17h-1zM460 355h1v18h-1zM460 374h1v18h-1zM460 393h1v18h-1zM460 412h1v9h-1zM488 183h1v3h-1zM489 186h1v6h-1zM489 535h1v9h-1zM490 192h1v6h-1zM490 521h1v4h-1zM490 526h1v9h-1zM491 198h1v3h-1zM491 202h1v4h-1zM491 511h1v10h-1zM492 206h1v10h-1zM492 497h1v9h-1zM492 507h1v4h-1zM493 216h1v4h-1zM493 221h1v4h-1zM493 483h1v4h-1zM493 488h1v9h-1zM494 225h1v9h-1zM494 473h1v10h-1zM495 234h1v4h-1zM495 239h1v9h-1zM495 459h1v9h-1zM495 469h1v4h-1zM496 248h1v10h-1zM496 259h1v7h-1zM496 440h1v9h-1zM496 450h1v9h-1zM497 266h1v8h-1zM497 275h1v7h-1zM497 421h1v9h-1zM497 431h1v9h-1zM498 282h1v8h-1zM498 291h1v7h-1zM498 402h1v9h-1zM498 412h1v9h-1zM499 298h1v8h-1zM499 307h1v15h-1zM499 323h1v15h-1zM499 339h1v15h-1zM499 355h1v18h-1zM499 374h1v18h-1zM499 393h1v9h-1zM507 186h1v3h-1zM508 189h1v6h-1zM508 535h1v9h-1zM509 195h1v6h-1zM509 521h1v4h-1zM509 526h1v9h-1zM510 201h1v3h-1zM510 205h1v4h-1zM510 511h1v10h-1zM511 209h1v10h-1zM511 502h1v4h-1zM511 507h1v4h-1zM512 219h1v4h-1zM512 224h1v4h-1zM512 492h1v10h-1zM513 228h1v10h-1zM513 478h1v9h-1zM513 488h1v4h-1zM514 238h1v4h-1zM514 243h1v8h-1zM514 464h1v4h-1zM514 469h1v9h-1zM515 251h1v9h-1zM515 261h1v4h-1zM515 454h1v10h-1zM516 265h1v9h-1zM516 440h1v9h-1zM516 450h1v4h-1zM517 274h1v4h-1zM517 279h1v7h-1zM517 421h1v9h-1zM517 431h1v9h-1zM518 286h1v7h-1zM518 294h1v15h-1zM518 310h1v7h-1zM518 402h1v9h-1zM518 412h1v9h-1zM519 317h1v7h-1zM519 325h1v14h-1zM519 340h1v14h-1zM519 355h1v18h-1zM519 374h1v18h-1zM519 393h1v9h-1zM527 193h1v4h-1zM527 535h1v9h-1zM528 197h1v9h-1zM528 521h1v4h-1zM528 526h1v9h-1zM529 206h1v4h-1zM529 211h1v4h-1zM529 511h1v10h-1zM530 215h1v9h-1zM530 502h1v4h-1zM530 507h1v4h-1zM531 224h1v4h-1zM531 229h1v4h-1zM531 492h1v10h-1zM532 233h1v9h-1zM532 478h1v9h-1zM532 488h1v4h-1zM533 242h1v4h-1zM533 247h1v4h-1zM533 464h1v4h-1zM533 469h1v9h-1zM534 251h1v9h-1zM534 454h1v10h-1zM535 260h1v4h-1zM535 265h1v8h-1zM535 440h1v9h-1zM535 450h1v4h-1zM536 273h1v8h-1zM536 282h1v7h-1zM536 421h1v9h-1zM536 431h1v9h-1zM537 289h1v7h-1zM537 297h1v7h-1zM537 402h1v9h-1zM537 412h1v9h-1zM538 304h1v7h-1zM538 312h1v13h-1zM538 326h1v14h-1zM538 341h1v13h-1zM538 355h1v18h-1zM538 374h1v18h-1zM538 393h1v9h-1zM546 535h1v9h-1zM547 203h1v4h-1zM547 521h1v4h-1zM547 526h1v9h-1zM548 207h1v8h-1zM548 511h1v10h-1zM549 215h1v4h-1zM549 221h1v2h-1zM549 502h1v4h-1zM549 507h1v4h-1zM550 223h1v8h-1zM550 492h1v10h-1zM551 231h1v4h-1zM551 236h1v4h-1zM551 483h1v4h-1zM551 488h1v4h-1zM552 240h1v8h-1zM552 473h1v10h-1zM553 248h1v4h-1zM553 253h1v7h-1zM553 459h1v9h-1zM553 469h1v4h-1zM554 260h1v8h-1zM554 269h1v7h-1zM554 440h1v9h-1zM554 450h1v9h-1zM555 276h1v8h-1zM555 285h1v6h-1zM555 426h1v4h-1zM555 431h1v9h-1zM556 291h1v7h-1zM556 299h1v6h-1zM556 416h1v10h-1zM557 305h1v7h-1zM557 313h1v13h-1zM557 327h1v6h-1zM557 364h1v9h-1zM557 374h1v18h-1zM557 393h1v18h-1zM557 412h1v4h-1zM558 333h1v7h-1zM558 341h1v13h-1zM558 355h1v9h-1zM569 244h1v1h-1zM571 259h1v1h-1z"/>
<path stroke="none" fill="#00FFFF" d="M255 144h29v1h-29zM245 145h10v1h-10zM284 145h10v1h-10zM238 146h7v1h-7zM294 146h8v1h-8zM233 147h5v1h-5zM302 147h5v1h-5zM229 148h4v1h-4zM307 148h5v1h-5zM224 149h5v1h-5zM312 149h5v1h-5zM220 150h4v1h-4zM317 150h4v1h-4zM217 151h3v1h-3zM321 151h3v1h-3zM214 152h3v1h-3zM324 152h3v1h-3zM211 153h3v1h-3zM327 153h4v1h-4zM208 154h3v1h-3zM331 154h3v1h-3zM205 155h3v1h-3zM334 155h3v1h-3zM202 156h3v1h-3zM337 156h3v1h-3zM200 157h2v1h-2zM340 157h2v1h-2zM198 158h2v1h-2zM342 158h2v1h-2zM196 159h2v1h-2zM344 159h3v1h-3zM193 160h3v1h-3zM347 160h2v1h-2zM191 161h2v1h-2zM349 161h3v1h-3zM189 162h2v1h-2zM352 162h2v1h-2zM187 163h2v1h-2zM354 163h2v1h-2zM185 164h2v1h-2zM356 164h2v1h-2zM358 165h2v1h-2zM360 166h2v1h-2zM362 167h2v1h-2zM364 168h2v1h-2zM367 170h2v1h-2zM369 171h2v1h-2zM371 172h2v1h-2zM373 173h2v1h-2zM375 174h3v1h-3zM378 175h5v1h-5zM383 176h5v1h-5zM388 177h5v1h-5zM393 178h4v1h-4zM397 179h4v1h-4zM401 180h3v1h-3zM404 181h4v1h-4zM408 182h3v1h-3zM450 182h12v1h-12zM480 182h12v1h-12zM411 183h4v1h-4zM444 183h6v1h-6zM462 183h18v1h-18zM492 183h6v1h-6zM415 184h11v1h-11zM438 184h6v1h-6zM498 184h6v1h-6zM426 185h12v1h-12zM504 185h5v1h-5zM509 186h3v1h-3zM512 187h3v1h-3zM515 188h2v1h-2zM517 189h3v1h-3zM520 190h3v1h-3zM523 191h3v1h-3zM526 192h2v1h-2zM528 193h2v1h-2zM530 194h2v1h-2zM532 195h2v1h-2zM534 196h2v1h-2zM536 197h2v1h-2zM538 198h2v1h-2zM540 199h2v1h-2zM542 200h2v1h-2zM544 201h2v1h-2zM546 202h2v1h-2zM548 203h2v1h-2zM551 205h2v1h-2zM553 206h2v1h-2zM556 208h2v1h-2zM559 210h2v1h-2zM561 211h2v1h-2zM564 213h2v1h-2zM189 259h216v1h-216zM405 260h6v1h-6zM411 261h6v1h-6zM417 262h6v1h-6zM423 263h5v1h-5zM428 264h5v1h-5zM433 265h5v1h-5zM438 266h6v1h-6zM444 267h6v1h-6zM450 268h6v1h-6zM456 269h7v1h-7zM463 270h6v1h-6zM469 271h6v1h-6zM475 272h8v1h-8zM483 273h10v1h-10zM493 274h7v1h-7zM500 275h5v1h-5zM505 276h5v1h-5zM510 277h5v1h-5zM515 278h6v1h-6zM521 279h6v1h-6zM527 280h6v1h-6zM533 281h7v1h-7zM540 282h6v1h-6zM546 283h6v1h-6zM552 284h7v1h-7zM559 285h6v1h-6zM565 286h7v1h-7zM572 287h4v1h-4zM190 354h18v1h-18zM209 354h19v1h-19zM229 354h18v1h-18zM248 354h18v1h-18zM267 354h19v1h-19zM287 354h18v1h-18zM306 354h19v1h-19zM326 354h242v1h-242zM568 355h10v1h-10zM189 449h18v1h-18zM208 449h18v1h-18zM227 449h18v1h-18zM246 449h19v1h-19zM266 449h18v1h-18zM285 449h289v1h-289zM185 544h381v1h-381zM185 165h1v8h-1zM185 516h1v28h-1zM186 173h1v39h-1zM186 497h1v19h-1zM187 212h1v19h-1zM187 459h1v9h-1zM187 469h1v18h-1zM187 488h1v9h-1zM188 231h1v19h-1zM188 421h1v9h-1zM188 431h1v18h-1zM188 450h1v9h-1zM189 250h1v9h-1zM189 260h1v37h-1zM189 298h1v18h-1zM189 317h1v18h-1zM189 336h1v18h-1zM189 355h1v18h-1zM189 374h1v18h-1zM189 393h1v18h-1zM189 412h1v9h-1zM279 145h1v5h-1zM280 150h1v12h-1zM280 535h1v9h-1zM281 162h1v17h-1zM281 516h1v19h-1zM282 179h1v23h-1zM282 478h1v9h-1zM282 488h1v28h-1zM283 202h1v23h-1zM283 459h1v9h-1zM283 469h1v9h-1zM284 225h1v17h-1zM284 440h1v9h-1zM284 450h1v9h-1zM285 242h1v12h-1zM285 402h1v9h-1zM285 412h1v18h-1zM285 431h1v9h-1zM286 254h1v5h-1zM286 260h1v37h-1zM286 298h1v18h-1zM286 317h1v18h-1zM286 336h1v18h-1zM286 355h1v18h-1zM286 374h1v18h-1zM286 393h1v9h-1zM366 169h1v1h-1zM375 175h1v4h-1zM375 535h1v9h-1zM376 179h1v8h-1zM376 516h1v19h-1zM377 187h1v13h-1zM377 497h1v19h-1zM378 200h1v12h-1zM378 478h1v19h-1zM379 212h1v8h-1zM379 464h1v14h-1zM380 220h1v13h-1zM380 454h1v10h-1zM381 233h1v14h-1zM381 421h1v28h-1zM381 450h1v4h-1zM382 247h1v8h-1zM382 402h1v19h-1zM383 255h1v4h-1zM383 260h1v94h-1zM383 355h1v47h-1zM470 535h1v9h-1zM471 184h1v8h-1zM471 521h1v14h-1zM472 192h1v14h-1zM472 511h1v10h-1zM473 206h1v10h-1zM473 497h1v14h-1zM474 216h1v9h-1zM474 483h1v14h-1zM475 225h1v8h-1zM475 473h1v10h-1zM476 233h1v13h-1zM476 459h1v14h-1zM477 246h1v17h-1zM477 440h1v9h-1zM477 450h1v9h-1zM478 263h1v9h-1zM478 273h1v7h-1zM478 421h1v19h-1zM479 280h1v33h-1zM479 402h1v19h-1zM480 313h1v41h-1zM480 355h1v47h-1zM550 204h1v1h-1zM555 207h1v1h-1zM558 209h1v1h-1zM563 212h1v1h-1zM565 540h1v4h-1zM566 214h1v4h-1zM566 530h1v10h-1zM567 218h1v8h-1zM567 516h1v14h-1zM568 226h1v7h-1zM568 502h1v14h-1zM569 233h1v8h-1zM569 492h1v10h-1zM570 241h1v7h-1zM570 483h1v9h-1zM571 248h1v8h-1zM571 473h1v10h-1zM572 256h1v10h-1zM572 459h1v14h-1zM573 266h1v10h-1zM573 445h1v4h-1zM573 450h1v9h-1zM574 276h1v8h-1zM574 435h1v10h-1zM575 284h1v3h-1zM575 288h1v6h-1zM575 421h1v14h-1zM576 294h1v27h-1zM576 402h1v19h-1zM577 321h1v34h-1zM577 356h1v46h-1z"/>
<path stroke="none" fill="#FF00FF" d="M202 302h2v1h-2zM213 302h2v1h-2zM222 302h2v1h-2zM233 302h2v1h-2zM260 302h2v1h-2zM271 302h2v1h-2zM280 302h2v1h-2zM202 330h2v1h-2zM213 330h2v1h-2zM222 330h2v1h-2zM233 330h2v1h-2zM260 330h2v1h-2zM271 330h2v1h-2zM280 330h2v1h-2zM202 340h2v1h-2zM213 340h2v1h-2zM222 340h2v1h-2zM233 340h2v1h-2zM260 340h2v1h-2zM271 340h2v1h-2zM280 340h2v1h-2zM291 340h2v1h-2zM310 340h2v1h-2zM319 340h2v1h-2zM202 368h2v1h-2zM213 368h2v1h-2zM222 368h2v1h-2zM233 368h2v1h-2zM260 368h2v1h-2zM271 368h2v1h-2zM280 368h2v1h-2zM291 368h2v1h-2zM310 368h2v1h-2zM319 368h2v1h-2zM202 378h2v1h-2zM213 378h2v1h-2zM222 378h2v1h-2zM233 378h2v1h-2zM260 378h2v1h-2zM271 378h2v1h-2zM280 378h2v1h-2zM291 378h2v1h-2zM310 378h2v1h-2zM319 378h2v1h-2zM202 406h2v1h-2zM213 406h2v1h-2zM232 406h2v1h-2zM241 406h2v1h-2zM260 406h2v1h-2zM271 406h2v1h-2zM202 416h2v1h-2zM221 416h2v1h-2zM232 416h2v1h-2zM241 416h2v1h-2zM260 416h2v1h-2zM279 416h2v1h-2zM193 444h2v1h-2zM212 444h2v1h-2zM231 444h2v1h-2zM250 444h2v1h-2zM259 444h2v1h-2zM270 444h2v1h-2zM201 454h2v1h-2zM220 454h2v1h-2zM231 454h2v1h-2zM250 454h2v1h-2zM259 454h2v1h-2zM278 454h2v1h-2zM200 482h2v1h-2zM211 482h2v1h-2zM230 482h2v1h-2zM249 482h2v1h-2zM268 482h2v1h-2zM187 468h1v1h-1zM187 487h1v1h-1zM188 430h1v1h-1zM188 449h1v1h-1zM188 467h1v1h-1zM188 469h1v1h-1zM188 486h1v1h-1zM189 297h1v1h-1zM189 316h1v1h-1zM189 335h1v1h-1zM189 354h1v1h-1zM189 373h1v1h-1zM189 392h1v1h-1zM189 411h1v1h-1zM189 429h1v1h-1zM189 431h1v1h-1zM189 448h1v1h-1zM189 450h1v1h-1zM189 466h1v1h-1zM189 470h1v1h-1zM189 485h1v1h-1zM190 298h1v1h-1zM190 315h1v1h-1zM190 317h1v1h-1zM190 334h1v1h-1zM190 336h1v1h-1zM190 353h1v1h-1zM190 355h1v1h-1zM190 372h1v1h-1zM190 374h1v1h-1zM190 391h1v1h-1zM190 393h1v1h-1zM190 410h1v1h-1zM190 412h1v1h-1zM190 428h1v1h-1zM190 432h1v1h-1zM190 447h1v1h-1zM190 451h1v1h-1zM190 465h1v1h-1zM190 471h1v1h-1zM190 484h1v1h-1zM191 299h1v1h-1zM191 314h1v1h-1zM191 318h1v1h-1zM191 333h1v1h-1zM191 337h1v1h-1zM191 352h1v1h-1zM191 356h1v1h-1zM191 371h1v1h-1zM191 375h1v1h-1zM191 390h1v1h-1zM191 394h1v1h-1zM191 409h1v1h-1zM191 413h1v1h-1zM191 427h1v1h-1zM191 433h1v1h-1zM191 446h1v1h-1zM191 452h1v1h-1zM191 464h1v1h-1zM191 472h1v1h-1zM191 483h1v1h-1zM192 300h1v1h-1zM192 313h1v1h-1zM192 319h1v1h-1zM192 332h1v1h-1zM192 338h1v1h-1zM192 351h1v1h-1zM192 357h1v1h-1zM192 370h1v1h-1zM192 376h1v1h-1zM192 389h1v1h-1zM192 395h1v1h-1zM192 408h1v1h-1zM192 414h1v1h-1zM192 426h1v1h-1zM192 434h1v1h-1zM192 445h1v1h-1zM192 453h1v1h-1zM192 463h1v1h-1zM192 473h1v2h-1zM192 482h1v1h-1zM193 301h1v1h-1zM193 312h1v1h-1zM193 320h1v1h-1zM193 331h1v1h-1zM193 339h1v1h-1zM193 350h1v1h-1zM193 358h1v1h-1zM193 369h1v1h-1zM193 377h1v1h-1zM193 388h1v1h-1zM193 396h1v1h-1zM193 407h1v1h-1zM193 415h1v1h-1zM193 425h1v1h-1zM193 435h1v1h-1zM193 454h1v1h-1zM193 462h1v1h-1zM193 475h1v1h-1zM193 481h1v1h-1zM194 302h1v1h-1zM194 310h1v2h-1zM194 321h1v2h-1zM194 330h1v1h-1zM194 340h1v1h-1zM194 348h1v2h-1zM194 359h1v2h-1zM194 368h1v1h-1zM194 378h1v1h-1zM194 386h1v2h-1zM194 397h1v2h-1zM194 406h1v1h-1zM194 416h1v1h-1zM194 424h1v1h-1zM194 436h1v1h-1zM194 455h1v1h-1zM194 461h1v1h-1zM194 476h1v1h-1zM194 480h1v1h-1zM195 303h1v1h-1zM195 309h1v1h-1zM195 323h1v1h-1zM195 329h1v1h-1zM195 341h1v1h-1zM195 347h1v1h-1zM195 361h1v1h-1zM195 367h1v1h-1zM195 379h1v1h-1zM195 385h1v1h-1zM195 399h1v1h-1zM195 405h1v1h-1zM195 417h1v1h-1zM195 423h1v1h-1zM195 437h1v1h-1zM195 443h1v1h-1zM195 456h1v1h-1zM195 460h1v1h-1zM195 477h1v1h-1zM195 479h1v1h-1zM196 304h1v1h-1zM196 308h1v1h-1zM196 324h1v1h-1zM196 328h1v1h-1zM196 342h1v1h-1zM196 346h1v1h-1zM196 362h1v1h-1zM196 366h1v1h-1zM196 380h1v1h-1zM196 384h1v1h-1zM196 400h1v1h-1zM196 404h1v1h-1zM196 418h1v1h-1zM196 422h1v1h-1zM196 438h1v1h-1zM196 442h1v1h-1zM196 457h1v1h-1zM196 459h1v1h-1zM196 478h1v1h-1zM197 305h1v1h-1zM197 307h1v1h-1zM197 325h1v1h-1zM197 327h1v1h-1zM197 343h1v1h-1zM197 345h1v1h-1zM197 363h1v1h-1zM197 365h1v1h-1zM197 381h1v1h-1zM197 383h1v1h-1zM197 401h1v1h-1zM197 403h1v1h-1zM197 419h1v1h-1zM197 421h1v1h-1zM197 439h1v1h-1zM197 441h1v1h-1zM197 458h1v1h-1zM197 477h1v1h-1zM197 479h1v1h-1zM198 306h1v1h-1zM198 326h1v1h-1zM198 344h1v1h-1zM198 364h1v1h-1zM198 382h1v1h-1zM198 402h1v1h-1zM198 420h1v1h-1zM198 440h1v1h-1zM198 457h1v1h-1zM198 459h1v1h-1zM198 476h1v1h-1zM198 480h1v1h-1zM199 305h1v1h-1zM199 307h1v1h-1zM199 325h1v1h-1zM199 327h1v1h-1zM199 343h1v1h-1zM199 345h1v1h-1zM199 363h1v1h-1zM199 365h1v1h-1zM199 381h1v1h-1zM199 383h1v1h-1zM199 401h1v1h-1zM199 403h1v1h-1zM199 419h1v1h-1zM199 421h1v1h-1zM199 439h1v1h-1zM199 441h1v1h-1zM199 456h1v1h-1zM199 460h1v1h-1zM199 475h1v1h-1zM199 481h1v1h-1zM200 304h1v1h-1zM200 308h1v1h-1zM200 324h1v1h-1zM200 328h1v1h-1zM200 342h1v1h-1zM200 346h1v1h-1zM200 362h1v1h-1zM200 366h1v1h-1zM200 380h1v1h-1zM200 384h1v1h-1zM200 400h1v1h-1zM200 404h1v1h-1zM200 418h1v1h-1zM200 422h1v1h-1zM200 438h1v1h-1zM200 442h1v1h-1zM200 455h1v1h-1zM200 461h1v1h-1zM200 474h1v1h-1zM201 303h1v1h-1zM201 309h1v1h-1zM201 323h1v1h-1zM201 329h1v1h-1zM201 341h1v1h-1zM201 347h1v1h-1zM201 361h1v1h-1zM201 367h1v1h-1zM201 379h1v1h-1zM201 385h1v1h-1zM201 399h1v1h-1zM201 405h1v1h-1zM201 417h1v1h-1zM201 423h1v1h-1zM201 437h1v1h-1zM201 443h1v1h-1zM201 462h1v2h-1zM201 473h1v1h-1zM202 310h1v1h-1zM202 322h1v1h-1zM202 348h1v1h-1zM202 360h1v1h-1zM202 386h1v1h-1zM202 398h1v1h-1zM202 424h1v2h-1zM202 435h1v2h-1zM202 444h1v1h-1zM202 464h1v1h-1zM202 472h1v1h-1zM202 483h1v1h-1zM203 311h1v1h-1zM203 321h1v1h-1zM203 349h1v1h-1zM203 359h1v1h-1zM203 387h1v1h-1zM203 397h1v1h-1zM203 426h1v1h-1zM203 434h1v1h-1zM203 445h1v1h-1zM203 453h1v1h-1zM203 465h1v1h-1zM203 471h1v1h-1zM203 484h1v1h-1zM204 301h1v1h-1zM204 312h1v1h-1zM204 320h1v1h-1zM204 331h1v1h-1zM204 339h1v1h-1zM204 350h1v1h-1zM204 358h1v1h-1zM204 369h1v1h-1zM204 377h1v1h-1zM204 388h1v1h-1zM204 396h1v1h-1zM204 407h1v1h-1zM204 415h1v1h-1zM204 427h1v1h-1zM204 433h1v1h-1zM204 446h1v1h-1zM204 452h1v1h-1zM204 466h1v1h-1zM204 470h1v1h-1zM204 485h1v1h-1zM205 300h1v1h-1zM205 313h1v1h-1zM205 319h1v1h-1zM205 332h1v1h-1zM205 338h1v1h-1zM205 351h1v1h-1zM205 357h1v1h-1zM205 370h1v1h-1zM205 376h1v1h-1zM205 389h1v1h-1zM205 395h1v1h-1zM205 408h1v1h-1zM205 414h1v1h-1zM205 428h1v1h-1zM205 432h1v1h-1zM205 447h1v1h-1zM205 451h1v1h-1zM205 467h1v1h-1zM205 469h1v1h-1zM205 486h1v1h-1zM206 299h1v1h-1zM206 314h1v1h-1zM206 318h1v1h-1zM206 333h1v1h-1zM206 337h1v1h-1zM206 352h1v1h-1zM206 356h1v1h-1zM206 371h1v1h-1zM206 375h1v1h-1zM206 390h1v1h-1zM206 394h1v1h-1zM206 409h1v1h-1zM206 413h1v1h-1zM206 429h1v1h-1zM206 431h1v1h-1zM206 448h1v1h-1zM206 450h1v1h-1zM206 468h1v1h-1zM206 487h1v1h-1zM207 298h1v1h-1zM207 315h1v1h-1zM207 317h1v1h-1zM207 334h1v1h-1zM207 336h1v1h-1zM207 353h1v1h-1zM207 355h1v1h-1zM207 372h1v1h-1zM207 374h1v1h-1zM207 391h1v1h-1zM207 393h1v1h-1zM207 410h1v1h-1zM207 412h1v1h-1zM207 430h1v1h-1zM207 449h1v1h-1zM207 467h1v1h-1zM207 469h1v1h-1zM207 486h1v1h-1zM208 297h1v1h-1zM208 316h1v1h-1zM208 335h1v1h-1zM208 354h1v1h-1zM208 373h1v1h-1zM208 392h1v1h-1zM208 411h1v1h-1zM208 429h1v1h-1zM208 431h1v1h-1zM208 448h1v1h-1zM208 450h1v1h-1zM208 466h1v1h-1zM208 470h1v1h-1zM208 485h1v1h-1zM209 298h1v1h-1zM209 315h1v1h-1zM209 317h1v1h-1zM209 334h1v1h-1zM209 336h1v1h-1zM209 353h1v1h-1zM209 355h1v1h-1zM209 372h1v1h-1zM209 374h1v1h-1zM209 391h1v1h-1zM209 393h1v1h-1zM209 410h1v1h-1zM209 412h1v1h-1zM209 428h1v1h-1zM209 432h1v1h-1zM209 447h1v1h-1zM209 451h1v1h-1zM209 465h1v1h-1zM209 471h1v1h-1zM209 484h1v1h-1zM210 299h1v1h-1zM210 314h1v1h-1zM210 318h1v1h-1zM210 333h1v1h-1zM210 337h1v1h-1zM210 352h1v1h-1zM210 356h1v1h-1zM210 371h1v1h-1zM210 375h1v1h-1zM210 390h1v1h-1zM210 394h1v1h-1zM210 409h1v1h-1zM210 413h1v1h-1zM210 427h1v1h-1zM210 433h1v1h-1zM210 446h1v1h-1zM210 452h1v1h-1zM210 464h1v1h-1zM210 472h1v1h-1zM210 483h1v1h-1zM211 300h1v1h-1zM211 313h1v1h-1zM211 319h1v1h-1zM211 332h1v1h-1zM211 338h1v1h-1zM211 351h1v1h-1zM211 357h1v1h-1zM211 370h1v1h-1zM211 376h1v1h-1zM211 389h1v1h-1zM211 395h1v1h-1zM211 408h1v1h-1zM211 414h1v1h-1zM211 426h1v1h-1zM211 434h1v1h-1zM211 445h1v1h-1zM211 453h1v1h-1zM211 463h1v1h-1zM211 473h1v1h-1zM212 301h1v1h-1zM212 312h1v1h-1zM212 320h1v1h-1zM212 331h1v1h-1zM212 339h1v1h-1zM212 350h1v1h-1zM212 358h1v1h-1zM212 369h1v1h-1zM212 377h1v1h-1zM212 388h1v1h-1zM212 396h1v1h-1zM212 407h1v1h-1zM212 415h1v1h-1zM212 425h1v1h-1zM212 435h1v1h-1zM212 454h1v1h-1zM212 462h1v1h-1zM212 474h1v1h-1zM213 311h1v1h-1zM213 321h1v1h-1zM213 349h1v1h-1zM213 359h1v1h-1zM213 387h1v1h-1zM213 397h1v1h-1zM213 416h1v1h-1zM213 424h1v1h-1zM213 436h1v1h-1zM213 455h1v1h-1zM213 461h1v1h-1zM213 475h1v1h-1zM213 481h1v1h-1zM214 310h1v1h-1zM214 322h1v1h-1zM214 348h1v1h-1zM214 360h1v1h-1zM214 386h1v1h-1zM214 398h1v1h-1zM214 417h1v1h-1zM214 423h1v1h-1zM214 437h1v1h-1zM214 443h1v1h-1zM214 456h1v1h-1zM214 460h1v1h-1zM214 476h1v1h-1zM214 480h1v1h-1zM215 303h1v1h-1zM215 309h1v1h-1zM215 323h1v1h-1zM215 329h1v1h-1zM215 341h1v1h-1zM215 347h1v1h-1zM215 361h1v1h-1zM215 367h1v1h-1zM215 379h1v1h-1zM215 385h1v1h-1zM215 399h1v1h-1zM215 405h1v1h-1zM215 418h1v1h-1zM215 422h1v1h-1zM215 438h1v1h-1zM215 442h1v1h-1zM215 457h1v1h-1zM215 459h1v1h-1zM215 477h1v1h-1zM215 479h1v1h-1zM216 304h1v1h-1zM216 308h1v1h-1zM216 324h1v1h-1zM216 328h1v1h-1zM216 342h1v1h-1zM216 346h1v1h-1zM216 362h1v1h-1zM216 366h1v1h-1zM216 380h1v1h-1zM216 384h1v1h-1zM216 400h1v1h-1zM216 404h1v1h-1zM216 419h1v1h-1zM216 421h1v1h-1zM216 439h1v1h-1zM216 441h1v1h-1zM216 458h1v1h-1zM216 478h1v1h-1zM217 305h1v1h-1zM217 307h1v1h-1zM217 325h1v1h-1zM217 327h1v1h-1zM217 343h1v1h-1zM217 345h1v1h-1zM217 363h1v1h-1zM217 365h1v1h-1zM217 381h1v1h-1zM217 383h1v1h-1zM217 401h1v1h-1zM217 403h1v1h-1zM217 420h1v1h-1zM217 440h1v1h-1zM217 457h1v1h-1zM217 459h1v1h-1zM217 477h1v1h-1zM217 479h1v1h-1zM218 306h1v1h-1zM218 326h1v1h-1zM218 344h1v1h-1zM218 364h1v1h-1zM218 382h1v1h-1zM218 402h1v1h-1zM218 419h1v1h-1zM218 421h1v1h-1zM218 439h1v1h-1zM218 441h1v1h-1zM218 456h1v1h-1zM218 460h1v1h-1zM218 476h1v1h-1zM218 480h1v1h-1zM219 305h1v1h-1zM219 307h1v1h-1zM219 325h1v1h-1zM219 327h1v1h-1zM219 343h1v1h-1zM219 345h1v1h-1zM219 363h1v1h-1zM219 365h1v1h-1zM219 381h1v1h-1zM219 383h1v1h-1zM219 401h1v1h-1zM219 403h1v1h-1zM219 418h1v1h-1zM219 422h1v1h-1zM219 438h1v1h-1zM219 442h1v1h-1zM219 455h1v1h-1zM219 461h1v1h-1zM219 475h1v1h-1zM219 481h1v1h-1zM220 304h1v1h-1zM220 308h1v1h-1zM220 324h1v1h-1zM220 328h1v1h-1zM220 342h1v1h-1zM220 346h1v1h-1zM220 362h1v1h-1zM220 366h1v1h-1zM220 380h1v1h-1zM220 384h1v1h-1zM220 400h1v1h-1zM220 404h1v1h-1zM220 417h1v1h-1zM220 423h1v1h-1zM220 437h1v1h-1zM220 443h1v1h-1zM220 462h1v1h-1zM220 474h1v1h-1zM220 482h1v1h-1zM221 303h1v1h-1zM221 309h1v1h-1zM221 323h1v1h-1zM221 329h1v1h-1zM221 341h1v1h-1zM221 347h1v1h-1zM221 361h1v1h-1zM221 367h1v1h-1zM221 379h1v1h-1zM221 385h1v1h-1zM221 399h1v1h-1zM221 405h1v1h-1zM221 424h1v1h-1zM221 436h1v1h-1zM221 444h1v1h-1zM221 463h1v1h-1zM221 473h1v1h-1zM221 483h1v1h-1zM222 310h1v1h-1zM222 322h1v1h-1zM222 348h1v1h-1zM222 360h1v1h-1zM222 386h1v1h-1zM222 398h1v1h-1zM222 406h1v1h-1zM222 425h1v1h-1zM222 435h1v1h-1zM222 445h1v1h-1zM222 453h1v1h-1zM222 464h1v1h-1zM222 472h1v1h-1zM222 484h1v1h-1zM223 311h1v1h-1zM223 321h1v1h-1zM223 349h1v1h-1zM223 359h1v1h-1zM223 387h1v1h-1zM223 397h1v1h-1zM223 407h1v1h-1zM223 415h1v1h-1zM223 426h1v1h-1zM223 434h1v1h-1zM223 446h1v1h-1zM223 452h1v1h-1zM223 465h1v1h-1zM223 471h1v1h-1zM223 485h1v1h-1zM224 301h1v1h-1zM224 312h1v1h-1zM224 320h1v1h-1zM224 331h1v1h-1zM224 339h1v1h-1zM224 350h1v1h-1zM224 358h1v1h-1zM224 369h1v1h-1zM224 377h1v1h-1zM224 388h1v1h-1zM224 396h1v1h-1zM224 408h1v1h-1zM224 414h1v1h-1zM224 427h1v1h-1zM224 433h1v1h-1zM224 447h1v1h-1zM224 451h1v1h-1zM224 466h1v1h-1zM224 470h1v1h-1zM224 486h1v1h-1zM225 300h1v1h-1zM225 313h1v1h-1zM225 319h1v1h-1zM225 332h1v1h-1zM225 338h1v1h-1zM225 351h1v1h-1zM225 357h1v1h-1zM225 370h1v1h-1zM225 376h1v1h-1zM225 389h1v1h-1zM225 395h1v1h-1zM225 409h1v1h-1zM225 413h1v1h-1zM225 428h1v1h-1zM225 432h1v1h-1zM225 448h1v1h-1zM225 450h1v1h-1zM225 467h1v1h-1zM225 469h1v1h-1zM225 487h1v1h-1zM226 299h1v1h-1zM226 314h1v1h-1zM226 318h1v1h-1zM226 333h1v1h-1zM226 337h1v1h-1zM226 352h1v1h-1zM226 356h1v1h-1zM226 371h1v1h-1zM226 375h1v1h-1zM226 390h1v1h-1zM226 394h1v1h-1zM226 410h1v1h-1zM226 412h1v1h-1zM226 429h1v1h-1zM226 431h1v1h-1zM226 449h1v1h-1zM226 468h1v1h-1zM226 486h1v1h-1zM227 298h1v1h-1zM227 315h1v1h-1zM227 317h1v1h-1zM227 334h1v1h-1zM227 336h1v1h-1zM227 353h1v1h-1zM227 355h1v1h-1zM227 372h1v1h-1zM227 374h1v1h-1zM227 391h1v1h-1zM227 393h1v1h-1zM227 411h1v1h-1zM227 430h1v1h-1zM227 448h1v1h-1zM227 450h1v1h-1zM227 467h1v1h-1zM227 469h1v1h-1zM227 485h1v1h-1zM228 297h1v1h-1zM228 316h1v1h-1zM228 335h1v1h-1zM228 354h1v1h-1zM228 373h1v1h-1zM228 392h1v1h-1zM228 410h1v1h-1zM228 412h1v1h-1zM228 429h1v1h-1zM228 431h1v1h-1zM228 447h1v1h-1zM228 451h1v1h-1zM228 466h1v1h-1zM228 470h1v1h-1zM228 484h1v1h-1zM229 298h1v1h-1zM229 315h1v1h-1zM229 317h1v1h-1zM229 334h1v1h-1zM229 336h1v1h-1zM229 353h1v1h-1zM229 355h1v1h-1zM229 372h1v1h-1zM229 374h1v1h-1zM229 391h1v1h-1zM229 393h1v1h-1zM229 409h1v1h-1zM229 413h1v1h-1zM229 428h1v1h-1zM229 432h1v1h-1zM229 446h1v1h-1zM229 452h1v1h-1zM229 465h1v1h-1zM229 471h1v1h-1zM229 483h1v1h-1zM230 299h1v1h-1zM230 314h1v1h-1zM230 318h1v1h-1zM230 333h1v1h-1zM230 337h1v1h-1zM230 352h1v1h-1zM230 356h1v1h-1zM230 371h1v1h-1zM230 375h1v1h-1zM230 390h1v1h-1zM230 394h1v1h-1zM230 408h1v1h-1zM230 414h1v1h-1zM230 427h1v1h-1zM230 433h1v1h-1zM230 445h1v1h-1zM230 453h1v1h-1zM230 464h1v1h-1zM230 472h1v1h-1zM231 300h1v1h-1zM231 313h1v1h-1zM231 319h1v1h-1zM231 332h1v1h-1zM231 338h1v1h-1zM231 351h1v1h-1zM231 357h1v1h-1zM231 370h1v1h-1zM231 376h1v1h-1zM231 389h1v1h-1zM231 395h1v1h-1zM231 407h1v1h-1zM231 415h1v1h-1zM231 426h1v1h-1zM231 434h1v1h-1zM231 463h1v1h-1zM231 473h1v2h-1zM232 301h1v1h-1zM232 312h1v1h-1zM232 320h1v1h-1zM232 331h1v1h-1zM232 339h1v1h-1zM232 350h1v1h-1zM232 358h1v1h-1zM232 369h1v1h-1zM232 377h1v1h-1zM232 388h1v1h-1zM232 396h1v1h-1zM232 425h1v1h-1zM232 435h1v2h-1zM232 462h1v1h-1zM232 475h1v1h-1zM232 481h1v1h-1zM233 311h1v1h-1zM233 321h1v1h-1zM233 349h1v1h-1zM233 359h1v1h-1zM233 387h1v1h-1zM233 397h1v2h-1zM233 424h1v1h-1zM233 437h1v1h-1zM233 443h1v1h-1zM233 455h1v1h-1zM233 461h1v1h-1zM233 476h1v1h-1zM233 480h1v1h-1zM234 310h1v1h-1zM234 322h1v1h-1zM234 348h1v1h-1zM234 360h1v1h-1zM234 386h1v1h-1zM234 399h1v1h-1zM234 405h1v1h-1zM234 417h1v1h-1zM234 423h1v1h-1zM234 438h1v1h-1zM234 442h1v1h-1zM234 456h1v1h-1zM234 460h1v1h-1zM234 477h1v1h-1zM234 479h1v1h-1zM235 303h1v1h-1zM235 309h1v1h-1zM235 323h1v1h-1zM235 329h1v1h-1zM235 341h1v1h-1zM235 347h1v1h-1zM235 361h1v1h-1zM235 367h1v1h-1zM235 379h1v1h-1zM235 385h1v1h-1zM235 400h1v1h-1zM235 404h1v1h-1zM235 418h1v1h-1zM235 422h1v1h-1zM235 439h1v1h-1zM235 441h1v1h-1zM235 457h1v1h-1zM235 459h1v1h-1zM235 478h1v1h-1zM236 304h1v1h-1zM236 308h1v1h-1zM236 324h1v1h-1zM236 328h1v1h-1zM236 342h1v1h-1zM236 346h1v1h-1zM236 362h1v1h-1zM236 366h1v1h-1zM236 380h1v1h-1zM236 384h1v1h-1zM236 401h1v1h-1zM236 403h1v1h-1zM236 419h1v1h-1zM236 421h1v1h-1zM236 440h1v1h-1zM236 458h1v1h-1zM236 477h1v1h-1zM236 479h1v1h-1zM237 305h1v1h-1zM237 307h1v1h-1zM237 325h1v1h-1zM237 327h1v1h-1zM237 343h1v1h-1zM237 345h1v1h-1zM237 363h1v1h-1zM237 365h1v1h-1zM237 381h1v1h-1zM237 383h1v1h-1zM237 402h1v1h-1zM237 420h1v1h-1zM237 439h1v1h-1zM237 441h1v1h-1zM237 457h1v1h-1zM237 459h1v1h-1zM237 476h1v1h-1zM237 480h1v1h-1zM238 306h1v1h-1zM238 326h1v1h-1zM238 344h1v1h-1zM238 364h1v1h-1zM238 382h1v1h-1zM238 401h1v1h-1zM238 403h1v1h-1zM238 419h1v1h-1zM238 421h1v1h-1zM238 438h1v1h-1zM238 442h1v1h-1zM238 456h1v1h-1zM238 460h1v1h-1zM238 475h1v1h-1zM238 481h1v1h-1zM239 305h1v1h-1zM239 307h1v1h-1zM239 325h1v1h-1zM239 327h1v1h-1zM239 343h1v1h-1zM239 345h1v1h-1zM239 363h1v1h-1zM239 365h1v1h-1zM239 381h1v1h-1zM239 383h1v1h-1zM239 400h1v1h-1zM239 404h1v1h-1zM239 418h1v1h-1zM239 422h1v1h-1zM239 437h1v1h-1zM239 443h1v1h-1zM239 455h1v1h-1zM239 461h1v1h-1zM239 474h1v1h-1zM239 482h1v1h-1zM240 304h1v1h-1zM240 308h1v1h-1zM240 324h1v1h-1zM240 328h1v1h-1zM240 342h1v1h-1zM240 346h1v1h-1zM240 362h1v1h-1zM240 366h1v1h-1zM240 380h1v1h-1zM240 384h1v1h-1zM240 399h1v1h-1zM240 405h1v1h-1zM240 417h1v1h-1zM240 423h1v1h-1zM240 436h1v1h-1zM240 444h1v1h-1zM240 454h1v1h-1zM240 462h1v2h-1zM240 473h1v1h-1zM240 483h1v1h-1zM241 303h1v1h-1zM241 309h1v1h-1zM241 323h1v1h-1zM241 329h1v1h-1zM241 341h1v1h-1zM241 347h1v1h-1zM241 361h1v1h-1zM241 367h1v1h-1zM241 379h1v1h-1zM241 385h1v1h-1zM241 398h1v1h-1zM241 424h1v2h-1zM241 435h1v1h-1zM241 445h1v1h-1zM241 453h1v1h-1zM241 464h1v1h-1zM241 472h1v1h-1zM241 484h1v1h-1zM242 302h1v1h-1zM242 310h1v2h-1zM242 321h1v2h-1zM242 330h1v1h-1zM242 340h1v1h-1zM242 348h1v2h-1zM242 359h1v2h-1zM242 368h1v1h-1zM242 378h1v1h-1zM242 386h1v2h-1zM242 397h1v1h-1zM242 426h1v1h-1zM242 434h1v1h-1zM242 446h1v1h-1zM242 452h1v1h-1zM242 465h1v1h-1zM242 471h1v1h-1zM242 485h1v1h-1zM243 301h1v1h-1zM243 312h1v1h-1zM243 320h1v1h-1zM243 331h1v1h-1zM243 339h1v1h-1zM243 350h1v1h-1zM243 358h1v1h-1zM243 369h1v1h-1zM243 377h1v1h-1zM243 388h1v1h-1zM243 396h1v1h-1zM243 407h1v1h-1zM243 415h1v1h-1zM243 427h1v1h-1zM243 433h1v1h-1zM243 447h1v1h-1zM243 451h1v1h-1zM243 466h1v1h-1zM243 470h1v1h-1zM243 486h1v1h-1zM244 300h1v1h-1zM244 313h1v1h-1zM244 319h1v1h-1zM244 332h1v1h-1zM244 338h1v1h-1zM244 351h1v1h-1zM244 357h1v1h-1zM244 370h1v1h-1zM244 376h1v1h-1zM244 389h1v1h-1zM244 395h1v1h-1zM244 408h1v1h-1zM244 414h1v1h-1zM244 428h1v1h-1zM244 432h1v1h-1zM244 448h1v1h-1zM244 450h1v1h-1zM244 467h1v1h-1zM244 469h1v1h-1zM244 487h1v1h-1zM245 299h1v1h-1zM245 314h1v1h-1zM245 318h1v1h-1zM245 333h1v1h-1zM245 337h1v1h-1zM245 352h1v1h-1zM245 356h1v1h-1zM245 371h1v1h-1zM245 375h1v1h-1zM245 390h1v1h-1zM245 394h1v1h-1zM245 409h1v1h-1zM245 413h1v1h-1zM245 429h1v1h-1zM245 431h1v1h-1zM245 449h1v1h-1zM245 468h1v1h-1zM245 486h1v1h-1zM246 298h1v1h-1zM246 315h1v1h-1zM246 317h1v1h-1zM246 334h1v1h-1zM246 336h1v1h-1zM246 353h1v1h-1zM246 355h1v1h-1zM246 372h1v1h-1zM246 374h1v1h-1zM246 391h1v1h-1zM246 393h1v1h-1zM246 410h1v1h-1zM246 412h1v1h-1zM246 430h1v1h-1zM246 448h1v1h-1zM246 450h1v1h-1zM246 467h1v1h-1zM246 469h1v1h-1zM246 485h1v1h-1zM247 297h1v1h-1zM247 316h1v1h-1zM247 335h1v1h-1zM247 354h1v1h-1zM247 373h1v1h-1zM247 392h1v1h-1zM247 411h1v1h-1zM247 429h1v1h-1zM247 431h1v1h-1zM247 447h1v1h-1zM247 451h1v1h-1zM247 466h1v1h-1zM247 470h1v1h-1zM247 484h1v1h-1zM248 298h1v1h-1zM248 315h1v1h-1zM248 317h1v1h-1zM248 334h1v1h-1zM248 336h1v1h-1zM248 353h1v1h-1zM248 355h1v1h-1zM248 372h1v1h-1zM248 374h1v1h-1zM248 391h1v1h-1zM248 393h1v1h-1zM248 410h1v1h-1zM248 412h1v1h-1zM248 428h1v1h-1zM248 432h1v1h-1zM248 446h1v1h-1zM248 452h1v1h-1zM248 465h1v1h-1zM248 471h1v1h-1zM248 483h1v1h-1zM249 299h1v1h-1zM249 314h1v1h-1zM249 318h1v1h-1zM249 333h1v1h-1zM249 337h1v1h-1zM249 352h1v1h-1zM249 356h1v1h-1zM249 371h1v1h-1zM249 375h1v1h-1zM249 390h1v1h-1zM249 394h1v1h-1zM249 409h1v1h-1zM249 413h1v1h-1zM249 427h1v1h-1zM249 433h1v1h-1zM249 445h1v1h-1zM249 453h1v1h-1zM249 464h1v1h-1zM249 472h1v1h-1zM250 300h1v1h-1zM250 313h1v1h-1zM250 319h1v1h-1zM250 332h1v1h-1zM250 338h1v1h-1zM250 351h1v1h-1zM250 357h1v1h-1zM250 370h1v1h-1zM250 376h1v1h-1zM250 389h1v1h-1zM250 395h1v1h-1zM250 408h1v1h-1zM250 414h1v1h-1zM250 426h1v1h-1zM250 434h1v1h-1zM250 463h1v1h-1zM250 473h1v2h-1zM251 301h1v1h-1zM251 312h1v1h-1zM251 320h1v1h-1zM251 331h1v1h-1zM251 339h1v1h-1zM251 350h1v1h-1zM251 358h1v1h-1zM251 369h1v1h-1zM251 377h1v1h-1zM251 388h1v1h-1zM251 396h1v1h-1zM251 407h1v1h-1zM251 415h1v1h-1zM251 425h1v1h-1zM251 435h1v2h-1zM251 462h1v1h-1zM251 475h1v1h-1zM251 481h1v1h-1zM252 302h1v1h-1zM252 310h1v2h-1zM252 321h1v2h-1zM252 330h1v1h-1zM252 340h1v1h-1zM252 348h1v2h-1zM252 359h1v2h-1zM252 368h1v1h-1zM252 378h1v1h-1zM252 386h1v2h-1zM252 397h1v2h-1zM252 406h1v1h-1zM252 416h1v1h-1zM252 424h1v1h-1zM252 437h1v1h-1zM252 443h1v1h-1zM252 455h1v1h-1zM252 461h1v1h-1zM252 476h1v1h-1zM252 480h1v1h-1zM253 303h1v1h-1zM253 309h1v1h-1zM253 323h1v1h-1zM253 329h1v1h-1zM253 341h1v1h-1zM253 347h1v1h-1zM253 361h1v1h-1zM253 367h1v1h-1zM253 379h1v1h-1zM253 385h1v1h-1zM253 399h1v1h-1zM253 405h1v1h-1zM253 417h1v1h-1zM253 423h1v1h-1zM253 438h1v1h-1zM253 442h1v1h-1zM253 456h1v1h-1zM253 460h1v1h-1zM253 477h1v1h-1zM253 479h1v1h-1zM254 304h1v1h-1zM254 308h1v1h-1zM254 324h1v1h-1zM254 328h1v1h-1zM254 342h1v1h-1zM254 346h1v1h-1zM254 362h1v1h-1zM254 366h1v1h-1zM254 380h1v1h-1zM254 384h1v1h-1zM254 400h1v1h-1zM254 404h1v1h-1zM254 418h1v1h-1zM254 422h1v1h-1zM254 439h1v1h-1zM254 441h1v1h-1zM254 457h1v1h-1zM254 459h1v1h-1zM254 478h1v1h-1zM255 305h1v1h-1zM255 307h1v1h-1zM255 325h1v1h-1zM255 327h1v1h-1zM255 343h1v1h-1zM255 345h1v1h-1zM255 363h1v1h-1zM255 365h1v1h-1zM255 381h1v1h-1zM255 383h1v1h-1zM255 401h1v1h-1zM255 403h1v1h-1zM255 419h1v1h-1zM255 421h1v1h-1zM255 440h1v1h-1zM255 458h1v1h-1zM255 477h1v1h-1zM255 479h1v1h-1zM256 306h1v1h-1zM256 326h1v1h-1zM256 344h1v1h-1zM256 364h1v1h-1zM256 382h1v1h-1zM256 402h1v1h-1zM256 420h1v1h-1zM256 439h1v1h-1zM256 441h1v1h-1zM256 457h1v1h-1zM256 459h1v1h-1zM256 476h1v1h-1zM256 480h1v1h-1zM257 305h1v1h-1zM257 307h1v1h-1zM257 325h1v1h-1zM257 327h1v1h-1zM257 343h1v1h-1zM257 345h1v1h-1zM257 363h1v1h-1zM257 365h1v1h-1zM257 381h1v1h-1zM257 383h1v1h-1zM257 401h1v1h-1zM257 403h1v1h-1zM257 419h1v1h-1zM257 421h1v1h-1zM257 438h1v1h-1zM257 442h1v1h-1zM257 456h1v1h-1zM257 460h1v1h-1zM257 475h1v1h-1zM257 481h1v1h-1zM258 304h1v1h-1zM258 308h1v1h-1zM258 324h1v1h-1zM258 328h1v1h-1zM258 342h1v1h-1zM258 346h1v1h-1zM258 362h1v1h-1zM258 366h1v1h-1zM258 380h1v1h-1zM258 384h1v1h-1zM258 400h1v1h-1zM258 404h1v1h-1zM258 418h1v1h-1zM258 422h1v1h-1zM258 437h1v1h-1zM258 443h1v1h-1zM258 455h1v1h-1zM258 461h1v1h-1zM258 474h1v1h-1zM258 482h1v1h-1zM259 303h1v1h-1zM259 309h1v1h-1zM259 323h1v1h-1zM259 329h1v1h-1zM259 341h1v1h-1zM259 347h1v1h-1zM259 361h1v1h-1zM259 367h1v1h-1zM259 379h1v1h-1zM259 385h1v1h-1zM259 399h1v1h-1zM259 405h1v1h-1zM259 417h1v1h-1zM259 423h1v1h-1zM259 436h1v1h-1zM259 462h1v2h-1zM259 473h1v1h-1zM259 483h1v1h-1zM260 310h1v1h-1zM260 322h1v1h-1zM260 348h1v1h-1zM260 360h1v1h-1zM260 386h1v1h-1zM260 398h1v1h-1zM260 424h1v2h-1zM260 435h1v1h-1zM260 464h1v1h-1zM260 472h1v1h-1zM260 484h1v1h-1zM261 311h1v1h-1zM261 321h1v1h-1zM261 349h1v1h-1zM261 359h1v1h-1zM261 387h1v1h-1zM261 397h1v1h-1zM261 426h1v1h-1zM261 434h1v1h-1zM261 445h1v1h-1zM261 453h1v1h-1zM261 465h1v1h-1zM261 471h1v1h-1zM261 485h1v1h-1zM262 301h1v1h-1zM262 312h1v1h-1zM262 320h1v1h-1zM262 331h1v1h-1zM262 339h1v1h-1zM262 350h1v1h-1zM262 358h1v1h-1zM262 369h1v1h-1zM262 377h1v1h-1zM262 388h1v1h-1zM262 396h1v1h-1zM262 407h1v1h-1zM262 415h1v1h-1zM262 427h1v1h-1zM262 433h1v1h-1zM262 446h1v1h-1zM262 452h1v1h-1zM262 466h1v1h-1zM262 470h1v1h-1zM262 486h1v1h-1zM263 300h1v1h-1zM263 313h1v1h-1zM263 319h1v1h-1zM263 332h1v1h-1zM263 338h1v1h-1zM263 351h1v1h-1zM263 357h1v1h-1zM263 370h1v1h-1zM263 376h1v1h-1zM263 389h1v1h-1zM263 395h1v1h-1zM263 408h1v1h-1zM263 414h1v1h-1zM263 428h1v1h-1zM263 432h1v1h-1zM263 447h1v1h-1zM263 451h1v1h-1zM263 467h1v1h-1zM263 469h1v1h-1zM263 487h1v1h-1zM264 299h1v1h-1zM264 314h1v1h-1zM264 318h1v1h-1zM264 333h1v1h-1zM264 337h1v1h-1zM264 352h1v1h-1zM264 356h1v1h-1zM264 371h1v1h-1zM264 375h1v1h-1zM264 390h1v1h-1zM264 394h1v1h-1zM264 409h1v1h-1zM264 413h1v1h-1zM264 429h1v1h-1zM264 431h1v1h-1zM264 448h1v1h-1zM264 450h1v1h-1zM264 468h1v1h-1zM264 486h1v1h-1zM265 298h1v1h-1zM265 315h1v1h-1zM265 317h1v1h-1zM265 334h1v1h-1zM265 336h1v1h-1zM265 353h1v1h-1zM265 355h1v1h-1zM265 372h1v1h-1zM265 374h1v1h-1zM265 391h1v1h-1zM265 393h1v1h-1zM265 410h1v1h-1zM265 412h1v1h-1zM265 430h1v1h-1zM265 449h1v1h-1zM265 467h1v1h-1zM265 469h1v1h-1zM265 485h1v1h-1zM266 297h1v1h-1zM266 316h1v1h-1zM266 335h1v1h-1zM266 354h1v1h-1zM266 373h1v1h-1zM266 392h1v1h-1zM266 411h1v1h-1zM266 429h1v1h-1zM266 431h1v1h-1zM266 448h1v1h-1zM266 450h1v1h-1zM266 466h1v1h-1zM266 470h1v1h-1zM266 484h1v1h-1zM267 298h1v1h-1zM267 315h1v1h-1zM267 317h1v1h-1zM267 334h1v1h-1zM267 336h1v1h-1zM267 353h1v1h-1zM267 355h1v1h-1zM267 372h1v1h-1zM267 374h1v1h-1zM267 391h1v1h-1zM267 393h1v1h-1zM267 410h1v1h-1zM267 412h1v1h-1zM267 428h1v1h-1zM267 432h1v1h-1zM267 447h1v1h-1zM267 451h1v1h-1zM267 465h1v1h-1zM267 471h1v1h-1zM267 483h1v1h-1zM268 299h1v1h-1zM268 314h1v1h-1zM268 318h1v1h-1zM268 333h1v1h-1zM268 337h1v1h-1zM268 352h1v1h-1zM268 356h1v1h-1zM268 371h1v1h-1zM268 375h1v1h-1zM268 390h1v1h-1zM268 394h1v1h-1zM268 409h1v1h-1zM268 413h1v1h-1zM268 427h1v1h-1zM268 433h1v1h-1zM268 446h1v1h-1zM268 452h1v1h-1zM268 464h1v1h-1zM268 472h1v1h-1zM269 300h1v1h-1zM269 313h1v1h-1zM269 319h1v1h-1zM269 332h1v1h-1zM269 338h1v1h-1zM269 351h1v1h-1zM269 357h1v1h-1zM269 370h1v1h-1zM269 376h1v1h-1zM269 389h1v1h-1zM269 395h1v1h-1zM269 408h1v1h-1zM269 414h1v1h-1zM269 426h1v1h-1zM269 434h1v1h-1zM269 445h1v1h-1zM269 453h1v1h-1zM269 463h1v1h-1zM269 473h1v2h-1zM270 301h1v1h-1zM270 312h1v1h-1zM270 320h1v1h-1zM270 331h1v1h-1zM270 339h1v1h-1zM270 350h1v1h-1zM270 358h1v1h-1zM270 369h1v1h-1zM270 377h1v1h-1zM270 388h1v1h-1zM270 396h1v1h-1zM270 407h1v1h-1zM270 415h1v1h-1zM270 425h1v1h-1zM270 435h1v1h-1zM270 454h1v1h-1zM270 462h1v1h-1zM270 475h1v1h-1zM270 481h1v1h-1zM271 311h1v1h-1zM271 321h1v1h-1zM271 349h1v1h-1zM271 359h1v1h-1zM271 387h1v1h-1zM271 397h1v1h-1zM271 416h1v1h-1zM271 424h1v1h-1zM271 436h1v1h-1zM271 455h1v1h-1zM271 461h1v1h-1zM271 476h1v1h-1zM271 480h1v1h-1zM272 310h1v1h-1zM272 322h1v1h-1zM272 348h1v1h-1zM272 360h1v1h-1zM272 386h1v1h-1zM272 398h1v1h-1zM272 417h1v1h-1zM272 423h1v1h-1zM272 437h1v1h-1zM272 443h1v1h-1zM272 456h1v1h-1zM272 460h1v1h-1zM272 477h1v1h-1zM272 479h1v1h-1zM273 303h1v1h-1zM273 309h1v1h-1zM273 323h1v1h-1zM273 329h1v1h-1zM273 341h1v1h-1zM273 347h1v1h-1zM273 361h1v1h-1zM273 367h1v1h-1zM273 379h1v1h-1zM273 385h1v1h-1zM273 399h1v1h-1zM273 405h1v1h-1zM273 418h1v1h-1zM273 422h1v1h-1zM273 438h1v1h-1zM273 442h1v1h-1zM273 457h1v1h-1zM273 459h1v1h-1zM273 478h1v1h-1zM274 304h1v1h-1zM274 308h1v1h-1zM274 324h1v1h-1zM274 328h1v1h-1zM274 342h1v1h-1zM274 346h1v1h-1zM274 362h1v1h-1zM274 366h1v1h-1zM274 380h1v1h-1zM274 384h1v1h-1zM274 400h1v1h-1zM274 404h1v1h-1zM274 419h1v1h-1zM274 421h1v1h-1zM274 439h1v1h-1zM274 441h1v1h-1zM274 458h1v1h-1zM274 477h1v1h-1zM274 479h1v1h-1zM275 305h1v1h-1zM275 307h1v1h-1zM275 325h1v1h-1zM275 327h1v1h-1zM275 343h1v1h-1zM275 345h1v1h-1zM275 363h1v1h-1zM275 365h1v1h-1zM275 381h1v1h-1zM275 383h1v1h-1zM275 401h1v1h-1zM275 403h1v1h-1zM275 420h1v1h-1zM275 440h1v1h-1zM275 457h1v1h-1zM275 459h1v1h-1zM275 476h1v1h-1zM275 480h1v1h-1zM276 306h1v1h-1zM276 326h1v1h-1zM276 344h1v1h-1zM276 364h1v1h-1zM276 382h1v1h-1zM276 402h1v1h-1zM276 419h1v1h-1zM276 421h1v1h-1zM276 439h1v1h-1zM276 441h1v1h-1zM276 456h1v1h-1zM276 460h1v1h-1zM276 475h1v1h-1zM276 481h1v1h-1zM277 305h1v1h-1zM277 307h1v1h-1zM277 325h1v1h-1zM277 327h1v1h-1zM277 343h1v1h-1zM277 345h1v1h-1zM277 363h1v1h-1zM277 365h1v1h-1zM277 381h1v1h-1zM277 383h1v1h-1zM277 401h1v1h-1zM277 403h1v1h-1zM277 418h1v1h-1zM277 422h1v1h-1zM277 438h1v1h-1zM277 442h1v1h-1zM277 455h1v1h-1zM277 461h1v1h-1zM277 474h1v1h-1zM277 482h1v1h-1zM278 304h1v1h-1zM278 308h1v1h-1zM278 324h1v1h-1zM278 328h1v1h-1zM278 342h1v1h-1zM278 346h1v1h-1zM278 362h1v1h-1zM278 366h1v1h-1zM278 380h1v1h-1zM278 384h1v1h-1zM278 400h1v1h-1zM278 404h1v1h-1zM278 417h1v1h-1zM278 423h1v1h-1zM278 437h1v1h-1zM278 443h1v1h-1zM278 462h1v2h-1zM278 473h1v1h-1zM278 483h1v1h-1zM279 303h1v1h-1zM279 309h1v1h-1zM279 323h1v1h-1zM279 329h1v1h-1zM279 341h1v1h-1zM279 347h1v1h-1zM279 361h1v1h-1zM279 367h1v1h-1zM279 379h1v1h-1zM279 385h1v1h-1zM279 399h1v1h-1zM279 405h1v1h-1zM279 424h1v1h-1zM279 436h1v1h-1zM279 444h1v1h-1zM279 464h1v1h-1zM279 472h1v1h-1zM279 484h1v1h-1zM280 310h1v1h-1zM280 322h1v1h-1zM280 348h1v1h-1zM280 360h1v1h-1zM280 386h1v1h-1zM280 398h1v1h-1zM280 406h1v1h-1zM280 425h1v1h-1zM280 435h1v1h-1zM280 445h1v1h-1zM280 453h1v1h-1zM280 465h1v1h-1zM280 471h1v1h-1zM280 485h1v1h-1zM281 311h1v1h-1zM281 321h1v1h-1zM281 349h1v1h-1zM281 359h1v1h-1zM281 387h1v1h-1zM281 397h1v1h-1zM281 407h1v1h-1zM281 415h1v1h-1zM281 426h1v1h-1zM281 434h1v1h-1zM281 446h1v1h-1zM281 452h1v1h-1zM281 466h1v1h-1zM281 470h1v1h-1zM281 486h1v1h-1zM282 301h1v1h-1zM282 312h1v1h-1zM282 320h1v1h-1zM282 331h1v1h-1zM282 339h1v1h-1zM282 350h1v1h-1zM282 358h1v1h-1zM282 369h1v1h-1zM282 377h1v1h-1zM282 388h1v1h-1zM282 396h1v1h-1zM282 408h1v1h-1zM282 414h1v1h-1zM282 427h1v1h-1zM282 433h1v1h-1zM282 447h1v1h-1zM282 451h1v1h-1zM282 467h1v1h-1zM282 469h1v1h-1zM282 487h1v1h-1zM283 300h1v1h-1zM283 313h1v1h-1zM283 319h1v1h-1zM283 332h1v1h-1zM283 338h1v1h-1zM283 351h1v1h-1zM283 357h1v1h-1zM283 370h1v1h-1zM283 376h1v1h-1zM283 389h1v1h-1zM283 395h1v1h-1zM283 409h1v1h-1zM283 413h1v1h-1zM283 428h1v1h-1zM283 432h1v1h-1zM283 448h1v1h-1zM283 450h1v1h-1zM283 468h1v1h-1zM284 299h1v1h-1zM284 314h1v1h-1zM284 318h1v1h-1zM284 333h1v1h-1zM284 337h1v1h-1zM284 352h1v1h-1zM284 356h1v1h-1zM284 371h1v1h-1zM284 375h1v1h-1zM284 390h1v1h-1zM284 394h1v1h-1zM284 410h1v1h-1zM284 412h1v1h-1zM284 429h1v1h-1zM284 431h1v1h-1zM284 449h1v1h-1zM285 298h1v1h-1zM285 315h1v1h-1zM285 317h1v1h-1zM285 334h1v1h-1zM285 336h1v1h-1zM285 353h1v1h-1zM285 355h1v1h-1zM285 372h1v1h-1zM285 374h1v1h-1zM285 391h1v1h-1zM285 393h1v1h-1zM285 411h1v1h-1zM285 430h1v1h-1zM286 297h1v1h-1zM286 316h1v1h-1zM286 335h1v1h-1zM286 354h1v1h-1zM286 373h1v1h-1zM286 392h1v1h-1zM287 336h1v1h-1zM287 353h1v1h-1zM287 355h1v1h-1zM287 372h1v1h-1zM287 374h1v1h-1zM287 391h1v1h-1zM288 337h1v1h-1zM288 352h1v1h-1zM288 356h1v1h-1zM288 371h1v1h-1zM288 375h1v1h-1zM288 390h1v1h-1zM289 338h1v1h-1zM289 351h1v1h-1zM289 357h1v1h-1zM289 370h1v1h-1zM289 376h1v1h-1zM289 389h1v1h-1zM290 339h1v1h-1zM290 350h1v1h-1zM290 358h1v1h-1zM290 369h1v1h-1zM290 377h1v1h-1zM290 388h1v1h-1zM291 349h1v1h-1zM291 359h1v1h-1zM291 387h1v1h-1zM292 348h1v1h-1zM292 360h1v1h-1zM292 386h1v1h-1zM293 341h1v1h-1zM293 347h1v1h-1zM293 361h1v1h-1zM293 367h1v1h-1zM293 379h1v1h-1zM293 385h1v1h-1zM294 342h1v1h-1zM294 346h1v1h-1zM294 362h1v1h-1zM294 366h1v1h-1zM294 380h1v1h-1zM294 384h1v1h-1zM295 343h1v1h-1zM295 345h1v1h-1zM295 363h1v1h-1zM295 365h1v1h-1zM295 381h1v1h-1zM295 383h1v1h-1zM296 344h1v1h-1zM296 364h1v1h-1zM296 382h1v1h-1zM297 343h1v1h-1zM297 345h1v1h-1zM297 363h1v1h-1zM297 365h1v1h-1zM297 381h1v1h-1zM297 383h1v1h-1zM298 342h1v1h-1zM298 346h1v1h-1zM298 362h1v1h-1zM298 366h1v1h-1zM298 380h1v1h-1zM298 384h1v1h-1zM299 341h1v1h-1zM299 347h1v1h-1zM299 361h1v1h-1zM299 367h1v1h-1zM299 379h1v1h-1zM299 385h1v1h-1zM300 340h1v1h-1zM300 348h1v2h-1zM300 359h1v2h-1zM300 368h1v1h-1zM300 378h1v1h-1zM300 386h1v2h-1zM301 339h1v1h-1zM301 350h1v1h-1zM301 358h1v1h-1zM301 369h1v1h-1zM301 377h1v1h-1zM301 388h1v1h-1zM302 338h1v1h-1zM302 351h1v1h-1zM302 357h1v1h-1zM302 370h1v1h-1zM302 376h1v1h-1zM302 389h1v1h-1zM303 337h1v1h-1zM303 352h1v1h-1zM303 356h1v1h-1zM303 371h1v1h-1zM303 375h1v1h-1zM303 390h1v1h-1zM304 336h1v1h-1zM304 353h1v1h-1zM304 355h1v1h-1zM304 372h1v1h-1zM304 374h1v1h-1zM304 391h1v1h-1zM305 335h1v1h-1zM305 354h1v1h-1zM305 373h1v1h-1zM305 392h1v1h-1zM306 336h1v1h-1zM306 353h1v1h-1zM306 355h1v1h-1zM306 372h1v1h-1zM306 374h1v1h-1zM306 391h1v1h-1zM307 337h1v1h-1zM307 352h1v1h-1zM307 356h1v1h-1zM307 371h1v1h-1zM307 375h1v1h-1zM307 390h1v1h-1zM308 338h1v1h-1zM308 351h1v1h-1zM308 357h1v1h-1zM308 370h1v1h-1zM308 376h1v1h-1zM308 389h1v1h-1zM309 339h1v1h-1zM309 350h1v1h-1zM309 358h1v1h-1zM309 369h1v1h-1zM309 377h1v1h-1zM309 388h1v1h-1zM310 349h1v1h-1zM310 359h1v1h-1zM310 387h1v1h-1zM311 348h1v1h-1zM311 360h1v1h-1zM311 386h1v1h-1zM312 341h1v1h-1zM312 347h1v1h-1zM312 361h1v1h-1zM312 367h1v1h-1zM312 379h1v1h-1zM312 385h1v1h-1zM313 342h1v1h-1zM313 346h1v1h-1zM313 362h1v1h-1zM313 366h1v1h-1zM313 380h1v1h-1zM313 384h1v1h-1zM314 343h1v1h-1zM314 345h1v1h-1zM314 363h1v1h-1zM314 365h1v1h-1zM314 381h1v1h-1zM314 383h1v1h-1zM315 344h1v1h-1zM315 364h1v1h-1zM315 382h1v1h-1zM316 343h1v1h-1zM316 345h1v1h-1zM316 363h1v1h-1zM316 365h1v1h-1zM316 381h1v1h-1zM316 383h1v1h-1zM317 342h1v1h-1zM317 346h1v1h-1zM317 362h1v1h-1zM317 366h1v1h-1zM317 380h1v1h-1zM317 384h1v1h-1zM318 341h1v1h-1zM318 347h1v1h-1zM318 361h1v1h-1zM318 367h1v1h-1zM318 379h1v1h-1zM318 385h1v1h-1zM319 348h1v1h-1zM319 360h1v1h-1zM319 386h1v1h-1zM320 349h1v1h-1zM320 359h1v1h-1zM320 387h1v1h-1zM321 339h1v1h-1zM321 350h1v1h-1zM321 358h1v1h-1zM321 369h1v1h-1zM321 377h1v1h-1zM321 388h1v1h-1zM322 338h1v1h-1zM322 351h1v1h-1zM322 357h1v1h-1zM322 370h1v1h-1zM322 376h1v1h-1zM322 389h1v1h-1zM323 337h1v1h-1zM323 352h1v1h-1zM323 356h1v1h-1zM323 371h1v1h-1zM323 375h1v1h-1zM323 390h1v1h-1zM324 336h1v1h-1zM324 353h1v1h-1zM324 355h1v1h-1zM324 372h1v1h-1zM324 374h1v1h-1zM324 391h1v1h-1zM325 335h1v1h-1zM325 354h1v1h-1zM325 373h1v1h-1zM325 392h1v1h-1z"/>
<path stroke="#0000FF" d="M181.5 160.5h8v8h-8zM199.5 152.5h8v8h-8zM217.5 146.5h8v8h-8zM236.5 142.5h8v8h-8zM256.5 140.5h8v8h-8zM275.5 140.5h8v8h-8zM295.5 142.5h8v8h-8zM315.5 146.5h8v8h-8zM334.5 152.5h8v8h-8zM353.5 160.5h8v8h-8zM371.5 170.5h8v8h-8zM391.5 174.5h8v8h-8zM412.5 180.5h8v8h-8zM431.5 181.5h8v8h-8zM448.5 178.5h8v8h-8zM467.5 179.5h8v8h-8zM484.5 178.5h8v8h-8zM503.5 181.5h8v8h-8zM523.5 188.5h8v8h-8zM543.5 198.5h8v8h-8zM562.5 210.5h8v8h-8zM182.5 178.5h8v8h-8zM200.5 172.5h8v8h-8zM219.5 168.5h8v8h-8zM238.5 165.5h8v8h-8zM257.5 163.5h8v8h-8zM277.5 163.5h8v8h-8zM296.5 165.5h8v8h-8zM316.5 168.5h8v8h-8zM335.5 173.5h8v8h-8zM354.5 180.5h8v8h-8zM373.5 187.5h8v8h-8zM393.5 190.5h8v8h-8zM413.5 196.5h8v8h-8zM432.5 197.5h8v8h-8zM450.5 195.5h8v8h-8zM468.5 197.5h8v8h-8zM487.5 197.5h8v8h-8zM506.5 200.5h8v8h-8zM525.5 206.5h8v8h-8zM545.5 215.5h8v8h-8zM564.5 225.5h8v8h-8zM182.5 198.5h8v8h-8zM201.5 194.5h8v8h-8zM220.5 190.5h8v8h-8zM239.5 186.5h8v8h-8zM259.5 186.5h8v8h-8zM278.5 186.5h8v8h-8zM297.5 187.5h8v8h-8zM317.5 190.5h8v8h-8zM336.5 192.5h8v8h-8zM355.5 198.5h8v8h-8zM374.5 204.5h8v8h-8zM394.5 206.5h8v8h-8zM414.5 212.5h8v8h-8zM433.5 213.5h8v8h-8zM451.5 213.5h8v8h-8zM470.5 216.5h8v8h-8zM489.5 216.5h8v8h-8zM508.5 219.5h8v8h-8zM527.5 224.5h8v8h-8zM547.5 231.5h8v8h-8zM566.5 240.5h8v8h-8zM183.5 217.5h8v8h-8zM202.5 214.5h8v8h-8zM221.5 211.5h8v8h-8zM240.5 210.5h8v8h-8zM260.5 209.5h8v8h-8zM279.5 209.5h8v8h-8zM298.5 210.5h8v8h-8zM318.5 211.5h8v8h-8zM337.5 214.5h8v8h-8zM356.5 217.5h8v8h-8zM376.5 220.5h8v8h-8zM395.5 223.5h8v8h-8zM415.5 227.5h8v8h-8zM434.5 230.5h8v8h-8zM453.5 230.5h8v8h-8zM472.5 233.5h8v8h-8zM491.5 234.5h8v8h-8zM510.5 238.5h8v8h-8zM529.5 242.5h8v8h-8zM549.5 248.5h8v8h-8zM568.5 255.5h8v8h-8zM184.5 236.5h8v8h-8zM203.5 234.5h8v8h-8zM222.5 233.5h8v8h-8zM241.5 232.5h8v8h-8zM261.5 232.5h8v8h-8zM280.5 232.5h8v8h-8zM299.5 232.5h8v8h-8zM319.5 233.5h8v8h-8zM338.5 234.5h8v8h-8zM357.5 236.5h8v8h-8zM377.5 238.5h8v8h-8zM396.5 239.5h8v8h-8zM415.5 243.5h8v8h-8zM435.5 246.5h8v8h-8zM454.5 247.5h8v8h-8zM473.5 250.5h8v8h-8zM492.5 254.5h8v8h-8zM511.5 256.5h8v8h-8zM531.5 260.5h8v8h-8zM550.5 264.5h8v8h-8zM569.5 268.5h8v8h-8zM185.5 255.5h8v8h-8zM204.5 255.5h8v8h-8zM224.5 255.5h8v8h-8zM243.5 255.5h8v8h-8zM262.5 255.5h8v8h-8zM282.5 255.5h8v8h-8zM301.5 255.5h8v8h-8zM321.5 255.5h8v8h-8zM340.5 255.5h8v8h-8zM359.5 255.5h8v8h-8zM379.5 255.5h8v8h-8zM398.5 255.5h8v8h-8zM416.5 258.5h8v8h-8zM436.5 262.5h8v8h-8zM455.5 265.5h8v8h-8zM474.5 268.5h8v8h-8zM493.5 270.5h8v8h-8zM513.5 274.5h8v8h-8zM532.5 277.5h8v8h-8zM551.5 280.5h8v8h-8zM571.5 283.5h8v8h-8zM185.5 274.5h8v8h-8zM204.5 274.5h8v8h-8zM224.5 274.5h8v8h-8zM243.5 274.5h8v8h-8zM262.5 274.5h8v8h-8zM282.5 274.5h8v8h-8zM301.5 274.5h8v8h-8zM321.5 274.5h8v8h-8zM340.5 274.5h8v8h-8zM359.5 274.5h8v8h-8zM379.5 274.5h8v8h-8zM398.5 274.5h8v8h-8zM417.5 277.5h8v8h-8zM436.5 279.5h8v8h-8zM455.5 282.5h8v8h-8zM475.5 284.5h8v8h-8zM494.5 286.5h8v8h-8zM514.5 289.5h8v8h-8zM533.5 292.5h8v8h-8zM552.5 294.5h8v8h-8zM572.5 297.5h8v8h-8zM301.5 293.5h8v8h-8zM321.5 293.5h8v8h-8zM340.5 293.5h8v8h-8zM359.5 293.5h8v8h-8zM379.5 293.5h8v8h-8zM398.5 293.5h8v8h-8zM417.5 294.5h8v8h-8zM437.5 296.5h8v8h-8zM456.5 298.5h8v8h-8zM475.5 300.5h8v8h-8zM495.5 302.5h8v8h-8zM514.5 305.5h8v8h-8zM534.5 307.5h8v8h-8zM553.5 308.5h8v8h-8zM572.5 310.5h8v8h-8zM301.5 312.5h8v8h-8zM321.5 312.5h8v8h-8zM340.5 312.5h8v8h-8zM359.5 312.5h8v8h-8zM379.5 312.5h8v8h-8zM398.5 312.5h8v8h-8zM418.5 313.5h8v8h-8zM437.5 315.5h8v8h-8zM456.5 316.5h8v8h-8zM476.5 317.5h8v8h-8zM495.5 318.5h8v8h-8zM515.5 320.5h8v8h-8zM534.5 321.5h8v8h-8zM553.5 322.5h8v8h-8zM573.5 324.5h8v8h-8zM340.5 331.5h8v8h-8zM359.5 331.5h8v8h-8zM379.5 331.5h8v8h-8zM398.5 331.5h8v8h-8zM418.5 331.5h8v8h-8zM437.5 332.5h8v8h-8zM456.5 332.5h8v8h-8zM476.5 334.5h8v8h-8zM495.5 334.5h8v8h-8zM515.5 335.5h8v8h-8zM534.5 336.5h8v8h-8zM554.5 336.5h8v8h-8zM573.5 337.5h8v8h-8zM340.5 350.5h8v8h-8zM359.5 350.5h8v8h-8zM379.5 350.5h8v8h-8zM398.5 350.5h8v8h-8zM418.5 350.5h8v8h-8zM437.5 350.5h8v8h-8zM456.5 350.5h8v8h-8zM476.5 350.5h8v8h-8zM495.5 350.5h8v8h-8zM515.5 350.5h8v8h-8zM534.5 350.5h8v8h-8zM554.5 350.5h8v8h-8zM573.5 351.5h8v8h-8zM340.5 369.5h8v8h-8zM359.5 369.5h8v8h-8zM379.5 369.5h8v8h-8zM398.5 369.5h8v8h-8zM418.5 369.5h8v8h-8zM437.5 369.5h8v8h-8zM456.5 369.5h8v8h-8zM476.5 369.5h8v8h-8zM495.5 369.5h8v8h-8zM515.5 369.5h8v8h-8zM534.5 369.5h8v8h-8zM553.5 369.5h8v8h-8zM573.5 369.5h8v8h-8zM340.5 388.5h8v8h-8zM359.5 388.5h8v8h-8zM379.5 388.5h8v8h-8zM398.5 388.5h8v8h-8zM418.5 388.5h8v8h-8zM437.5 388.5h8v8h-8zM456.5 388.5h8v8h-8zM476.5 388.5h8v8h-8zM495.5 388.5h8v8h-8zM515.5 388.5h8v8h-8zM534.5 388.5h8v8h-8zM553.5 388.5h8v8h-8zM573.5 388.5h8v8h-8zM301.5 407.5h8v8h-8zM320.5 407.5h8v8h-8zM340.5 407.5h8v8h-8zM359.5 407.5h8v8h-8zM378.5 407.5h8v8h-8zM398.5 407.5h8v8h-8zM417.5 407.5h8v8h-8zM436.5 407.5h8v8h-8zM456.5 407.5h8v8h-8zM475.5 407.5h8v8h-8zM494.5 407.5h8v8h-8zM514.5 407.5h8v8h-8zM533.5 407.5h8v8h-8zM553.5 407.5h8v8h-8zM572.5 407.5h8v8h-8zM300.5 426.5h8v8h-8zM319.5 426.5h8v8h-8zM339.5 426.5h8v8h-8zM358.5 426.5h8v8h-8zM377.5 426.5h8v8h-8zM397.5 426.5h8v8h-8zM416.5 426.5h8v8h-8zM435.5 426.5h8v8h-8zM455.5 426.5h8v8h-8zM474.5 426.5h8v8h-8zM493.5 426.5h8v8h-8zM513.5 426.5h8v8h-8zM532.5 426.5h8v8h-8zM551.5 426.5h8v8h-8zM571.5 426.5h8v8h-8zM299.5 445.5h8v8h-8zM319.5 445.5h8v8h-8zM338.5 445.5h8v8h-8zM357.5 445.5h8v8h-8zM377.5 445.5h8v8h-8zM396.5 445.5h8v8h-8zM415.5 445.5h8v8h-8zM434.5 445.5h8v8h-8zM454.5 445.5h8v8h-8zM473.5 445.5h8v8h-8zM492.5 445.5h8v8h-8zM512.5 445.5h8v8h-8zM531.5 445.5h8v8h-8zM550.5 445.5h8v8h-8zM569.5 445.5h8v8h-8zM299.5 464.5h8v8h-8zM318.5 464.5h8v8h-8zM337.5 464.5h8v8h-8zM356.5 464.5h8v8h-8zM375.5 464.5h8v8h-8zM395.5 464.5h8v8h-8zM414.5 464.5h8v8h-8zM433.5 464.5h8v8h-8zM452.5 464.5h8v8h-8zM472.5 464.5h8v8h-8zM491.5 464.5h8v8h-8zM510.5 464.5h8v8h-8zM529.5 464.5h8v8h-8zM549.5 464.5h8v8h-8zM568.5 464.5h8v8h-8zM298.5 483.5h8v8h-8zM317.5 483.5h8v8h-8zM336.5 483.5h8v8h-8zM355.5 483.5h8v8h-8zM374.5 483.5h8v8h-8zM394.5 483.5h8v8h-8zM413.5 483.5h8v8h-8zM432.5 483.5h8v8h-8zM451.5 483.5h8v8h-8zM470.5 483.5h8v8h-8zM489.5 483.5h8v8h-8zM509.5 483.5h8v8h-8zM528.5 483.5h8v8h-8zM547.5 483.5h8v8h-8zM566.5 483.5h8v8h-8zM182.5 502.5h8v8h-8zM201.5 502.5h8v8h-8zM220.5 502.5h8v8h-8zM239.5 502.5h8v8h-8zM258.5 502.5h8v8h-8zM278.5 502.5h8v8h-8zM297.5 502.5h8v8h-8zM316.5 502.5h8v8h-8zM335.5 502.5h8v8h-8zM354.5 502.5h8v8h-8zM373.5 502.5h8v8h-8zM392.5 502.5h8v8h-8zM411.5 502.5h8v8h-8zM431.5 502.5h8v8h-8zM450.5 502.5h8v8h-8zM469.5 502.5h8v8h-8zM488.5 502.5h8v8h-8zM507.5 502.5h8v8h-8zM526.5 502.5h8v8h-8zM545.5 502.5h8v8h-8zM564.5 502.5h8v8h-8zM181.5 521.5h8v8h-8zM200.5 521.5h8v8h-8zM219.5 521.5h8v8h-8zM238.5 521.5h8v8h-8zM258.5 521.5h8v8h-8zM277.5 521.5h8v8h-8zM296.5 521.5h8v8h-8zM315.5 521.5h8v8h-8zM334.5 521.5h8v8h-8zM353.5 521.5h8v8h-8zM372.5 521.5h8v8h-8zM391.5 521.5h8v8h-8zM410.5 521.5h8v8h-8zM429.5 521.5h8v8h-8zM448.5 521.5h8v8h-8zM467.5 521.5h8v8h-8zM486.5 521.5h8v8h-8zM505.5 521.5h8v8h-8zM524.5 521.5h8v8h-8zM543.5 521.5h8v8h-8zM563.5 521.5h8v8h-8zM181.5 540.5h8v8h-8zM200.5 540.5h8v8h-8zM219.5 540.5h8v8h-8zM238.5 540.5h8v8h-8zM257.5 540.5h8v8h-8zM276.5 540.5h8v8h-8zM295.5 540.5h8v8h-8zM314.5 540.5h8v8h-8zM333.5 540.5h8v8h-8zM352.5 540.5h8v8h-8zM371.5 540.5h8v8h-8zM390.5 540.5h8v8h-8zM409.5 540.5h8v8h-8zM428.5 540.5h8v8h-8zM447.5 540.5h8v8h-8zM466.5 540.5h8v8h-8zM485.5 540.5h8v8h-8zM504.5 540.5h8v8h-8zM523.5 540.5h8v8h-8zM542.5 540.5h8v8h-8zM561.5 540.5h8v8h-8z"/>
<path fill="#0000FF" stroke="none" d="M185 293h8v8h-8zM204 293h8v8h-8zM224 293h8v8h-8zM243 293h8v8h-8zM262 293h8v8h-8zM282 293h8v8h-8zM185 312h8v8h-8zM204 312h8v8h-8zM224 312h8v8h-8zM243 312h8v8h-8zM262 312h8v8h-8zM282 312h8v8h-8zM185 331h8v8h-8zM204 331h8v8h-8zM224 331h8v8h-8zM243 331h8v8h-8zM262 331h8v8h-8zM282 331h8v8h-8zM301 331h8v8h-8zM321 331h8v8h-8zM185 350h8v8h-8zM204 350h8v8h-8zM224 350h8v8h-8zM243 350h8v8h-8zM262 350h8v8h-8zM282 350h8v8h-8zM301 350h8v8h-8zM321 350h8v8h-8zM185 369h8v8h-8zM204 369h8v8h-8zM224 369h8v8h-8zM243 369h8v8h-8zM262 369h8v8h-8zM282 369h8v8h-8zM301 369h8v8h-8zM321 369h8v8h-8zM185 388h8v8h-8zM204 388h8v8h-8zM224 388h8v8h-8zM243 388h8v8h-8zM262 388h8v8h-8zM282 388h8v8h-8zM301 388h8v8h-8zM321 388h8v8h-8zM185 407h8v8h-8zM204 407h8v8h-8zM223 407h8v8h-8zM243 407h8v8h-8zM262 407h8v8h-8zM281 407h8v8h-8zM184 426h8v8h-8zM203 426h8v8h-8zM223 426h8v8h-8zM242 426h8v8h-8zM261 426h8v8h-8zM281 426h8v8h-8zM184 445h8v8h-8zM203 445h8v8h-8zM222 445h8v8h-8zM241 445h8v8h-8zM261 445h8v8h-8zM280 445h8v8h-8zM183 464h8v8h-8zM202 464h8v8h-8zM222 464h8v8h-8zM241 464h8v8h-8zM260 464h8v8h-8zM279 464h8v8h-8zM183 483h8v8h-8zM202 483h8v8h-8zM221 483h8v8h-8zM240 483h8v8h-8zM259 483h8v8h-8zM278 483h8v8h-8z"/>
<path stroke="#FF00FF" d="M182.5 293.5h147v198h-147z"/>
</g>
</svg>
<div class="a" id="win"></div>
</body>
</html>
